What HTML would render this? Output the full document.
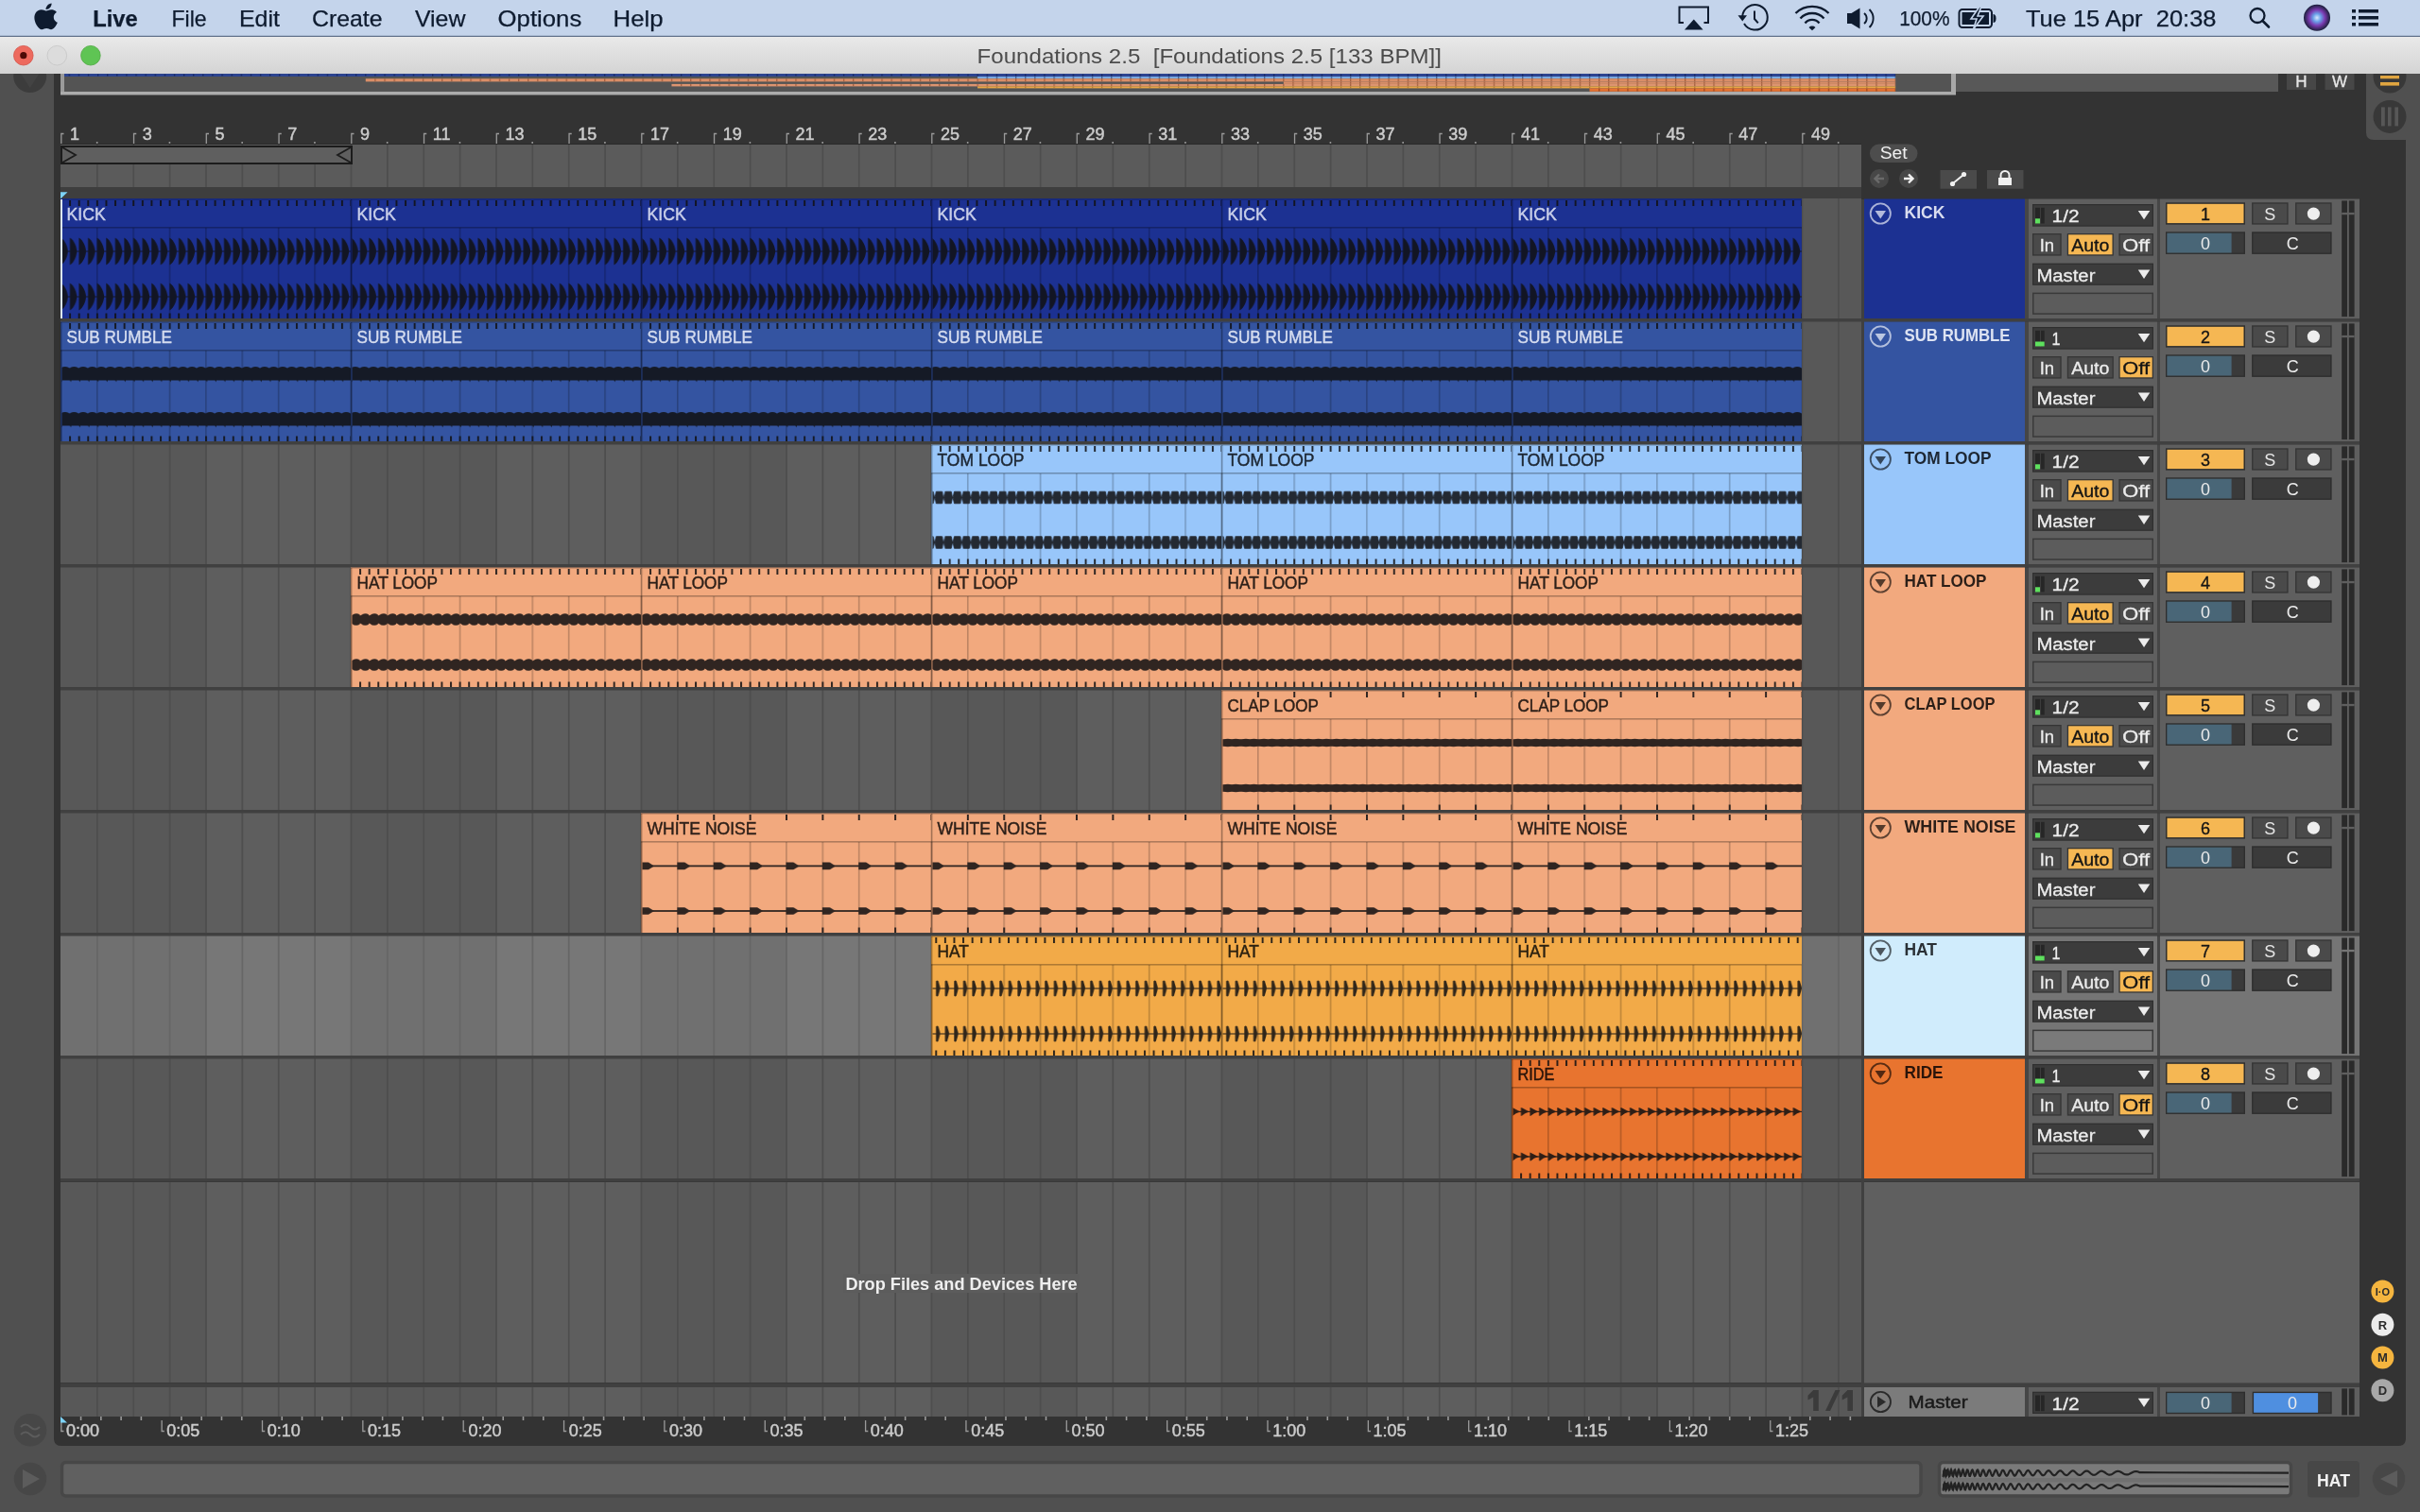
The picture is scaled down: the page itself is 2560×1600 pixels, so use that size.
<!DOCTYPE html>
<html><head><meta charset="utf-8"><title>Foundations 2.5</title>
<style>html,body{margin:0;padding:0;background:#505050;overflow:hidden;width:2560px;height:1600px}svg{display:block;will-change:transform}text{font-family:"Liberation Sans",sans-serif;white-space:pre}</style></head>
<body><svg width="2560" height="1600" viewBox="0 0 2560 1600"><defs><pattern id="cbar" patternUnits="userSpaceOnUse" x="63.6" y="0" width="38.375" height="126"><rect x="0" y="30" width="1.6" height="96" fill="rgba(0,0,0,0.22)"/></pattern>
<pattern id="ovt780" patternUnits="userSpaceOnUse" x="62.50" y="0" width="10.115" height="200"><rect x="0" y="78.60" width="1.3" height="1.80" fill="#0f1a45" opacity="0.75"/></pattern>
<pattern id="ovt810" patternUnits="userSpaceOnUse" x="1033.54" y="0" width="10.115" height="200"><rect x="0" y="81.20" width="1.3" height="1.80" fill="#2a3f70" opacity="0.75"/></pattern>
<pattern id="ovt832" patternUnits="userSpaceOnUse" x="386.18" y="0" width="10.115" height="200"><rect x="0" y="83.20" width="1.3" height="3.20" fill="#7a3c20" opacity="0.55"/></pattern>
<pattern id="ovt864" patternUnits="userSpaceOnUse" x="1357.22" y="0" width="10.115" height="200"><rect x="0" y="86.40" width="1.3" height="2.50" fill="#7a3c20" opacity="0.55"/></pattern>
<pattern id="ovt889" patternUnits="userSpaceOnUse" x="709.86" y="0" width="10.115" height="200"><rect x="0" y="88.90" width="1.3" height="2.50" fill="#7a3c20" opacity="0.55"/></pattern>
<pattern id="ovt914" patternUnits="userSpaceOnUse" x="1033.54" y="0" width="10.115" height="200"><rect x="0" y="91.40" width="1.3" height="2.00" fill="#8a5a20" opacity="0.55"/></pattern>
<pattern id="ovt934" patternUnits="userSpaceOnUse" x="1680.90" y="0" width="10.115" height="200"><rect x="0" y="93.40" width="1.3" height="3.40" fill="#6a2a10" opacity="0.55"/></pattern>
<pattern id="tkb0" patternUnits="userSpaceOnUse" x="63.5" y="0" width="9.59375" height="126"><rect x="0" y="1" width="2" height="6" fill="#121524"/><rect x="0" y="120.5" width="2" height="5.5" fill="#121524"/></pattern>
<pattern id="tkbh0" patternUnits="userSpaceOnUse" x="68.296875" y="0" width="9.59375" height="126"><rect x="0" y="1" width="2" height="6" fill="#121524"/><rect x="0" y="120.5" width="2" height="5.5" fill="#121524"/></pattern>
<pattern id="tkbar0" patternUnits="userSpaceOnUse" x="63.5" y="0" width="38.375" height="126"><rect x="0" y="1" width="2" height="6" fill="#121524"/><rect x="0" y="120.5" width="2" height="5.5" fill="#121524"/></pattern>
<pattern id="wkick0" patternUnits="userSpaceOnUse" x="64.0" y="0" width="9.59375" height="126"><path d="M0.3 40.5 C5 43 7.8 51 7.8 55 C7.8 59 5 67 0.3 69.5 Z" fill="#121524"/><rect x="0" y="54.5" width="9.59375" height="1" fill="#121524"/><path d="M0.3 88.5 C5 91 7.8 99 7.8 103 C7.8 107 5 115 0.3 117.5 Z" fill="#121524"/><rect x="0" y="102.5" width="9.59375" height="1" fill="#121524"/></pattern>
<pattern id="tkb1" patternUnits="userSpaceOnUse" x="63.5" y="0" width="9.59375" height="126"><rect x="0" y="1" width="2" height="6" fill="#151a26"/><rect x="0" y="120.5" width="2" height="5.5" fill="#151a26"/></pattern>
<pattern id="tkbh1" patternUnits="userSpaceOnUse" x="68.296875" y="0" width="9.59375" height="126"><rect x="0" y="1" width="2" height="6" fill="#151a26"/><rect x="0" y="120.5" width="2" height="5.5" fill="#151a26"/></pattern>
<pattern id="tkbar1" patternUnits="userSpaceOnUse" x="63.5" y="0" width="38.375" height="126"><rect x="0" y="1" width="2" height="6" fill="#151a26"/><rect x="0" y="120.5" width="2" height="5.5" fill="#151a26"/></pattern>
<pattern id="wsub1" patternUnits="userSpaceOnUse" x="64.0" y="0" width="9.59375" height="126"><rect x="0" y="48.5" width="9.59375" height="13" fill="#151a26"/><ellipse cx="4.796875" cy="49.5" rx="4.6" ry="2.6" fill="#151a26"/><path d="M0 60 L1.2 63.5 L2.4 60 Z" fill="#151a26"/><rect x="0" y="96.5" width="9.59375" height="13" fill="#151a26"/><ellipse cx="4.796875" cy="97.5" rx="4.6" ry="2.6" fill="#151a26"/><path d="M0 108 L1.2 111.5 L2.4 108 Z" fill="#151a26"/></pattern>
<pattern id="tkb2" patternUnits="userSpaceOnUse" x="63.5" y="0" width="9.59375" height="126"><rect x="0" y="1" width="2" height="6" fill="#232932"/><rect x="0" y="120.5" width="2" height="5.5" fill="#232932"/></pattern>
<pattern id="tkbh2" patternUnits="userSpaceOnUse" x="68.296875" y="0" width="9.59375" height="126"><rect x="0" y="1" width="2" height="6" fill="#232932"/><rect x="0" y="120.5" width="2" height="5.5" fill="#232932"/></pattern>
<pattern id="tkbar2" patternUnits="userSpaceOnUse" x="63.5" y="0" width="38.375" height="126"><rect x="0" y="1" width="2" height="6" fill="#232932"/><rect x="0" y="120.5" width="2" height="5.5" fill="#232932"/></pattern>
<pattern id="wtom2" patternUnits="userSpaceOnUse" x="64.0" y="0" width="9.59375" height="126"><rect x="0" y="54.9" width="9.59375" height="1.2" fill="#232932"/><path d="M3.89 55.5 L5.29 49.2 H11.69 L13.09 55.5 L11.69 61.8 H5.29 Z" fill="#232932" stroke="#232932" stroke-width="0.8" stroke-linejoin="round"/><path d="M-5.70 55.5 L-4.30 49.2 H2.10 L3.50 55.5 L2.10 61.8 H-4.30 Z" fill="#232932" stroke="#232932" stroke-width="0.8" stroke-linejoin="round"/><rect x="0" y="102.4" width="9.59375" height="1.2" fill="#232932"/><path d="M3.89 103 L5.29 96.7 H11.69 L13.09 103 L11.69 109.3 H5.29 Z" fill="#232932" stroke="#232932" stroke-width="0.8" stroke-linejoin="round"/><path d="M-5.70 103 L-4.30 96.7 H2.10 L3.50 103 L2.10 109.3 H-4.30 Z" fill="#232932" stroke="#232932" stroke-width="0.8" stroke-linejoin="round"/></pattern>
<pattern id="tkb3" patternUnits="userSpaceOnUse" x="63.5" y="0" width="9.59375" height="126"><rect x="0" y="1" width="2" height="6" fill="#302521"/><rect x="0" y="120.5" width="2" height="5.5" fill="#302521"/></pattern>
<pattern id="tkbh3" patternUnits="userSpaceOnUse" x="68.296875" y="0" width="9.59375" height="126"><rect x="0" y="1" width="2" height="6" fill="#302521"/><rect x="0" y="120.5" width="2" height="5.5" fill="#302521"/></pattern>
<pattern id="tkbar3" patternUnits="userSpaceOnUse" x="63.5" y="0" width="38.375" height="126"><rect x="0" y="1" width="2" height="6" fill="#302521"/><rect x="0" y="120.5" width="2" height="5.5" fill="#302521"/></pattern>
<pattern id="whl3" patternUnits="userSpaceOnUse" x="64.0" y="0" width="9.59375" height="126"><rect x="0" y="50.3" width="9.59375" height="8.4" fill="#302521"/><circle cx="5.796875" cy="54.5" r="6.3" fill="#302521"/><rect x="0" y="98.3" width="9.59375" height="8.4" fill="#302521"/><circle cx="5.796875" cy="102.5" r="6.3" fill="#302521"/></pattern>
<pattern id="tkb4" patternUnits="userSpaceOnUse" x="63.5" y="0" width="9.59375" height="126"><rect x="0" y="1" width="2" height="6" fill="#302521"/><rect x="0" y="120.5" width="2" height="5.5" fill="#302521"/></pattern>
<pattern id="tkbh4" patternUnits="userSpaceOnUse" x="68.296875" y="0" width="9.59375" height="126"><rect x="0" y="1" width="2" height="6" fill="#302521"/><rect x="0" y="120.5" width="2" height="5.5" fill="#302521"/></pattern>
<pattern id="tkbar4" patternUnits="userSpaceOnUse" x="63.5" y="0" width="38.375" height="126"><rect x="0" y="1" width="2" height="6" fill="#302521"/><rect x="0" y="120.5" width="2" height="5.5" fill="#302521"/></pattern>
<pattern id="wclap4" patternUnits="userSpaceOnUse" x="64.0" y="0" width="19.1875" height="126"><rect x="0" y="51.2" width="19.1875" height="7.6" fill="#302521"/><ellipse cx="6.715624999999999" cy="55" rx="6" ry="4.3" fill="#302521"/><ellipse cx="15.350000000000001" cy="55" rx="6" ry="4.3" fill="#302521"/><rect x="0" y="99.2" width="19.1875" height="7.6" fill="#302521"/><ellipse cx="6.715624999999999" cy="103" rx="6" ry="4.3" fill="#302521"/><ellipse cx="15.350000000000001" cy="103" rx="6" ry="4.3" fill="#302521"/></pattern>
<pattern id="tkb5" patternUnits="userSpaceOnUse" x="63.5" y="0" width="9.59375" height="126"><rect x="0" y="1" width="2" height="6" fill="#302521"/><rect x="0" y="120.5" width="2" height="5.5" fill="#302521"/></pattern>
<pattern id="tkbh5" patternUnits="userSpaceOnUse" x="68.296875" y="0" width="9.59375" height="126"><rect x="0" y="1" width="2" height="6" fill="#302521"/><rect x="0" y="120.5" width="2" height="5.5" fill="#302521"/></pattern>
<pattern id="tkbar5" patternUnits="userSpaceOnUse" x="63.5" y="0" width="38.375" height="126"><rect x="0" y="1" width="2" height="6" fill="#302521"/><rect x="0" y="120.5" width="2" height="5.5" fill="#302521"/></pattern>
<pattern id="wwn5" patternUnits="userSpaceOnUse" x="64.0" y="0" width="38.375" height="126"><rect x="0" y="54.5" width="38.375" height="1.8" fill="#302521"/><path d="M0 51.6 H8 L14 55.4 L8 59.199999999999996 H0 Z" fill="#302521"/><rect x="0" y="102.1" width="38.375" height="1.8" fill="#302521"/><path d="M0 99.2 H8 L14 103 L8 106.8 H0 Z" fill="#302521"/></pattern>
<pattern id="tkb6" patternUnits="userSpaceOnUse" x="63.5" y="0" width="9.59375" height="126"><rect x="0" y="1" width="2" height="6" fill="#30261a"/><rect x="0" y="120.5" width="2" height="5.5" fill="#30261a"/></pattern>
<pattern id="tkbh6" patternUnits="userSpaceOnUse" x="68.296875" y="0" width="9.59375" height="126"><rect x="0" y="1" width="2" height="6" fill="#30261a"/><rect x="0" y="120.5" width="2" height="5.5" fill="#30261a"/></pattern>
<pattern id="tkbar6" patternUnits="userSpaceOnUse" x="63.5" y="0" width="38.375" height="126"><rect x="0" y="1" width="2" height="6" fill="#30261a"/><rect x="0" y="120.5" width="2" height="5.5" fill="#30261a"/></pattern>
<pattern id="what6" patternUnits="userSpaceOnUse" x="64.0" y="0" width="9.59375" height="126"><rect x="0" y="54.45" width="9.59375" height="1.1" fill="#30261a"/><path d="M5.1 47.4 Q6.4 45.6 7.7 47.4 L9.4 53.5 Q9.6 55 9 57.5 L7.5 62.8 Q6.3 64.4 5.1 62.8 Z" fill="#30261a"/><rect x="0" y="102.45" width="9.59375" height="1.1" fill="#30261a"/><path d="M5.1 95.4 Q6.4 93.6 7.7 95.4 L9.4 101.5 Q9.6 103 9 105.5 L7.5 110.8 Q6.3 112.4 5.1 110.8 Z" fill="#30261a"/></pattern>
<pattern id="tkb7" patternUnits="userSpaceOnUse" x="63.5" y="0" width="9.59375" height="126"><rect x="0" y="1" width="2" height="6" fill="#2e1e16"/><rect x="0" y="120.5" width="2" height="5.5" fill="#2e1e16"/></pattern>
<pattern id="tkbh7" patternUnits="userSpaceOnUse" x="68.296875" y="0" width="9.59375" height="126"><rect x="0" y="1" width="2" height="6" fill="#2e1e16"/><rect x="0" y="120.5" width="2" height="5.5" fill="#2e1e16"/></pattern>
<pattern id="tkbar7" patternUnits="userSpaceOnUse" x="63.5" y="0" width="38.375" height="126"><rect x="0" y="1" width="2" height="6" fill="#2e1e16"/><rect x="0" y="120.5" width="2" height="5.5" fill="#2e1e16"/></pattern>
<pattern id="wride7" patternUnits="userSpaceOnUse" x="64.0" y="0" width="9.59375" height="126"><rect x="0" y="54.8" width="9.59375" height="1.2" fill="#2e1e16"/><path d="M0.3 51.199999999999996 Q0.6 50.8 1.4 51.3 L9.3 55.4 Q4.2 56.6 1.2 59.8 Q0.3 60.1 0.3 59.199999999999996 Z" fill="#2e1e16"/><rect x="0" y="102.4" width="9.59375" height="1.2" fill="#2e1e16"/><path d="M0.3 98.8 Q0.6 98.4 1.4 98.9 L9.3 103 Q4.2 104.2 1.2 107.4 Q0.3 107.7 0.3 106.8 Z" fill="#2e1e16"/></pattern>
<linearGradient id="tbg" x1="0" y1="0" x2="0" y2="1"><stop offset="0" stop-color="#e9e9e9"/><stop offset="1" stop-color="#d4d4d4"/></linearGradient>
<radialGradient id="siri" cx="0.5" cy="0.5" r="0.5"><stop offset="0" stop-color="#d8e8ff"/><stop offset="0.3" stop-color="#6aa0e8"/><stop offset="0.6" stop-color="#7a3ab0"/><stop offset="1" stop-color="#1a1f3a"/></radialGradient></defs>
<rect x="0.00" y="0.00" width="2560.00" height="1600.00" fill="#505050" />
<path d="M57 78 H2545 V1522 Q2545 1530 2537 1530 H65 Q57 1530 57 1522 Z" fill="#333333"/>
<path d="M2503 78 H2560 V148 H2511 Q2503 148 2503 140 Z" fill="#505050"/>
<circle cx="2528" cy="81" r="17.5" fill="#383838"/><rect x="2518" y="80" width="20" height="3.3" fill="#e0a540"/><rect x="2518" y="87" width="20" height="3.6" fill="#e0a540"/>
<circle cx="2528" cy="123.4" r="17.5" fill="#383838"/><rect x="2519" y="113.4" width="3.8" height="20" fill="#575757"/><rect x="2526" y="113.4" width="3.6" height="20" fill="#575757"/><rect x="2533.3" y="113.4" width="3.7" height="20" fill="#575757"/>
<circle cx="31.7" cy="80.6" r="17.5" fill="#3c3c3c"/><path d="M22 78 L31.7 93 L41.4 78" fill="#505050" opacity="0.35"/>
<rect x="64.00" y="78.00" width="2005.00" height="19.00" fill="#545454" />
<rect x="64.00" y="97.00" width="2005.00" height="3.50" fill="#acacac" />
<rect x="64.00" y="78.00" width="4.00" height="19.00" fill="#9a9a9a" />
<rect x="2064.00" y="78.00" width="5.00" height="21.00" fill="#a8a8a8" />
<rect x="68.00" y="78.00" width="1937.18" height="3.00" fill="#2c4490" />
<rect x="70.00" y="78.00" width="1935.18" height="3.00" fill="url(#ovt780)" />
<rect x="1034.14" y="81.00" width="971.04" height="2.20" fill="#7ba9df" />
<rect x="1036.14" y="81.00" width="969.04" height="2.20" fill="url(#ovt810)" />
<rect x="386.78" y="83.20" width="1618.40" height="3.20" fill="#d98e68" />
<rect x="388.78" y="83.20" width="1616.40" height="3.20" fill="url(#ovt832)" />
<rect x="1357.82" y="86.40" width="647.36" height="2.50" fill="#d98e68" />
<rect x="1359.82" y="86.40" width="645.36" height="2.50" fill="url(#ovt864)" />
<rect x="710.46" y="88.90" width="1294.72" height="2.50" fill="#dc9470" />
<rect x="712.46" y="88.90" width="1292.72" height="2.50" fill="url(#ovt889)" />
<rect x="1034.14" y="91.40" width="971.04" height="2.00" fill="#eaa746" />
<rect x="1036.14" y="91.40" width="969.04" height="2.00" fill="url(#ovt914)" />
<rect x="1681.50" y="93.40" width="323.68" height="3.40" fill="#e47232" />
<rect x="1683.50" y="93.40" width="321.68" height="3.40" fill="url(#ovt934)" />
<rect x="2069.00" y="78.00" width="341.00" height="19.00" fill="#585858" />
<rect x="2419.00" y="78.00" width="31.00" height="17.00" fill="#474747" />
<rect x="2459.50" y="78.00" width="31.00" height="17.00" fill="#474747" />
<text x="2434.50" y="91.50" font-size="17" fill="#e6e6e6" font-weight="normal" text-anchor="middle" stroke="#e6e6e6" stroke-width="0.3" >H</text>
<text x="2475.00" y="91.50" font-size="17" fill="#e6e6e6" font-weight="normal" text-anchor="middle" stroke="#e6e6e6" stroke-width="0.3" >W</text>
<path d="M64.80 152 V141.5 H67.50" fill="none" stroke="#9a9a9a" stroke-width="1.3"/>
<text x="74.00" y="148.30" font-size="18" fill="#cccccc" font-weight="normal" text-anchor="start" stroke="#cccccc" stroke-width="0.45" >1</text>
<rect x="101.88" y="150.00" width="1.60" height="1.80" fill="#9a9a9a" />
<path d="M141.55 152 V141.5 H144.25" fill="none" stroke="#9a9a9a" stroke-width="1.3"/>
<text x="150.75" y="148.30" font-size="18" fill="#cccccc" font-weight="normal" text-anchor="start" stroke="#cccccc" stroke-width="0.45" >3</text>
<rect x="178.62" y="150.00" width="1.60" height="1.80" fill="#9a9a9a" />
<path d="M218.30 152 V141.5 H221.00" fill="none" stroke="#9a9a9a" stroke-width="1.3"/>
<text x="227.50" y="148.30" font-size="18" fill="#cccccc" font-weight="normal" text-anchor="start" stroke="#cccccc" stroke-width="0.45" >5</text>
<rect x="255.38" y="150.00" width="1.60" height="1.80" fill="#9a9a9a" />
<path d="M295.05 152 V141.5 H297.75" fill="none" stroke="#9a9a9a" stroke-width="1.3"/>
<text x="304.25" y="148.30" font-size="18" fill="#cccccc" font-weight="normal" text-anchor="start" stroke="#cccccc" stroke-width="0.45" >7</text>
<rect x="332.12" y="150.00" width="1.60" height="1.80" fill="#9a9a9a" />
<path d="M371.80 152 V141.5 H374.50" fill="none" stroke="#9a9a9a" stroke-width="1.3"/>
<text x="381.00" y="148.30" font-size="18" fill="#cccccc" font-weight="normal" text-anchor="start" stroke="#cccccc" stroke-width="0.45" >9</text>
<rect x="408.88" y="150.00" width="1.60" height="1.80" fill="#9a9a9a" />
<path d="M448.55 152 V141.5 H451.25" fill="none" stroke="#9a9a9a" stroke-width="1.3"/>
<text x="457.75" y="148.30" font-size="18" fill="#cccccc" font-weight="normal" text-anchor="start" stroke="#cccccc" stroke-width="0.45" >11</text>
<rect x="485.62" y="150.00" width="1.60" height="1.80" fill="#9a9a9a" />
<path d="M525.30 152 V141.5 H528.00" fill="none" stroke="#9a9a9a" stroke-width="1.3"/>
<text x="534.50" y="148.30" font-size="18" fill="#cccccc" font-weight="normal" text-anchor="start" stroke="#cccccc" stroke-width="0.45" >13</text>
<rect x="562.38" y="150.00" width="1.60" height="1.80" fill="#9a9a9a" />
<path d="M602.05 152 V141.5 H604.75" fill="none" stroke="#9a9a9a" stroke-width="1.3"/>
<text x="611.25" y="148.30" font-size="18" fill="#cccccc" font-weight="normal" text-anchor="start" stroke="#cccccc" stroke-width="0.45" >15</text>
<rect x="639.12" y="150.00" width="1.60" height="1.80" fill="#9a9a9a" />
<path d="M678.80 152 V141.5 H681.50" fill="none" stroke="#9a9a9a" stroke-width="1.3"/>
<text x="688.00" y="148.30" font-size="18" fill="#cccccc" font-weight="normal" text-anchor="start" stroke="#cccccc" stroke-width="0.45" >17</text>
<rect x="715.88" y="150.00" width="1.60" height="1.80" fill="#9a9a9a" />
<path d="M755.55 152 V141.5 H758.25" fill="none" stroke="#9a9a9a" stroke-width="1.3"/>
<text x="764.75" y="148.30" font-size="18" fill="#cccccc" font-weight="normal" text-anchor="start" stroke="#cccccc" stroke-width="0.45" >19</text>
<rect x="792.62" y="150.00" width="1.60" height="1.80" fill="#9a9a9a" />
<path d="M832.30 152 V141.5 H835.00" fill="none" stroke="#9a9a9a" stroke-width="1.3"/>
<text x="841.50" y="148.30" font-size="18" fill="#cccccc" font-weight="normal" text-anchor="start" stroke="#cccccc" stroke-width="0.45" >21</text>
<rect x="869.38" y="150.00" width="1.60" height="1.80" fill="#9a9a9a" />
<path d="M909.05 152 V141.5 H911.75" fill="none" stroke="#9a9a9a" stroke-width="1.3"/>
<text x="918.25" y="148.30" font-size="18" fill="#cccccc" font-weight="normal" text-anchor="start" stroke="#cccccc" stroke-width="0.45" >23</text>
<rect x="946.12" y="150.00" width="1.60" height="1.80" fill="#9a9a9a" />
<path d="M985.80 152 V141.5 H988.50" fill="none" stroke="#9a9a9a" stroke-width="1.3"/>
<text x="995.00" y="148.30" font-size="18" fill="#cccccc" font-weight="normal" text-anchor="start" stroke="#cccccc" stroke-width="0.45" >25</text>
<rect x="1022.88" y="150.00" width="1.60" height="1.80" fill="#9a9a9a" />
<path d="M1062.55 152 V141.5 H1065.25" fill="none" stroke="#9a9a9a" stroke-width="1.3"/>
<text x="1071.75" y="148.30" font-size="18" fill="#cccccc" font-weight="normal" text-anchor="start" stroke="#cccccc" stroke-width="0.45" >27</text>
<rect x="1099.62" y="150.00" width="1.60" height="1.80" fill="#9a9a9a" />
<path d="M1139.30 152 V141.5 H1142.00" fill="none" stroke="#9a9a9a" stroke-width="1.3"/>
<text x="1148.50" y="148.30" font-size="18" fill="#cccccc" font-weight="normal" text-anchor="start" stroke="#cccccc" stroke-width="0.45" >29</text>
<rect x="1176.38" y="150.00" width="1.60" height="1.80" fill="#9a9a9a" />
<path d="M1216.05 152 V141.5 H1218.75" fill="none" stroke="#9a9a9a" stroke-width="1.3"/>
<text x="1225.25" y="148.30" font-size="18" fill="#cccccc" font-weight="normal" text-anchor="start" stroke="#cccccc" stroke-width="0.45" >31</text>
<rect x="1253.12" y="150.00" width="1.60" height="1.80" fill="#9a9a9a" />
<path d="M1292.80 152 V141.5 H1295.50" fill="none" stroke="#9a9a9a" stroke-width="1.3"/>
<text x="1302.00" y="148.30" font-size="18" fill="#cccccc" font-weight="normal" text-anchor="start" stroke="#cccccc" stroke-width="0.45" >33</text>
<rect x="1329.88" y="150.00" width="1.60" height="1.80" fill="#9a9a9a" />
<path d="M1369.55 152 V141.5 H1372.25" fill="none" stroke="#9a9a9a" stroke-width="1.3"/>
<text x="1378.75" y="148.30" font-size="18" fill="#cccccc" font-weight="normal" text-anchor="start" stroke="#cccccc" stroke-width="0.45" >35</text>
<rect x="1406.62" y="150.00" width="1.60" height="1.80" fill="#9a9a9a" />
<path d="M1446.30 152 V141.5 H1449.00" fill="none" stroke="#9a9a9a" stroke-width="1.3"/>
<text x="1455.50" y="148.30" font-size="18" fill="#cccccc" font-weight="normal" text-anchor="start" stroke="#cccccc" stroke-width="0.45" >37</text>
<rect x="1483.38" y="150.00" width="1.60" height="1.80" fill="#9a9a9a" />
<path d="M1523.05 152 V141.5 H1525.75" fill="none" stroke="#9a9a9a" stroke-width="1.3"/>
<text x="1532.25" y="148.30" font-size="18" fill="#cccccc" font-weight="normal" text-anchor="start" stroke="#cccccc" stroke-width="0.45" >39</text>
<rect x="1560.12" y="150.00" width="1.60" height="1.80" fill="#9a9a9a" />
<path d="M1599.80 152 V141.5 H1602.50" fill="none" stroke="#9a9a9a" stroke-width="1.3"/>
<text x="1609.00" y="148.30" font-size="18" fill="#cccccc" font-weight="normal" text-anchor="start" stroke="#cccccc" stroke-width="0.45" >41</text>
<rect x="1636.88" y="150.00" width="1.60" height="1.80" fill="#9a9a9a" />
<path d="M1676.55 152 V141.5 H1679.25" fill="none" stroke="#9a9a9a" stroke-width="1.3"/>
<text x="1685.75" y="148.30" font-size="18" fill="#cccccc" font-weight="normal" text-anchor="start" stroke="#cccccc" stroke-width="0.45" >43</text>
<rect x="1713.62" y="150.00" width="1.60" height="1.80" fill="#9a9a9a" />
<path d="M1753.30 152 V141.5 H1756.00" fill="none" stroke="#9a9a9a" stroke-width="1.3"/>
<text x="1762.50" y="148.30" font-size="18" fill="#cccccc" font-weight="normal" text-anchor="start" stroke="#cccccc" stroke-width="0.45" >45</text>
<rect x="1790.38" y="150.00" width="1.60" height="1.80" fill="#9a9a9a" />
<path d="M1830.05 152 V141.5 H1832.75" fill="none" stroke="#9a9a9a" stroke-width="1.3"/>
<text x="1839.25" y="148.30" font-size="18" fill="#cccccc" font-weight="normal" text-anchor="start" stroke="#cccccc" stroke-width="0.45" >47</text>
<rect x="1867.12" y="150.00" width="1.60" height="1.80" fill="#9a9a9a" />
<path d="M1906.80 152 V141.5 H1909.50" fill="none" stroke="#9a9a9a" stroke-width="1.3"/>
<text x="1916.00" y="148.30" font-size="18" fill="#cccccc" font-weight="normal" text-anchor="start" stroke="#cccccc" stroke-width="0.45" >49</text>
<rect x="1943.88" y="150.00" width="1.60" height="1.80" fill="#9a9a9a" />
<rect x="64.00" y="152.00" width="1905.00" height="1.00" fill="#2a2a2a" />
<rect x="64.00" y="153.00" width="1905.00" height="45.00" fill="#5b5b5b" />
<rect x="102.03" y="153.00" width="1.70" height="45.00" fill="#4e4e4e" />
<rect x="140.40" y="153.00" width="1.70" height="45.00" fill="#4e4e4e" />
<rect x="178.78" y="153.00" width="1.70" height="45.00" fill="#4e4e4e" />
<rect x="217.15" y="153.00" width="1.70" height="45.00" fill="#4e4e4e" />
<rect x="255.53" y="153.00" width="1.70" height="45.00" fill="#4e4e4e" />
<rect x="293.90" y="153.00" width="1.70" height="45.00" fill="#4e4e4e" />
<rect x="332.27" y="153.00" width="1.70" height="45.00" fill="#4e4e4e" />
<rect x="370.65" y="153.00" width="1.70" height="45.00" fill="#4e4e4e" />
<rect x="409.02" y="153.00" width="1.70" height="45.00" fill="#4e4e4e" />
<rect x="447.40" y="153.00" width="1.70" height="45.00" fill="#4e4e4e" />
<rect x="485.77" y="153.00" width="1.70" height="45.00" fill="#4e4e4e" />
<rect x="524.15" y="153.00" width="1.70" height="45.00" fill="#4e4e4e" />
<rect x="562.52" y="153.00" width="1.70" height="45.00" fill="#4e4e4e" />
<rect x="600.90" y="153.00" width="1.70" height="45.00" fill="#4e4e4e" />
<rect x="639.27" y="153.00" width="1.70" height="45.00" fill="#4e4e4e" />
<rect x="677.65" y="153.00" width="1.70" height="45.00" fill="#4e4e4e" />
<rect x="716.02" y="153.00" width="1.70" height="45.00" fill="#4e4e4e" />
<rect x="754.40" y="153.00" width="1.70" height="45.00" fill="#4e4e4e" />
<rect x="792.77" y="153.00" width="1.70" height="45.00" fill="#4e4e4e" />
<rect x="831.15" y="153.00" width="1.70" height="45.00" fill="#4e4e4e" />
<rect x="869.52" y="153.00" width="1.70" height="45.00" fill="#4e4e4e" />
<rect x="907.90" y="153.00" width="1.70" height="45.00" fill="#4e4e4e" />
<rect x="946.27" y="153.00" width="1.70" height="45.00" fill="#4e4e4e" />
<rect x="984.65" y="153.00" width="1.70" height="45.00" fill="#4e4e4e" />
<rect x="1023.02" y="153.00" width="1.70" height="45.00" fill="#4e4e4e" />
<rect x="1061.40" y="153.00" width="1.70" height="45.00" fill="#4e4e4e" />
<rect x="1099.78" y="153.00" width="1.70" height="45.00" fill="#4e4e4e" />
<rect x="1138.15" y="153.00" width="1.70" height="45.00" fill="#4e4e4e" />
<rect x="1176.53" y="153.00" width="1.70" height="45.00" fill="#4e4e4e" />
<rect x="1214.90" y="153.00" width="1.70" height="45.00" fill="#4e4e4e" />
<rect x="1253.28" y="153.00" width="1.70" height="45.00" fill="#4e4e4e" />
<rect x="1291.65" y="153.00" width="1.70" height="45.00" fill="#4e4e4e" />
<rect x="1330.03" y="153.00" width="1.70" height="45.00" fill="#4e4e4e" />
<rect x="1368.40" y="153.00" width="1.70" height="45.00" fill="#4e4e4e" />
<rect x="1406.78" y="153.00" width="1.70" height="45.00" fill="#4e4e4e" />
<rect x="1445.15" y="153.00" width="1.70" height="45.00" fill="#4e4e4e" />
<rect x="1483.53" y="153.00" width="1.70" height="45.00" fill="#4e4e4e" />
<rect x="1521.90" y="153.00" width="1.70" height="45.00" fill="#4e4e4e" />
<rect x="1560.28" y="153.00" width="1.70" height="45.00" fill="#4e4e4e" />
<rect x="1598.65" y="153.00" width="1.70" height="45.00" fill="#4e4e4e" />
<rect x="1637.03" y="153.00" width="1.70" height="45.00" fill="#4e4e4e" />
<rect x="1675.40" y="153.00" width="1.70" height="45.00" fill="#4e4e4e" />
<rect x="1713.78" y="153.00" width="1.70" height="45.00" fill="#4e4e4e" />
<rect x="1752.15" y="153.00" width="1.70" height="45.00" fill="#4e4e4e" />
<rect x="1790.53" y="153.00" width="1.70" height="45.00" fill="#4e4e4e" />
<rect x="1828.90" y="153.00" width="1.70" height="45.00" fill="#4e4e4e" />
<rect x="1867.28" y="153.00" width="1.70" height="45.00" fill="#4e4e4e" />
<rect x="1905.65" y="153.00" width="1.70" height="45.00" fill="#4e4e4e" />
<rect x="1944.03" y="153.00" width="1.70" height="45.00" fill="#4e4e4e" />
<rect x="65" y="155" width="307" height="18" fill="#5f5f5f" stroke="#1c1c1c" stroke-width="2"/>
<path d="M66 156 L80 164 L66 172" fill="none" stroke="#1c1c1c" stroke-width="1.8"/>
<path d="M371 156 L357 164 L371 172" fill="none" stroke="#1c1c1c" stroke-width="1.8"/>
<rect x="64.00" y="198.00" width="1905.00" height="13.00" fill="#3e3e3e" />
<path d="M64 203.3 H71.5 L64 210.5 Z" fill="#7dd3f7"/>
<rect x="64.00" y="210.00" width="153.50" height="127.00" fill="#585858" />
<rect x="217.50" y="210.00" width="153.50" height="127.00" fill="#5e5e5e" />
<rect x="371.00" y="210.00" width="153.50" height="127.00" fill="#585858" />
<rect x="524.50" y="210.00" width="153.50" height="127.00" fill="#5e5e5e" />
<rect x="678.00" y="210.00" width="153.50" height="127.00" fill="#585858" />
<rect x="831.50" y="210.00" width="153.50" height="127.00" fill="#5e5e5e" />
<rect x="985.00" y="210.00" width="153.50" height="127.00" fill="#585858" />
<rect x="1138.50" y="210.00" width="153.50" height="127.00" fill="#5e5e5e" />
<rect x="1292.00" y="210.00" width="153.50" height="127.00" fill="#585858" />
<rect x="1445.50" y="210.00" width="153.50" height="127.00" fill="#5e5e5e" />
<rect x="1599.00" y="210.00" width="153.50" height="127.00" fill="#585858" />
<rect x="1752.50" y="210.00" width="153.50" height="127.00" fill="#5e5e5e" />
<rect x="1906.00" y="210.00" width="63.00" height="127.00" fill="#585858" />
<rect x="102.03" y="210.00" width="1.70" height="127.00" fill="#4e4e4e" />
<rect x="140.40" y="210.00" width="1.70" height="127.00" fill="#4e4e4e" />
<rect x="178.78" y="210.00" width="1.70" height="127.00" fill="#4e4e4e" />
<rect x="217.15" y="210.00" width="1.70" height="127.00" fill="#4e4e4e" />
<rect x="255.53" y="210.00" width="1.70" height="127.00" fill="#4e4e4e" />
<rect x="293.90" y="210.00" width="1.70" height="127.00" fill="#4e4e4e" />
<rect x="332.27" y="210.00" width="1.70" height="127.00" fill="#4e4e4e" />
<rect x="370.65" y="210.00" width="1.70" height="127.00" fill="#4e4e4e" />
<rect x="409.02" y="210.00" width="1.70" height="127.00" fill="#4e4e4e" />
<rect x="447.40" y="210.00" width="1.70" height="127.00" fill="#4e4e4e" />
<rect x="485.77" y="210.00" width="1.70" height="127.00" fill="#4e4e4e" />
<rect x="524.15" y="210.00" width="1.70" height="127.00" fill="#4e4e4e" />
<rect x="562.52" y="210.00" width="1.70" height="127.00" fill="#4e4e4e" />
<rect x="600.90" y="210.00" width="1.70" height="127.00" fill="#4e4e4e" />
<rect x="639.27" y="210.00" width="1.70" height="127.00" fill="#4e4e4e" />
<rect x="677.65" y="210.00" width="1.70" height="127.00" fill="#4e4e4e" />
<rect x="716.02" y="210.00" width="1.70" height="127.00" fill="#4e4e4e" />
<rect x="754.40" y="210.00" width="1.70" height="127.00" fill="#4e4e4e" />
<rect x="792.77" y="210.00" width="1.70" height="127.00" fill="#4e4e4e" />
<rect x="831.15" y="210.00" width="1.70" height="127.00" fill="#4e4e4e" />
<rect x="869.52" y="210.00" width="1.70" height="127.00" fill="#4e4e4e" />
<rect x="907.90" y="210.00" width="1.70" height="127.00" fill="#4e4e4e" />
<rect x="946.27" y="210.00" width="1.70" height="127.00" fill="#4e4e4e" />
<rect x="984.65" y="210.00" width="1.70" height="127.00" fill="#4e4e4e" />
<rect x="1023.02" y="210.00" width="1.70" height="127.00" fill="#4e4e4e" />
<rect x="1061.40" y="210.00" width="1.70" height="127.00" fill="#4e4e4e" />
<rect x="1099.78" y="210.00" width="1.70" height="127.00" fill="#4e4e4e" />
<rect x="1138.15" y="210.00" width="1.70" height="127.00" fill="#4e4e4e" />
<rect x="1176.53" y="210.00" width="1.70" height="127.00" fill="#4e4e4e" />
<rect x="1214.90" y="210.00" width="1.70" height="127.00" fill="#4e4e4e" />
<rect x="1253.28" y="210.00" width="1.70" height="127.00" fill="#4e4e4e" />
<rect x="1291.65" y="210.00" width="1.70" height="127.00" fill="#4e4e4e" />
<rect x="1330.03" y="210.00" width="1.70" height="127.00" fill="#4e4e4e" />
<rect x="1368.40" y="210.00" width="1.70" height="127.00" fill="#4e4e4e" />
<rect x="1406.78" y="210.00" width="1.70" height="127.00" fill="#4e4e4e" />
<rect x="1445.15" y="210.00" width="1.70" height="127.00" fill="#4e4e4e" />
<rect x="1483.53" y="210.00" width="1.70" height="127.00" fill="#4e4e4e" />
<rect x="1521.90" y="210.00" width="1.70" height="127.00" fill="#4e4e4e" />
<rect x="1560.28" y="210.00" width="1.70" height="127.00" fill="#4e4e4e" />
<rect x="1598.65" y="210.00" width="1.70" height="127.00" fill="#4e4e4e" />
<rect x="1637.03" y="210.00" width="1.70" height="127.00" fill="#4e4e4e" />
<rect x="1675.40" y="210.00" width="1.70" height="127.00" fill="#4e4e4e" />
<rect x="1713.78" y="210.00" width="1.70" height="127.00" fill="#4e4e4e" />
<rect x="1752.15" y="210.00" width="1.70" height="127.00" fill="#4e4e4e" />
<rect x="1790.53" y="210.00" width="1.70" height="127.00" fill="#4e4e4e" />
<rect x="1828.90" y="210.00" width="1.70" height="127.00" fill="#4e4e4e" />
<rect x="1867.28" y="210.00" width="1.70" height="127.00" fill="#4e4e4e" />
<rect x="1905.65" y="210.00" width="1.70" height="127.00" fill="#4e4e4e" />
<rect x="1944.03" y="210.00" width="1.70" height="127.00" fill="#4e4e4e" />
<g transform="translate(0,211)">
<rect x="64.00" y="-1.00" width="307.00" height="127.00" fill="#1c3192" />
<rect x="64.00" y="0.00" width="307.00" height="126.00" fill="url(#cbar)" />
<rect x="65.50" y="30.00" width="305.50" height="96.00" fill="url(#wkick0)" />
<rect x="66.00" y="0.00" width="305.00" height="126.00" fill="url(#tkb0)" />
<rect x="64.00" y="-0.50" width="307.00" height="1.00" fill="rgba(0,0,0,0.3)" />
<rect x="64.00" y="29.00" width="307.00" height="1.60" fill="rgba(0,0,0,0.28)" />
<rect x="63.80" y="0.00" width="1.60" height="126.00" fill="rgba(0,0,0,0.33)" />
<text x="70.50" y="21.80" font-size="18.5" fill="#c9cfe9" font-weight="normal" text-anchor="start" textLength="41.30" lengthAdjust="spacingAndGlyphs" stroke="#c9cfe9" stroke-width="0.45" >KICK</text>
<rect x="371.00" y="-1.00" width="307.00" height="127.00" fill="#1c3192" />
<rect x="371.00" y="0.00" width="307.00" height="126.00" fill="url(#cbar)" />
<rect x="372.50" y="30.00" width="305.50" height="96.00" fill="url(#wkick0)" />
<rect x="373.00" y="0.00" width="305.00" height="126.00" fill="url(#tkb0)" />
<rect x="371.00" y="-0.50" width="307.00" height="1.00" fill="rgba(0,0,0,0.3)" />
<rect x="371.00" y="29.00" width="307.00" height="1.60" fill="rgba(0,0,0,0.28)" />
<rect x="370.80" y="0.00" width="1.60" height="126.00" fill="rgba(0,0,0,0.33)" />
<text x="377.50" y="21.80" font-size="18.5" fill="#c9cfe9" font-weight="normal" text-anchor="start" textLength="41.30" lengthAdjust="spacingAndGlyphs" stroke="#c9cfe9" stroke-width="0.45" >KICK</text>
<rect x="678.00" y="-1.00" width="307.00" height="127.00" fill="#1c3192" />
<rect x="678.00" y="0.00" width="307.00" height="126.00" fill="url(#cbar)" />
<rect x="679.50" y="30.00" width="305.50" height="96.00" fill="url(#wkick0)" />
<rect x="680.00" y="0.00" width="305.00" height="126.00" fill="url(#tkb0)" />
<rect x="678.00" y="-0.50" width="307.00" height="1.00" fill="rgba(0,0,0,0.3)" />
<rect x="678.00" y="29.00" width="307.00" height="1.60" fill="rgba(0,0,0,0.28)" />
<rect x="677.80" y="0.00" width="1.60" height="126.00" fill="rgba(0,0,0,0.33)" />
<text x="684.50" y="21.80" font-size="18.5" fill="#c9cfe9" font-weight="normal" text-anchor="start" textLength="41.30" lengthAdjust="spacingAndGlyphs" stroke="#c9cfe9" stroke-width="0.45" >KICK</text>
<rect x="985.00" y="-1.00" width="307.00" height="127.00" fill="#1c3192" />
<rect x="985.00" y="0.00" width="307.00" height="126.00" fill="url(#cbar)" />
<rect x="986.50" y="30.00" width="305.50" height="96.00" fill="url(#wkick0)" />
<rect x="987.00" y="0.00" width="305.00" height="126.00" fill="url(#tkb0)" />
<rect x="985.00" y="-0.50" width="307.00" height="1.00" fill="rgba(0,0,0,0.3)" />
<rect x="985.00" y="29.00" width="307.00" height="1.60" fill="rgba(0,0,0,0.28)" />
<rect x="984.80" y="0.00" width="1.60" height="126.00" fill="rgba(0,0,0,0.33)" />
<text x="991.50" y="21.80" font-size="18.5" fill="#c9cfe9" font-weight="normal" text-anchor="start" textLength="41.30" lengthAdjust="spacingAndGlyphs" stroke="#c9cfe9" stroke-width="0.45" >KICK</text>
<rect x="1292.00" y="-1.00" width="307.00" height="127.00" fill="#1c3192" />
<rect x="1292.00" y="0.00" width="307.00" height="126.00" fill="url(#cbar)" />
<rect x="1293.50" y="30.00" width="305.50" height="96.00" fill="url(#wkick0)" />
<rect x="1294.00" y="0.00" width="305.00" height="126.00" fill="url(#tkb0)" />
<rect x="1292.00" y="-0.50" width="307.00" height="1.00" fill="rgba(0,0,0,0.3)" />
<rect x="1292.00" y="29.00" width="307.00" height="1.60" fill="rgba(0,0,0,0.28)" />
<rect x="1291.80" y="0.00" width="1.60" height="126.00" fill="rgba(0,0,0,0.33)" />
<text x="1298.50" y="21.80" font-size="18.5" fill="#c9cfe9" font-weight="normal" text-anchor="start" textLength="41.30" lengthAdjust="spacingAndGlyphs" stroke="#c9cfe9" stroke-width="0.45" >KICK</text>
<rect x="1599.00" y="-1.00" width="307.00" height="127.00" fill="#1c3192" />
<rect x="1599.00" y="0.00" width="307.00" height="126.00" fill="url(#cbar)" />
<rect x="1600.50" y="30.00" width="305.50" height="96.00" fill="url(#wkick0)" />
<rect x="1601.00" y="0.00" width="305.00" height="126.00" fill="url(#tkb0)" />
<rect x="1599.00" y="-0.50" width="307.00" height="1.00" fill="rgba(0,0,0,0.3)" />
<rect x="1599.00" y="29.00" width="307.00" height="1.60" fill="rgba(0,0,0,0.28)" />
<rect x="1598.80" y="0.00" width="1.60" height="126.00" fill="rgba(0,0,0,0.33)" />
<text x="1605.50" y="21.80" font-size="18.5" fill="#c9cfe9" font-weight="normal" text-anchor="start" textLength="41.30" lengthAdjust="spacingAndGlyphs" stroke="#c9cfe9" stroke-width="0.45" >KICK</text>
</g>
<rect x="64.00" y="340.00" width="153.50" height="127.00" fill="#585858" />
<rect x="217.50" y="340.00" width="153.50" height="127.00" fill="#5e5e5e" />
<rect x="371.00" y="340.00" width="153.50" height="127.00" fill="#585858" />
<rect x="524.50" y="340.00" width="153.50" height="127.00" fill="#5e5e5e" />
<rect x="678.00" y="340.00" width="153.50" height="127.00" fill="#585858" />
<rect x="831.50" y="340.00" width="153.50" height="127.00" fill="#5e5e5e" />
<rect x="985.00" y="340.00" width="153.50" height="127.00" fill="#585858" />
<rect x="1138.50" y="340.00" width="153.50" height="127.00" fill="#5e5e5e" />
<rect x="1292.00" y="340.00" width="153.50" height="127.00" fill="#585858" />
<rect x="1445.50" y="340.00" width="153.50" height="127.00" fill="#5e5e5e" />
<rect x="1599.00" y="340.00" width="153.50" height="127.00" fill="#585858" />
<rect x="1752.50" y="340.00" width="153.50" height="127.00" fill="#5e5e5e" />
<rect x="1906.00" y="340.00" width="63.00" height="127.00" fill="#585858" />
<rect x="102.03" y="340.00" width="1.70" height="127.00" fill="#4e4e4e" />
<rect x="140.40" y="340.00" width="1.70" height="127.00" fill="#4e4e4e" />
<rect x="178.78" y="340.00" width="1.70" height="127.00" fill="#4e4e4e" />
<rect x="217.15" y="340.00" width="1.70" height="127.00" fill="#4e4e4e" />
<rect x="255.53" y="340.00" width="1.70" height="127.00" fill="#4e4e4e" />
<rect x="293.90" y="340.00" width="1.70" height="127.00" fill="#4e4e4e" />
<rect x="332.27" y="340.00" width="1.70" height="127.00" fill="#4e4e4e" />
<rect x="370.65" y="340.00" width="1.70" height="127.00" fill="#4e4e4e" />
<rect x="409.02" y="340.00" width="1.70" height="127.00" fill="#4e4e4e" />
<rect x="447.40" y="340.00" width="1.70" height="127.00" fill="#4e4e4e" />
<rect x="485.77" y="340.00" width="1.70" height="127.00" fill="#4e4e4e" />
<rect x="524.15" y="340.00" width="1.70" height="127.00" fill="#4e4e4e" />
<rect x="562.52" y="340.00" width="1.70" height="127.00" fill="#4e4e4e" />
<rect x="600.90" y="340.00" width="1.70" height="127.00" fill="#4e4e4e" />
<rect x="639.27" y="340.00" width="1.70" height="127.00" fill="#4e4e4e" />
<rect x="677.65" y="340.00" width="1.70" height="127.00" fill="#4e4e4e" />
<rect x="716.02" y="340.00" width="1.70" height="127.00" fill="#4e4e4e" />
<rect x="754.40" y="340.00" width="1.70" height="127.00" fill="#4e4e4e" />
<rect x="792.77" y="340.00" width="1.70" height="127.00" fill="#4e4e4e" />
<rect x="831.15" y="340.00" width="1.70" height="127.00" fill="#4e4e4e" />
<rect x="869.52" y="340.00" width="1.70" height="127.00" fill="#4e4e4e" />
<rect x="907.90" y="340.00" width="1.70" height="127.00" fill="#4e4e4e" />
<rect x="946.27" y="340.00" width="1.70" height="127.00" fill="#4e4e4e" />
<rect x="984.65" y="340.00" width="1.70" height="127.00" fill="#4e4e4e" />
<rect x="1023.02" y="340.00" width="1.70" height="127.00" fill="#4e4e4e" />
<rect x="1061.40" y="340.00" width="1.70" height="127.00" fill="#4e4e4e" />
<rect x="1099.78" y="340.00" width="1.70" height="127.00" fill="#4e4e4e" />
<rect x="1138.15" y="340.00" width="1.70" height="127.00" fill="#4e4e4e" />
<rect x="1176.53" y="340.00" width="1.70" height="127.00" fill="#4e4e4e" />
<rect x="1214.90" y="340.00" width="1.70" height="127.00" fill="#4e4e4e" />
<rect x="1253.28" y="340.00" width="1.70" height="127.00" fill="#4e4e4e" />
<rect x="1291.65" y="340.00" width="1.70" height="127.00" fill="#4e4e4e" />
<rect x="1330.03" y="340.00" width="1.70" height="127.00" fill="#4e4e4e" />
<rect x="1368.40" y="340.00" width="1.70" height="127.00" fill="#4e4e4e" />
<rect x="1406.78" y="340.00" width="1.70" height="127.00" fill="#4e4e4e" />
<rect x="1445.15" y="340.00" width="1.70" height="127.00" fill="#4e4e4e" />
<rect x="1483.53" y="340.00" width="1.70" height="127.00" fill="#4e4e4e" />
<rect x="1521.90" y="340.00" width="1.70" height="127.00" fill="#4e4e4e" />
<rect x="1560.28" y="340.00" width="1.70" height="127.00" fill="#4e4e4e" />
<rect x="1598.65" y="340.00" width="1.70" height="127.00" fill="#4e4e4e" />
<rect x="1637.03" y="340.00" width="1.70" height="127.00" fill="#4e4e4e" />
<rect x="1675.40" y="340.00" width="1.70" height="127.00" fill="#4e4e4e" />
<rect x="1713.78" y="340.00" width="1.70" height="127.00" fill="#4e4e4e" />
<rect x="1752.15" y="340.00" width="1.70" height="127.00" fill="#4e4e4e" />
<rect x="1790.53" y="340.00" width="1.70" height="127.00" fill="#4e4e4e" />
<rect x="1828.90" y="340.00" width="1.70" height="127.00" fill="#4e4e4e" />
<rect x="1867.28" y="340.00" width="1.70" height="127.00" fill="#4e4e4e" />
<rect x="1905.65" y="340.00" width="1.70" height="127.00" fill="#4e4e4e" />
<rect x="1944.03" y="340.00" width="1.70" height="127.00" fill="#4e4e4e" />
<g transform="translate(0,341)">
<rect x="64.00" y="-1.00" width="307.00" height="127.00" fill="#3454a1" />
<rect x="64.00" y="0.00" width="307.00" height="126.00" fill="url(#cbar)" />
<rect x="65.50" y="30.00" width="305.50" height="96.00" fill="url(#wsub1)" />
<rect x="66.00" y="0.00" width="305.00" height="126.00" fill="url(#tkb1)" />
<rect x="64.00" y="-0.50" width="307.00" height="1.00" fill="rgba(0,0,0,0.3)" />
<rect x="64.00" y="29.00" width="307.00" height="1.60" fill="rgba(0,0,0,0.28)" />
<rect x="63.80" y="0.00" width="1.60" height="126.00" fill="rgba(0,0,0,0.33)" />
<text x="70.50" y="21.80" font-size="18.5" fill="#d5dcef" font-weight="normal" text-anchor="start" textLength="111.40" lengthAdjust="spacingAndGlyphs" stroke="#d5dcef" stroke-width="0.45" >SUB RUMBLE</text>
<rect x="371.00" y="-1.00" width="307.00" height="127.00" fill="#3454a1" />
<rect x="371.00" y="0.00" width="307.00" height="126.00" fill="url(#cbar)" />
<rect x="372.50" y="30.00" width="305.50" height="96.00" fill="url(#wsub1)" />
<rect x="373.00" y="0.00" width="305.00" height="126.00" fill="url(#tkb1)" />
<rect x="371.00" y="-0.50" width="307.00" height="1.00" fill="rgba(0,0,0,0.3)" />
<rect x="371.00" y="29.00" width="307.00" height="1.60" fill="rgba(0,0,0,0.28)" />
<rect x="370.80" y="0.00" width="1.60" height="126.00" fill="rgba(0,0,0,0.33)" />
<text x="377.50" y="21.80" font-size="18.5" fill="#d5dcef" font-weight="normal" text-anchor="start" textLength="111.40" lengthAdjust="spacingAndGlyphs" stroke="#d5dcef" stroke-width="0.45" >SUB RUMBLE</text>
<rect x="678.00" y="-1.00" width="307.00" height="127.00" fill="#3454a1" />
<rect x="678.00" y="0.00" width="307.00" height="126.00" fill="url(#cbar)" />
<rect x="679.50" y="30.00" width="305.50" height="96.00" fill="url(#wsub1)" />
<rect x="680.00" y="0.00" width="305.00" height="126.00" fill="url(#tkb1)" />
<rect x="678.00" y="-0.50" width="307.00" height="1.00" fill="rgba(0,0,0,0.3)" />
<rect x="678.00" y="29.00" width="307.00" height="1.60" fill="rgba(0,0,0,0.28)" />
<rect x="677.80" y="0.00" width="1.60" height="126.00" fill="rgba(0,0,0,0.33)" />
<text x="684.50" y="21.80" font-size="18.5" fill="#d5dcef" font-weight="normal" text-anchor="start" textLength="111.40" lengthAdjust="spacingAndGlyphs" stroke="#d5dcef" stroke-width="0.45" >SUB RUMBLE</text>
<rect x="985.00" y="-1.00" width="307.00" height="127.00" fill="#3454a1" />
<rect x="985.00" y="0.00" width="307.00" height="126.00" fill="url(#cbar)" />
<rect x="986.50" y="30.00" width="305.50" height="96.00" fill="url(#wsub1)" />
<rect x="987.00" y="0.00" width="305.00" height="126.00" fill="url(#tkb1)" />
<rect x="985.00" y="-0.50" width="307.00" height="1.00" fill="rgba(0,0,0,0.3)" />
<rect x="985.00" y="29.00" width="307.00" height="1.60" fill="rgba(0,0,0,0.28)" />
<rect x="984.80" y="0.00" width="1.60" height="126.00" fill="rgba(0,0,0,0.33)" />
<text x="991.50" y="21.80" font-size="18.5" fill="#d5dcef" font-weight="normal" text-anchor="start" textLength="111.40" lengthAdjust="spacingAndGlyphs" stroke="#d5dcef" stroke-width="0.45" >SUB RUMBLE</text>
<rect x="1292.00" y="-1.00" width="307.00" height="127.00" fill="#3454a1" />
<rect x="1292.00" y="0.00" width="307.00" height="126.00" fill="url(#cbar)" />
<rect x="1293.50" y="30.00" width="305.50" height="96.00" fill="url(#wsub1)" />
<rect x="1294.00" y="0.00" width="305.00" height="126.00" fill="url(#tkb1)" />
<rect x="1292.00" y="-0.50" width="307.00" height="1.00" fill="rgba(0,0,0,0.3)" />
<rect x="1292.00" y="29.00" width="307.00" height="1.60" fill="rgba(0,0,0,0.28)" />
<rect x="1291.80" y="0.00" width="1.60" height="126.00" fill="rgba(0,0,0,0.33)" />
<text x="1298.50" y="21.80" font-size="18.5" fill="#d5dcef" font-weight="normal" text-anchor="start" textLength="111.40" lengthAdjust="spacingAndGlyphs" stroke="#d5dcef" stroke-width="0.45" >SUB RUMBLE</text>
<rect x="1599.00" y="-1.00" width="307.00" height="127.00" fill="#3454a1" />
<rect x="1599.00" y="0.00" width="307.00" height="126.00" fill="url(#cbar)" />
<rect x="1600.50" y="30.00" width="305.50" height="96.00" fill="url(#wsub1)" />
<rect x="1601.00" y="0.00" width="305.00" height="126.00" fill="url(#tkb1)" />
<rect x="1599.00" y="-0.50" width="307.00" height="1.00" fill="rgba(0,0,0,0.3)" />
<rect x="1599.00" y="29.00" width="307.00" height="1.60" fill="rgba(0,0,0,0.28)" />
<rect x="1598.80" y="0.00" width="1.60" height="126.00" fill="rgba(0,0,0,0.33)" />
<text x="1605.50" y="21.80" font-size="18.5" fill="#d5dcef" font-weight="normal" text-anchor="start" textLength="111.40" lengthAdjust="spacingAndGlyphs" stroke="#d5dcef" stroke-width="0.45" >SUB RUMBLE</text>
</g>
<rect x="64.00" y="470.00" width="153.50" height="127.00" fill="#585858" />
<rect x="217.50" y="470.00" width="153.50" height="127.00" fill="#5e5e5e" />
<rect x="371.00" y="470.00" width="153.50" height="127.00" fill="#585858" />
<rect x="524.50" y="470.00" width="153.50" height="127.00" fill="#5e5e5e" />
<rect x="678.00" y="470.00" width="153.50" height="127.00" fill="#585858" />
<rect x="831.50" y="470.00" width="153.50" height="127.00" fill="#5e5e5e" />
<rect x="985.00" y="470.00" width="153.50" height="127.00" fill="#585858" />
<rect x="1138.50" y="470.00" width="153.50" height="127.00" fill="#5e5e5e" />
<rect x="1292.00" y="470.00" width="153.50" height="127.00" fill="#585858" />
<rect x="1445.50" y="470.00" width="153.50" height="127.00" fill="#5e5e5e" />
<rect x="1599.00" y="470.00" width="153.50" height="127.00" fill="#585858" />
<rect x="1752.50" y="470.00" width="153.50" height="127.00" fill="#5e5e5e" />
<rect x="1906.00" y="470.00" width="63.00" height="127.00" fill="#585858" />
<rect x="102.03" y="470.00" width="1.70" height="127.00" fill="#4e4e4e" />
<rect x="140.40" y="470.00" width="1.70" height="127.00" fill="#4e4e4e" />
<rect x="178.78" y="470.00" width="1.70" height="127.00" fill="#4e4e4e" />
<rect x="217.15" y="470.00" width="1.70" height="127.00" fill="#4e4e4e" />
<rect x="255.53" y="470.00" width="1.70" height="127.00" fill="#4e4e4e" />
<rect x="293.90" y="470.00" width="1.70" height="127.00" fill="#4e4e4e" />
<rect x="332.27" y="470.00" width="1.70" height="127.00" fill="#4e4e4e" />
<rect x="370.65" y="470.00" width="1.70" height="127.00" fill="#4e4e4e" />
<rect x="409.02" y="470.00" width="1.70" height="127.00" fill="#4e4e4e" />
<rect x="447.40" y="470.00" width="1.70" height="127.00" fill="#4e4e4e" />
<rect x="485.77" y="470.00" width="1.70" height="127.00" fill="#4e4e4e" />
<rect x="524.15" y="470.00" width="1.70" height="127.00" fill="#4e4e4e" />
<rect x="562.52" y="470.00" width="1.70" height="127.00" fill="#4e4e4e" />
<rect x="600.90" y="470.00" width="1.70" height="127.00" fill="#4e4e4e" />
<rect x="639.27" y="470.00" width="1.70" height="127.00" fill="#4e4e4e" />
<rect x="677.65" y="470.00" width="1.70" height="127.00" fill="#4e4e4e" />
<rect x="716.02" y="470.00" width="1.70" height="127.00" fill="#4e4e4e" />
<rect x="754.40" y="470.00" width="1.70" height="127.00" fill="#4e4e4e" />
<rect x="792.77" y="470.00" width="1.70" height="127.00" fill="#4e4e4e" />
<rect x="831.15" y="470.00" width="1.70" height="127.00" fill="#4e4e4e" />
<rect x="869.52" y="470.00" width="1.70" height="127.00" fill="#4e4e4e" />
<rect x="907.90" y="470.00" width="1.70" height="127.00" fill="#4e4e4e" />
<rect x="946.27" y="470.00" width="1.70" height="127.00" fill="#4e4e4e" />
<rect x="984.65" y="470.00" width="1.70" height="127.00" fill="#4e4e4e" />
<rect x="1023.02" y="470.00" width="1.70" height="127.00" fill="#4e4e4e" />
<rect x="1061.40" y="470.00" width="1.70" height="127.00" fill="#4e4e4e" />
<rect x="1099.78" y="470.00" width="1.70" height="127.00" fill="#4e4e4e" />
<rect x="1138.15" y="470.00" width="1.70" height="127.00" fill="#4e4e4e" />
<rect x="1176.53" y="470.00" width="1.70" height="127.00" fill="#4e4e4e" />
<rect x="1214.90" y="470.00" width="1.70" height="127.00" fill="#4e4e4e" />
<rect x="1253.28" y="470.00" width="1.70" height="127.00" fill="#4e4e4e" />
<rect x="1291.65" y="470.00" width="1.70" height="127.00" fill="#4e4e4e" />
<rect x="1330.03" y="470.00" width="1.70" height="127.00" fill="#4e4e4e" />
<rect x="1368.40" y="470.00" width="1.70" height="127.00" fill="#4e4e4e" />
<rect x="1406.78" y="470.00" width="1.70" height="127.00" fill="#4e4e4e" />
<rect x="1445.15" y="470.00" width="1.70" height="127.00" fill="#4e4e4e" />
<rect x="1483.53" y="470.00" width="1.70" height="127.00" fill="#4e4e4e" />
<rect x="1521.90" y="470.00" width="1.70" height="127.00" fill="#4e4e4e" />
<rect x="1560.28" y="470.00" width="1.70" height="127.00" fill="#4e4e4e" />
<rect x="1598.65" y="470.00" width="1.70" height="127.00" fill="#4e4e4e" />
<rect x="1637.03" y="470.00" width="1.70" height="127.00" fill="#4e4e4e" />
<rect x="1675.40" y="470.00" width="1.70" height="127.00" fill="#4e4e4e" />
<rect x="1713.78" y="470.00" width="1.70" height="127.00" fill="#4e4e4e" />
<rect x="1752.15" y="470.00" width="1.70" height="127.00" fill="#4e4e4e" />
<rect x="1790.53" y="470.00" width="1.70" height="127.00" fill="#4e4e4e" />
<rect x="1828.90" y="470.00" width="1.70" height="127.00" fill="#4e4e4e" />
<rect x="1867.28" y="470.00" width="1.70" height="127.00" fill="#4e4e4e" />
<rect x="1905.65" y="470.00" width="1.70" height="127.00" fill="#4e4e4e" />
<rect x="1944.03" y="470.00" width="1.70" height="127.00" fill="#4e4e4e" />
<g transform="translate(0,471)">
<rect x="985.00" y="-1.00" width="307.00" height="127.00" fill="#98c6fa" />
<rect x="985.00" y="0.00" width="307.00" height="126.00" fill="url(#cbar)" />
<rect x="986.50" y="30.00" width="305.50" height="96.00" fill="url(#wtom2)" />
<rect x="987.00" y="0.00" width="305.00" height="126.00" fill="url(#tkb2)" />
<rect x="985.00" y="-0.50" width="307.00" height="1.00" fill="rgba(0,0,0,0.3)" />
<rect x="985.00" y="29.00" width="307.00" height="1.60" fill="rgba(0,0,0,0.28)" />
<rect x="984.80" y="0.00" width="1.60" height="126.00" fill="rgba(0,0,0,0.33)" />
<text x="991.50" y="21.80" font-size="18.5" fill="#1d2733" font-weight="normal" text-anchor="start" textLength="92.00" lengthAdjust="spacingAndGlyphs" stroke="#1d2733" stroke-width="0.45" >TOM LOOP</text>
<rect x="1292.00" y="-1.00" width="307.00" height="127.00" fill="#98c6fa" />
<rect x="1292.00" y="0.00" width="307.00" height="126.00" fill="url(#cbar)" />
<rect x="1293.50" y="30.00" width="305.50" height="96.00" fill="url(#wtom2)" />
<rect x="1294.00" y="0.00" width="305.00" height="126.00" fill="url(#tkb2)" />
<rect x="1292.00" y="-0.50" width="307.00" height="1.00" fill="rgba(0,0,0,0.3)" />
<rect x="1292.00" y="29.00" width="307.00" height="1.60" fill="rgba(0,0,0,0.28)" />
<rect x="1291.80" y="0.00" width="1.60" height="126.00" fill="rgba(0,0,0,0.33)" />
<text x="1298.50" y="21.80" font-size="18.5" fill="#1d2733" font-weight="normal" text-anchor="start" textLength="92.00" lengthAdjust="spacingAndGlyphs" stroke="#1d2733" stroke-width="0.45" >TOM LOOP</text>
<rect x="1599.00" y="-1.00" width="307.00" height="127.00" fill="#98c6fa" />
<rect x="1599.00" y="0.00" width="307.00" height="126.00" fill="url(#cbar)" />
<rect x="1600.50" y="30.00" width="305.50" height="96.00" fill="url(#wtom2)" />
<rect x="1601.00" y="0.00" width="305.00" height="126.00" fill="url(#tkb2)" />
<rect x="1599.00" y="-0.50" width="307.00" height="1.00" fill="rgba(0,0,0,0.3)" />
<rect x="1599.00" y="29.00" width="307.00" height="1.60" fill="rgba(0,0,0,0.28)" />
<rect x="1598.80" y="0.00" width="1.60" height="126.00" fill="rgba(0,0,0,0.33)" />
<text x="1605.50" y="21.80" font-size="18.5" fill="#1d2733" font-weight="normal" text-anchor="start" textLength="92.00" lengthAdjust="spacingAndGlyphs" stroke="#1d2733" stroke-width="0.45" >TOM LOOP</text>
</g>
<rect x="64.00" y="600.00" width="153.50" height="127.00" fill="#585858" />
<rect x="217.50" y="600.00" width="153.50" height="127.00" fill="#5e5e5e" />
<rect x="371.00" y="600.00" width="153.50" height="127.00" fill="#585858" />
<rect x="524.50" y="600.00" width="153.50" height="127.00" fill="#5e5e5e" />
<rect x="678.00" y="600.00" width="153.50" height="127.00" fill="#585858" />
<rect x="831.50" y="600.00" width="153.50" height="127.00" fill="#5e5e5e" />
<rect x="985.00" y="600.00" width="153.50" height="127.00" fill="#585858" />
<rect x="1138.50" y="600.00" width="153.50" height="127.00" fill="#5e5e5e" />
<rect x="1292.00" y="600.00" width="153.50" height="127.00" fill="#585858" />
<rect x="1445.50" y="600.00" width="153.50" height="127.00" fill="#5e5e5e" />
<rect x="1599.00" y="600.00" width="153.50" height="127.00" fill="#585858" />
<rect x="1752.50" y="600.00" width="153.50" height="127.00" fill="#5e5e5e" />
<rect x="1906.00" y="600.00" width="63.00" height="127.00" fill="#585858" />
<rect x="102.03" y="600.00" width="1.70" height="127.00" fill="#4e4e4e" />
<rect x="140.40" y="600.00" width="1.70" height="127.00" fill="#4e4e4e" />
<rect x="178.78" y="600.00" width="1.70" height="127.00" fill="#4e4e4e" />
<rect x="217.15" y="600.00" width="1.70" height="127.00" fill="#4e4e4e" />
<rect x="255.53" y="600.00" width="1.70" height="127.00" fill="#4e4e4e" />
<rect x="293.90" y="600.00" width="1.70" height="127.00" fill="#4e4e4e" />
<rect x="332.27" y="600.00" width="1.70" height="127.00" fill="#4e4e4e" />
<rect x="370.65" y="600.00" width="1.70" height="127.00" fill="#4e4e4e" />
<rect x="409.02" y="600.00" width="1.70" height="127.00" fill="#4e4e4e" />
<rect x="447.40" y="600.00" width="1.70" height="127.00" fill="#4e4e4e" />
<rect x="485.77" y="600.00" width="1.70" height="127.00" fill="#4e4e4e" />
<rect x="524.15" y="600.00" width="1.70" height="127.00" fill="#4e4e4e" />
<rect x="562.52" y="600.00" width="1.70" height="127.00" fill="#4e4e4e" />
<rect x="600.90" y="600.00" width="1.70" height="127.00" fill="#4e4e4e" />
<rect x="639.27" y="600.00" width="1.70" height="127.00" fill="#4e4e4e" />
<rect x="677.65" y="600.00" width="1.70" height="127.00" fill="#4e4e4e" />
<rect x="716.02" y="600.00" width="1.70" height="127.00" fill="#4e4e4e" />
<rect x="754.40" y="600.00" width="1.70" height="127.00" fill="#4e4e4e" />
<rect x="792.77" y="600.00" width="1.70" height="127.00" fill="#4e4e4e" />
<rect x="831.15" y="600.00" width="1.70" height="127.00" fill="#4e4e4e" />
<rect x="869.52" y="600.00" width="1.70" height="127.00" fill="#4e4e4e" />
<rect x="907.90" y="600.00" width="1.70" height="127.00" fill="#4e4e4e" />
<rect x="946.27" y="600.00" width="1.70" height="127.00" fill="#4e4e4e" />
<rect x="984.65" y="600.00" width="1.70" height="127.00" fill="#4e4e4e" />
<rect x="1023.02" y="600.00" width="1.70" height="127.00" fill="#4e4e4e" />
<rect x="1061.40" y="600.00" width="1.70" height="127.00" fill="#4e4e4e" />
<rect x="1099.78" y="600.00" width="1.70" height="127.00" fill="#4e4e4e" />
<rect x="1138.15" y="600.00" width="1.70" height="127.00" fill="#4e4e4e" />
<rect x="1176.53" y="600.00" width="1.70" height="127.00" fill="#4e4e4e" />
<rect x="1214.90" y="600.00" width="1.70" height="127.00" fill="#4e4e4e" />
<rect x="1253.28" y="600.00" width="1.70" height="127.00" fill="#4e4e4e" />
<rect x="1291.65" y="600.00" width="1.70" height="127.00" fill="#4e4e4e" />
<rect x="1330.03" y="600.00" width="1.70" height="127.00" fill="#4e4e4e" />
<rect x="1368.40" y="600.00" width="1.70" height="127.00" fill="#4e4e4e" />
<rect x="1406.78" y="600.00" width="1.70" height="127.00" fill="#4e4e4e" />
<rect x="1445.15" y="600.00" width="1.70" height="127.00" fill="#4e4e4e" />
<rect x="1483.53" y="600.00" width="1.70" height="127.00" fill="#4e4e4e" />
<rect x="1521.90" y="600.00" width="1.70" height="127.00" fill="#4e4e4e" />
<rect x="1560.28" y="600.00" width="1.70" height="127.00" fill="#4e4e4e" />
<rect x="1598.65" y="600.00" width="1.70" height="127.00" fill="#4e4e4e" />
<rect x="1637.03" y="600.00" width="1.70" height="127.00" fill="#4e4e4e" />
<rect x="1675.40" y="600.00" width="1.70" height="127.00" fill="#4e4e4e" />
<rect x="1713.78" y="600.00" width="1.70" height="127.00" fill="#4e4e4e" />
<rect x="1752.15" y="600.00" width="1.70" height="127.00" fill="#4e4e4e" />
<rect x="1790.53" y="600.00" width="1.70" height="127.00" fill="#4e4e4e" />
<rect x="1828.90" y="600.00" width="1.70" height="127.00" fill="#4e4e4e" />
<rect x="1867.28" y="600.00" width="1.70" height="127.00" fill="#4e4e4e" />
<rect x="1905.65" y="600.00" width="1.70" height="127.00" fill="#4e4e4e" />
<rect x="1944.03" y="600.00" width="1.70" height="127.00" fill="#4e4e4e" />
<g transform="translate(0,601)">
<rect x="371.00" y="-1.00" width="307.00" height="127.00" fill="#f2a97e" />
<rect x="371.00" y="0.00" width="307.00" height="126.00" fill="url(#cbar)" />
<rect x="372.50" y="30.00" width="305.50" height="96.00" fill="url(#whl3)" />
<rect x="373.00" y="0.00" width="305.00" height="126.00" fill="url(#tkb3)" />
<rect x="371.00" y="-0.50" width="307.00" height="1.00" fill="rgba(0,0,0,0.3)" />
<rect x="371.00" y="29.00" width="307.00" height="1.60" fill="rgba(0,0,0,0.28)" />
<rect x="370.80" y="0.00" width="1.60" height="126.00" fill="rgba(0,0,0,0.33)" />
<text x="377.50" y="21.80" font-size="18.5" fill="#2c1f18" font-weight="normal" text-anchor="start" textLength="85.50" lengthAdjust="spacingAndGlyphs" stroke="#2c1f18" stroke-width="0.45" >HAT LOOP</text>
<rect x="678.00" y="-1.00" width="307.00" height="127.00" fill="#f2a97e" />
<rect x="678.00" y="0.00" width="307.00" height="126.00" fill="url(#cbar)" />
<rect x="679.50" y="30.00" width="305.50" height="96.00" fill="url(#whl3)" />
<rect x="680.00" y="0.00" width="305.00" height="126.00" fill="url(#tkb3)" />
<rect x="678.00" y="-0.50" width="307.00" height="1.00" fill="rgba(0,0,0,0.3)" />
<rect x="678.00" y="29.00" width="307.00" height="1.60" fill="rgba(0,0,0,0.28)" />
<rect x="677.80" y="0.00" width="1.60" height="126.00" fill="rgba(0,0,0,0.33)" />
<text x="684.50" y="21.80" font-size="18.5" fill="#2c1f18" font-weight="normal" text-anchor="start" textLength="85.50" lengthAdjust="spacingAndGlyphs" stroke="#2c1f18" stroke-width="0.45" >HAT LOOP</text>
<rect x="985.00" y="-1.00" width="307.00" height="127.00" fill="#f2a97e" />
<rect x="985.00" y="0.00" width="307.00" height="126.00" fill="url(#cbar)" />
<rect x="986.50" y="30.00" width="305.50" height="96.00" fill="url(#whl3)" />
<rect x="987.00" y="0.00" width="305.00" height="126.00" fill="url(#tkb3)" />
<rect x="985.00" y="-0.50" width="307.00" height="1.00" fill="rgba(0,0,0,0.3)" />
<rect x="985.00" y="29.00" width="307.00" height="1.60" fill="rgba(0,0,0,0.28)" />
<rect x="984.80" y="0.00" width="1.60" height="126.00" fill="rgba(0,0,0,0.33)" />
<text x="991.50" y="21.80" font-size="18.5" fill="#2c1f18" font-weight="normal" text-anchor="start" textLength="85.50" lengthAdjust="spacingAndGlyphs" stroke="#2c1f18" stroke-width="0.45" >HAT LOOP</text>
<rect x="1292.00" y="-1.00" width="307.00" height="127.00" fill="#f2a97e" />
<rect x="1292.00" y="0.00" width="307.00" height="126.00" fill="url(#cbar)" />
<rect x="1293.50" y="30.00" width="305.50" height="96.00" fill="url(#whl3)" />
<rect x="1294.00" y="0.00" width="305.00" height="126.00" fill="url(#tkb3)" />
<rect x="1292.00" y="-0.50" width="307.00" height="1.00" fill="rgba(0,0,0,0.3)" />
<rect x="1292.00" y="29.00" width="307.00" height="1.60" fill="rgba(0,0,0,0.28)" />
<rect x="1291.80" y="0.00" width="1.60" height="126.00" fill="rgba(0,0,0,0.33)" />
<text x="1298.50" y="21.80" font-size="18.5" fill="#2c1f18" font-weight="normal" text-anchor="start" textLength="85.50" lengthAdjust="spacingAndGlyphs" stroke="#2c1f18" stroke-width="0.45" >HAT LOOP</text>
<rect x="1599.00" y="-1.00" width="307.00" height="127.00" fill="#f2a97e" />
<rect x="1599.00" y="0.00" width="307.00" height="126.00" fill="url(#cbar)" />
<rect x="1600.50" y="30.00" width="305.50" height="96.00" fill="url(#whl3)" />
<rect x="1601.00" y="0.00" width="305.00" height="126.00" fill="url(#tkb3)" />
<rect x="1599.00" y="-0.50" width="307.00" height="1.00" fill="rgba(0,0,0,0.3)" />
<rect x="1599.00" y="29.00" width="307.00" height="1.60" fill="rgba(0,0,0,0.28)" />
<rect x="1598.80" y="0.00" width="1.60" height="126.00" fill="rgba(0,0,0,0.33)" />
<text x="1605.50" y="21.80" font-size="18.5" fill="#2c1f18" font-weight="normal" text-anchor="start" textLength="85.50" lengthAdjust="spacingAndGlyphs" stroke="#2c1f18" stroke-width="0.45" >HAT LOOP</text>
</g>
<rect x="64.00" y="730.00" width="153.50" height="127.00" fill="#585858" />
<rect x="217.50" y="730.00" width="153.50" height="127.00" fill="#5e5e5e" />
<rect x="371.00" y="730.00" width="153.50" height="127.00" fill="#585858" />
<rect x="524.50" y="730.00" width="153.50" height="127.00" fill="#5e5e5e" />
<rect x="678.00" y="730.00" width="153.50" height="127.00" fill="#585858" />
<rect x="831.50" y="730.00" width="153.50" height="127.00" fill="#5e5e5e" />
<rect x="985.00" y="730.00" width="153.50" height="127.00" fill="#585858" />
<rect x="1138.50" y="730.00" width="153.50" height="127.00" fill="#5e5e5e" />
<rect x="1292.00" y="730.00" width="153.50" height="127.00" fill="#585858" />
<rect x="1445.50" y="730.00" width="153.50" height="127.00" fill="#5e5e5e" />
<rect x="1599.00" y="730.00" width="153.50" height="127.00" fill="#585858" />
<rect x="1752.50" y="730.00" width="153.50" height="127.00" fill="#5e5e5e" />
<rect x="1906.00" y="730.00" width="63.00" height="127.00" fill="#585858" />
<rect x="102.03" y="730.00" width="1.70" height="127.00" fill="#4e4e4e" />
<rect x="140.40" y="730.00" width="1.70" height="127.00" fill="#4e4e4e" />
<rect x="178.78" y="730.00" width="1.70" height="127.00" fill="#4e4e4e" />
<rect x="217.15" y="730.00" width="1.70" height="127.00" fill="#4e4e4e" />
<rect x="255.53" y="730.00" width="1.70" height="127.00" fill="#4e4e4e" />
<rect x="293.90" y="730.00" width="1.70" height="127.00" fill="#4e4e4e" />
<rect x="332.27" y="730.00" width="1.70" height="127.00" fill="#4e4e4e" />
<rect x="370.65" y="730.00" width="1.70" height="127.00" fill="#4e4e4e" />
<rect x="409.02" y="730.00" width="1.70" height="127.00" fill="#4e4e4e" />
<rect x="447.40" y="730.00" width="1.70" height="127.00" fill="#4e4e4e" />
<rect x="485.77" y="730.00" width="1.70" height="127.00" fill="#4e4e4e" />
<rect x="524.15" y="730.00" width="1.70" height="127.00" fill="#4e4e4e" />
<rect x="562.52" y="730.00" width="1.70" height="127.00" fill="#4e4e4e" />
<rect x="600.90" y="730.00" width="1.70" height="127.00" fill="#4e4e4e" />
<rect x="639.27" y="730.00" width="1.70" height="127.00" fill="#4e4e4e" />
<rect x="677.65" y="730.00" width="1.70" height="127.00" fill="#4e4e4e" />
<rect x="716.02" y="730.00" width="1.70" height="127.00" fill="#4e4e4e" />
<rect x="754.40" y="730.00" width="1.70" height="127.00" fill="#4e4e4e" />
<rect x="792.77" y="730.00" width="1.70" height="127.00" fill="#4e4e4e" />
<rect x="831.15" y="730.00" width="1.70" height="127.00" fill="#4e4e4e" />
<rect x="869.52" y="730.00" width="1.70" height="127.00" fill="#4e4e4e" />
<rect x="907.90" y="730.00" width="1.70" height="127.00" fill="#4e4e4e" />
<rect x="946.27" y="730.00" width="1.70" height="127.00" fill="#4e4e4e" />
<rect x="984.65" y="730.00" width="1.70" height="127.00" fill="#4e4e4e" />
<rect x="1023.02" y="730.00" width="1.70" height="127.00" fill="#4e4e4e" />
<rect x="1061.40" y="730.00" width="1.70" height="127.00" fill="#4e4e4e" />
<rect x="1099.78" y="730.00" width="1.70" height="127.00" fill="#4e4e4e" />
<rect x="1138.15" y="730.00" width="1.70" height="127.00" fill="#4e4e4e" />
<rect x="1176.53" y="730.00" width="1.70" height="127.00" fill="#4e4e4e" />
<rect x="1214.90" y="730.00" width="1.70" height="127.00" fill="#4e4e4e" />
<rect x="1253.28" y="730.00" width="1.70" height="127.00" fill="#4e4e4e" />
<rect x="1291.65" y="730.00" width="1.70" height="127.00" fill="#4e4e4e" />
<rect x="1330.03" y="730.00" width="1.70" height="127.00" fill="#4e4e4e" />
<rect x="1368.40" y="730.00" width="1.70" height="127.00" fill="#4e4e4e" />
<rect x="1406.78" y="730.00" width="1.70" height="127.00" fill="#4e4e4e" />
<rect x="1445.15" y="730.00" width="1.70" height="127.00" fill="#4e4e4e" />
<rect x="1483.53" y="730.00" width="1.70" height="127.00" fill="#4e4e4e" />
<rect x="1521.90" y="730.00" width="1.70" height="127.00" fill="#4e4e4e" />
<rect x="1560.28" y="730.00" width="1.70" height="127.00" fill="#4e4e4e" />
<rect x="1598.65" y="730.00" width="1.70" height="127.00" fill="#4e4e4e" />
<rect x="1637.03" y="730.00" width="1.70" height="127.00" fill="#4e4e4e" />
<rect x="1675.40" y="730.00" width="1.70" height="127.00" fill="#4e4e4e" />
<rect x="1713.78" y="730.00" width="1.70" height="127.00" fill="#4e4e4e" />
<rect x="1752.15" y="730.00" width="1.70" height="127.00" fill="#4e4e4e" />
<rect x="1790.53" y="730.00" width="1.70" height="127.00" fill="#4e4e4e" />
<rect x="1828.90" y="730.00" width="1.70" height="127.00" fill="#4e4e4e" />
<rect x="1867.28" y="730.00" width="1.70" height="127.00" fill="#4e4e4e" />
<rect x="1905.65" y="730.00" width="1.70" height="127.00" fill="#4e4e4e" />
<rect x="1944.03" y="730.00" width="1.70" height="127.00" fill="#4e4e4e" />
<g transform="translate(0,731)">
<rect x="1292.00" y="-1.00" width="307.00" height="127.00" fill="#f2a97e" />
<rect x="1292.00" y="0.00" width="307.00" height="126.00" fill="url(#cbar)" />
<rect x="1293.50" y="30.00" width="305.50" height="96.00" fill="url(#wclap4)" />
<rect x="1294.00" y="0.00" width="305.00" height="126.00" fill="url(#tkbar4)" />
<rect x="1292.00" y="-0.50" width="307.00" height="1.00" fill="rgba(0,0,0,0.3)" />
<rect x="1292.00" y="29.00" width="307.00" height="1.60" fill="rgba(0,0,0,0.28)" />
<rect x="1291.80" y="0.00" width="1.60" height="126.00" fill="rgba(0,0,0,0.33)" />
<text x="1298.50" y="21.80" font-size="18.5" fill="#2c1f18" font-weight="normal" text-anchor="start" textLength="96.40" lengthAdjust="spacingAndGlyphs" stroke="#2c1f18" stroke-width="0.45" >CLAP LOOP</text>
<rect x="1599.00" y="-1.00" width="307.00" height="127.00" fill="#f2a97e" />
<rect x="1599.00" y="0.00" width="307.00" height="126.00" fill="url(#cbar)" />
<rect x="1600.50" y="30.00" width="305.50" height="96.00" fill="url(#wclap4)" />
<rect x="1601.00" y="0.00" width="305.00" height="126.00" fill="url(#tkbar4)" />
<rect x="1599.00" y="-0.50" width="307.00" height="1.00" fill="rgba(0,0,0,0.3)" />
<rect x="1599.00" y="29.00" width="307.00" height="1.60" fill="rgba(0,0,0,0.28)" />
<rect x="1598.80" y="0.00" width="1.60" height="126.00" fill="rgba(0,0,0,0.33)" />
<text x="1605.50" y="21.80" font-size="18.5" fill="#2c1f18" font-weight="normal" text-anchor="start" textLength="96.40" lengthAdjust="spacingAndGlyphs" stroke="#2c1f18" stroke-width="0.45" >CLAP LOOP</text>
</g>
<rect x="64.00" y="860.00" width="153.50" height="127.00" fill="#585858" />
<rect x="217.50" y="860.00" width="153.50" height="127.00" fill="#5e5e5e" />
<rect x="371.00" y="860.00" width="153.50" height="127.00" fill="#585858" />
<rect x="524.50" y="860.00" width="153.50" height="127.00" fill="#5e5e5e" />
<rect x="678.00" y="860.00" width="153.50" height="127.00" fill="#585858" />
<rect x="831.50" y="860.00" width="153.50" height="127.00" fill="#5e5e5e" />
<rect x="985.00" y="860.00" width="153.50" height="127.00" fill="#585858" />
<rect x="1138.50" y="860.00" width="153.50" height="127.00" fill="#5e5e5e" />
<rect x="1292.00" y="860.00" width="153.50" height="127.00" fill="#585858" />
<rect x="1445.50" y="860.00" width="153.50" height="127.00" fill="#5e5e5e" />
<rect x="1599.00" y="860.00" width="153.50" height="127.00" fill="#585858" />
<rect x="1752.50" y="860.00" width="153.50" height="127.00" fill="#5e5e5e" />
<rect x="1906.00" y="860.00" width="63.00" height="127.00" fill="#585858" />
<rect x="102.03" y="860.00" width="1.70" height="127.00" fill="#4e4e4e" />
<rect x="140.40" y="860.00" width="1.70" height="127.00" fill="#4e4e4e" />
<rect x="178.78" y="860.00" width="1.70" height="127.00" fill="#4e4e4e" />
<rect x="217.15" y="860.00" width="1.70" height="127.00" fill="#4e4e4e" />
<rect x="255.53" y="860.00" width="1.70" height="127.00" fill="#4e4e4e" />
<rect x="293.90" y="860.00" width="1.70" height="127.00" fill="#4e4e4e" />
<rect x="332.27" y="860.00" width="1.70" height="127.00" fill="#4e4e4e" />
<rect x="370.65" y="860.00" width="1.70" height="127.00" fill="#4e4e4e" />
<rect x="409.02" y="860.00" width="1.70" height="127.00" fill="#4e4e4e" />
<rect x="447.40" y="860.00" width="1.70" height="127.00" fill="#4e4e4e" />
<rect x="485.77" y="860.00" width="1.70" height="127.00" fill="#4e4e4e" />
<rect x="524.15" y="860.00" width="1.70" height="127.00" fill="#4e4e4e" />
<rect x="562.52" y="860.00" width="1.70" height="127.00" fill="#4e4e4e" />
<rect x="600.90" y="860.00" width="1.70" height="127.00" fill="#4e4e4e" />
<rect x="639.27" y="860.00" width="1.70" height="127.00" fill="#4e4e4e" />
<rect x="677.65" y="860.00" width="1.70" height="127.00" fill="#4e4e4e" />
<rect x="716.02" y="860.00" width="1.70" height="127.00" fill="#4e4e4e" />
<rect x="754.40" y="860.00" width="1.70" height="127.00" fill="#4e4e4e" />
<rect x="792.77" y="860.00" width="1.70" height="127.00" fill="#4e4e4e" />
<rect x="831.15" y="860.00" width="1.70" height="127.00" fill="#4e4e4e" />
<rect x="869.52" y="860.00" width="1.70" height="127.00" fill="#4e4e4e" />
<rect x="907.90" y="860.00" width="1.70" height="127.00" fill="#4e4e4e" />
<rect x="946.27" y="860.00" width="1.70" height="127.00" fill="#4e4e4e" />
<rect x="984.65" y="860.00" width="1.70" height="127.00" fill="#4e4e4e" />
<rect x="1023.02" y="860.00" width="1.70" height="127.00" fill="#4e4e4e" />
<rect x="1061.40" y="860.00" width="1.70" height="127.00" fill="#4e4e4e" />
<rect x="1099.78" y="860.00" width="1.70" height="127.00" fill="#4e4e4e" />
<rect x="1138.15" y="860.00" width="1.70" height="127.00" fill="#4e4e4e" />
<rect x="1176.53" y="860.00" width="1.70" height="127.00" fill="#4e4e4e" />
<rect x="1214.90" y="860.00" width="1.70" height="127.00" fill="#4e4e4e" />
<rect x="1253.28" y="860.00" width="1.70" height="127.00" fill="#4e4e4e" />
<rect x="1291.65" y="860.00" width="1.70" height="127.00" fill="#4e4e4e" />
<rect x="1330.03" y="860.00" width="1.70" height="127.00" fill="#4e4e4e" />
<rect x="1368.40" y="860.00" width="1.70" height="127.00" fill="#4e4e4e" />
<rect x="1406.78" y="860.00" width="1.70" height="127.00" fill="#4e4e4e" />
<rect x="1445.15" y="860.00" width="1.70" height="127.00" fill="#4e4e4e" />
<rect x="1483.53" y="860.00" width="1.70" height="127.00" fill="#4e4e4e" />
<rect x="1521.90" y="860.00" width="1.70" height="127.00" fill="#4e4e4e" />
<rect x="1560.28" y="860.00" width="1.70" height="127.00" fill="#4e4e4e" />
<rect x="1598.65" y="860.00" width="1.70" height="127.00" fill="#4e4e4e" />
<rect x="1637.03" y="860.00" width="1.70" height="127.00" fill="#4e4e4e" />
<rect x="1675.40" y="860.00" width="1.70" height="127.00" fill="#4e4e4e" />
<rect x="1713.78" y="860.00" width="1.70" height="127.00" fill="#4e4e4e" />
<rect x="1752.15" y="860.00" width="1.70" height="127.00" fill="#4e4e4e" />
<rect x="1790.53" y="860.00" width="1.70" height="127.00" fill="#4e4e4e" />
<rect x="1828.90" y="860.00" width="1.70" height="127.00" fill="#4e4e4e" />
<rect x="1867.28" y="860.00" width="1.70" height="127.00" fill="#4e4e4e" />
<rect x="1905.65" y="860.00" width="1.70" height="127.00" fill="#4e4e4e" />
<rect x="1944.03" y="860.00" width="1.70" height="127.00" fill="#4e4e4e" />
<g transform="translate(0,861)">
<rect x="678.00" y="-1.00" width="307.00" height="127.00" fill="#f2a97e" />
<rect x="678.00" y="0.00" width="307.00" height="126.00" fill="url(#cbar)" />
<rect x="679.50" y="30.00" width="305.50" height="96.00" fill="url(#wwn5)" />
<rect x="680.00" y="0.00" width="305.00" height="126.00" fill="url(#tkbar5)" />
<rect x="678.00" y="-0.50" width="307.00" height="1.00" fill="rgba(0,0,0,0.3)" />
<rect x="678.00" y="29.00" width="307.00" height="1.60" fill="rgba(0,0,0,0.28)" />
<rect x="677.80" y="0.00" width="1.60" height="126.00" fill="rgba(0,0,0,0.33)" />
<text x="684.50" y="21.80" font-size="18.5" fill="#2c1f18" font-weight="normal" text-anchor="start" textLength="116.00" lengthAdjust="spacingAndGlyphs" stroke="#2c1f18" stroke-width="0.45" >WHITE NOISE</text>
<rect x="985.00" y="-1.00" width="307.00" height="127.00" fill="#f2a97e" />
<rect x="985.00" y="0.00" width="307.00" height="126.00" fill="url(#cbar)" />
<rect x="986.50" y="30.00" width="305.50" height="96.00" fill="url(#wwn5)" />
<rect x="987.00" y="0.00" width="305.00" height="126.00" fill="url(#tkbar5)" />
<rect x="985.00" y="-0.50" width="307.00" height="1.00" fill="rgba(0,0,0,0.3)" />
<rect x="985.00" y="29.00" width="307.00" height="1.60" fill="rgba(0,0,0,0.28)" />
<rect x="984.80" y="0.00" width="1.60" height="126.00" fill="rgba(0,0,0,0.33)" />
<text x="991.50" y="21.80" font-size="18.5" fill="#2c1f18" font-weight="normal" text-anchor="start" textLength="116.00" lengthAdjust="spacingAndGlyphs" stroke="#2c1f18" stroke-width="0.45" >WHITE NOISE</text>
<rect x="1292.00" y="-1.00" width="307.00" height="127.00" fill="#f2a97e" />
<rect x="1292.00" y="0.00" width="307.00" height="126.00" fill="url(#cbar)" />
<rect x="1293.50" y="30.00" width="305.50" height="96.00" fill="url(#wwn5)" />
<rect x="1294.00" y="0.00" width="305.00" height="126.00" fill="url(#tkbar5)" />
<rect x="1292.00" y="-0.50" width="307.00" height="1.00" fill="rgba(0,0,0,0.3)" />
<rect x="1292.00" y="29.00" width="307.00" height="1.60" fill="rgba(0,0,0,0.28)" />
<rect x="1291.80" y="0.00" width="1.60" height="126.00" fill="rgba(0,0,0,0.33)" />
<text x="1298.50" y="21.80" font-size="18.5" fill="#2c1f18" font-weight="normal" text-anchor="start" textLength="116.00" lengthAdjust="spacingAndGlyphs" stroke="#2c1f18" stroke-width="0.45" >WHITE NOISE</text>
<rect x="1599.00" y="-1.00" width="307.00" height="127.00" fill="#f2a97e" />
<rect x="1599.00" y="0.00" width="307.00" height="126.00" fill="url(#cbar)" />
<rect x="1600.50" y="30.00" width="305.50" height="96.00" fill="url(#wwn5)" />
<rect x="1601.00" y="0.00" width="305.00" height="126.00" fill="url(#tkbar5)" />
<rect x="1599.00" y="-0.50" width="307.00" height="1.00" fill="rgba(0,0,0,0.3)" />
<rect x="1599.00" y="29.00" width="307.00" height="1.60" fill="rgba(0,0,0,0.28)" />
<rect x="1598.80" y="0.00" width="1.60" height="126.00" fill="rgba(0,0,0,0.33)" />
<text x="1605.50" y="21.80" font-size="18.5" fill="#2c1f18" font-weight="normal" text-anchor="start" textLength="116.00" lengthAdjust="spacingAndGlyphs" stroke="#2c1f18" stroke-width="0.45" >WHITE NOISE</text>
</g>
<rect x="64.00" y="990.00" width="153.50" height="127.00" fill="#707070" />
<rect x="217.50" y="990.00" width="153.50" height="127.00" fill="#777777" />
<rect x="371.00" y="990.00" width="153.50" height="127.00" fill="#707070" />
<rect x="524.50" y="990.00" width="153.50" height="127.00" fill="#777777" />
<rect x="678.00" y="990.00" width="153.50" height="127.00" fill="#707070" />
<rect x="831.50" y="990.00" width="153.50" height="127.00" fill="#777777" />
<rect x="985.00" y="990.00" width="153.50" height="127.00" fill="#707070" />
<rect x="1138.50" y="990.00" width="153.50" height="127.00" fill="#777777" />
<rect x="1292.00" y="990.00" width="153.50" height="127.00" fill="#707070" />
<rect x="1445.50" y="990.00" width="153.50" height="127.00" fill="#777777" />
<rect x="1599.00" y="990.00" width="153.50" height="127.00" fill="#707070" />
<rect x="1752.50" y="990.00" width="153.50" height="127.00" fill="#777777" />
<rect x="1906.00" y="990.00" width="63.00" height="127.00" fill="#707070" />
<rect x="102.03" y="990.00" width="1.70" height="127.00" fill="#666666" />
<rect x="140.40" y="990.00" width="1.70" height="127.00" fill="#666666" />
<rect x="178.78" y="990.00" width="1.70" height="127.00" fill="#666666" />
<rect x="217.15" y="990.00" width="1.70" height="127.00" fill="#666666" />
<rect x="255.53" y="990.00" width="1.70" height="127.00" fill="#666666" />
<rect x="293.90" y="990.00" width="1.70" height="127.00" fill="#666666" />
<rect x="332.27" y="990.00" width="1.70" height="127.00" fill="#666666" />
<rect x="370.65" y="990.00" width="1.70" height="127.00" fill="#666666" />
<rect x="409.02" y="990.00" width="1.70" height="127.00" fill="#666666" />
<rect x="447.40" y="990.00" width="1.70" height="127.00" fill="#666666" />
<rect x="485.77" y="990.00" width="1.70" height="127.00" fill="#666666" />
<rect x="524.15" y="990.00" width="1.70" height="127.00" fill="#666666" />
<rect x="562.52" y="990.00" width="1.70" height="127.00" fill="#666666" />
<rect x="600.90" y="990.00" width="1.70" height="127.00" fill="#666666" />
<rect x="639.27" y="990.00" width="1.70" height="127.00" fill="#666666" />
<rect x="677.65" y="990.00" width="1.70" height="127.00" fill="#666666" />
<rect x="716.02" y="990.00" width="1.70" height="127.00" fill="#666666" />
<rect x="754.40" y="990.00" width="1.70" height="127.00" fill="#666666" />
<rect x="792.77" y="990.00" width="1.70" height="127.00" fill="#666666" />
<rect x="831.15" y="990.00" width="1.70" height="127.00" fill="#666666" />
<rect x="869.52" y="990.00" width="1.70" height="127.00" fill="#666666" />
<rect x="907.90" y="990.00" width="1.70" height="127.00" fill="#666666" />
<rect x="946.27" y="990.00" width="1.70" height="127.00" fill="#666666" />
<rect x="984.65" y="990.00" width="1.70" height="127.00" fill="#666666" />
<rect x="1023.02" y="990.00" width="1.70" height="127.00" fill="#666666" />
<rect x="1061.40" y="990.00" width="1.70" height="127.00" fill="#666666" />
<rect x="1099.78" y="990.00" width="1.70" height="127.00" fill="#666666" />
<rect x="1138.15" y="990.00" width="1.70" height="127.00" fill="#666666" />
<rect x="1176.53" y="990.00" width="1.70" height="127.00" fill="#666666" />
<rect x="1214.90" y="990.00" width="1.70" height="127.00" fill="#666666" />
<rect x="1253.28" y="990.00" width="1.70" height="127.00" fill="#666666" />
<rect x="1291.65" y="990.00" width="1.70" height="127.00" fill="#666666" />
<rect x="1330.03" y="990.00" width="1.70" height="127.00" fill="#666666" />
<rect x="1368.40" y="990.00" width="1.70" height="127.00" fill="#666666" />
<rect x="1406.78" y="990.00" width="1.70" height="127.00" fill="#666666" />
<rect x="1445.15" y="990.00" width="1.70" height="127.00" fill="#666666" />
<rect x="1483.53" y="990.00" width="1.70" height="127.00" fill="#666666" />
<rect x="1521.90" y="990.00" width="1.70" height="127.00" fill="#666666" />
<rect x="1560.28" y="990.00" width="1.70" height="127.00" fill="#666666" />
<rect x="1598.65" y="990.00" width="1.70" height="127.00" fill="#666666" />
<rect x="1637.03" y="990.00" width="1.70" height="127.00" fill="#666666" />
<rect x="1675.40" y="990.00" width="1.70" height="127.00" fill="#666666" />
<rect x="1713.78" y="990.00" width="1.70" height="127.00" fill="#666666" />
<rect x="1752.15" y="990.00" width="1.70" height="127.00" fill="#666666" />
<rect x="1790.53" y="990.00" width="1.70" height="127.00" fill="#666666" />
<rect x="1828.90" y="990.00" width="1.70" height="127.00" fill="#666666" />
<rect x="1867.28" y="990.00" width="1.70" height="127.00" fill="#666666" />
<rect x="1905.65" y="990.00" width="1.70" height="127.00" fill="#666666" />
<rect x="1944.03" y="990.00" width="1.70" height="127.00" fill="#666666" />
<g transform="translate(0,991)">
<rect x="985.00" y="-1.00" width="307.00" height="127.00" fill="#f2aa48" />
<rect x="985.00" y="0.00" width="307.00" height="126.00" fill="url(#cbar)" />
<rect x="986.50" y="30.00" width="305.50" height="96.00" fill="url(#what6)" />
<rect x="987.00" y="0.00" width="305.00" height="126.00" fill="url(#tkbh6)" />
<rect x="985.00" y="-0.50" width="307.00" height="1.00" fill="rgba(0,0,0,0.3)" />
<rect x="985.00" y="29.00" width="307.00" height="1.60" fill="rgba(0,0,0,0.28)" />
<rect x="984.80" y="0.00" width="1.60" height="126.00" fill="rgba(0,0,0,0.33)" />
<text x="991.50" y="21.80" font-size="18.5" fill="#2a2010" font-weight="normal" text-anchor="start" textLength="33.40" lengthAdjust="spacingAndGlyphs" stroke="#2a2010" stroke-width="0.45" >HAT</text>
<rect x="1292.00" y="-1.00" width="307.00" height="127.00" fill="#f2aa48" />
<rect x="1292.00" y="0.00" width="307.00" height="126.00" fill="url(#cbar)" />
<rect x="1293.50" y="30.00" width="305.50" height="96.00" fill="url(#what6)" />
<rect x="1294.00" y="0.00" width="305.00" height="126.00" fill="url(#tkbh6)" />
<rect x="1292.00" y="-0.50" width="307.00" height="1.00" fill="rgba(0,0,0,0.3)" />
<rect x="1292.00" y="29.00" width="307.00" height="1.60" fill="rgba(0,0,0,0.28)" />
<rect x="1291.80" y="0.00" width="1.60" height="126.00" fill="rgba(0,0,0,0.33)" />
<text x="1298.50" y="21.80" font-size="18.5" fill="#2a2010" font-weight="normal" text-anchor="start" textLength="33.40" lengthAdjust="spacingAndGlyphs" stroke="#2a2010" stroke-width="0.45" >HAT</text>
<rect x="1599.00" y="-1.00" width="307.00" height="127.00" fill="#f2aa48" />
<rect x="1599.00" y="0.00" width="307.00" height="126.00" fill="url(#cbar)" />
<rect x="1600.50" y="30.00" width="305.50" height="96.00" fill="url(#what6)" />
<rect x="1601.00" y="0.00" width="305.00" height="126.00" fill="url(#tkbh6)" />
<rect x="1599.00" y="-0.50" width="307.00" height="1.00" fill="rgba(0,0,0,0.3)" />
<rect x="1599.00" y="29.00" width="307.00" height="1.60" fill="rgba(0,0,0,0.28)" />
<rect x="1598.80" y="0.00" width="1.60" height="126.00" fill="rgba(0,0,0,0.33)" />
<text x="1605.50" y="21.80" font-size="18.5" fill="#2a2010" font-weight="normal" text-anchor="start" textLength="33.40" lengthAdjust="spacingAndGlyphs" stroke="#2a2010" stroke-width="0.45" >HAT</text>
</g>
<rect x="64.00" y="1120.00" width="153.50" height="127.00" fill="#585858" />
<rect x="217.50" y="1120.00" width="153.50" height="127.00" fill="#5e5e5e" />
<rect x="371.00" y="1120.00" width="153.50" height="127.00" fill="#585858" />
<rect x="524.50" y="1120.00" width="153.50" height="127.00" fill="#5e5e5e" />
<rect x="678.00" y="1120.00" width="153.50" height="127.00" fill="#585858" />
<rect x="831.50" y="1120.00" width="153.50" height="127.00" fill="#5e5e5e" />
<rect x="985.00" y="1120.00" width="153.50" height="127.00" fill="#585858" />
<rect x="1138.50" y="1120.00" width="153.50" height="127.00" fill="#5e5e5e" />
<rect x="1292.00" y="1120.00" width="153.50" height="127.00" fill="#585858" />
<rect x="1445.50" y="1120.00" width="153.50" height="127.00" fill="#5e5e5e" />
<rect x="1599.00" y="1120.00" width="153.50" height="127.00" fill="#585858" />
<rect x="1752.50" y="1120.00" width="153.50" height="127.00" fill="#5e5e5e" />
<rect x="1906.00" y="1120.00" width="63.00" height="127.00" fill="#585858" />
<rect x="102.03" y="1120.00" width="1.70" height="127.00" fill="#4e4e4e" />
<rect x="140.40" y="1120.00" width="1.70" height="127.00" fill="#4e4e4e" />
<rect x="178.78" y="1120.00" width="1.70" height="127.00" fill="#4e4e4e" />
<rect x="217.15" y="1120.00" width="1.70" height="127.00" fill="#4e4e4e" />
<rect x="255.53" y="1120.00" width="1.70" height="127.00" fill="#4e4e4e" />
<rect x="293.90" y="1120.00" width="1.70" height="127.00" fill="#4e4e4e" />
<rect x="332.27" y="1120.00" width="1.70" height="127.00" fill="#4e4e4e" />
<rect x="370.65" y="1120.00" width="1.70" height="127.00" fill="#4e4e4e" />
<rect x="409.02" y="1120.00" width="1.70" height="127.00" fill="#4e4e4e" />
<rect x="447.40" y="1120.00" width="1.70" height="127.00" fill="#4e4e4e" />
<rect x="485.77" y="1120.00" width="1.70" height="127.00" fill="#4e4e4e" />
<rect x="524.15" y="1120.00" width="1.70" height="127.00" fill="#4e4e4e" />
<rect x="562.52" y="1120.00" width="1.70" height="127.00" fill="#4e4e4e" />
<rect x="600.90" y="1120.00" width="1.70" height="127.00" fill="#4e4e4e" />
<rect x="639.27" y="1120.00" width="1.70" height="127.00" fill="#4e4e4e" />
<rect x="677.65" y="1120.00" width="1.70" height="127.00" fill="#4e4e4e" />
<rect x="716.02" y="1120.00" width="1.70" height="127.00" fill="#4e4e4e" />
<rect x="754.40" y="1120.00" width="1.70" height="127.00" fill="#4e4e4e" />
<rect x="792.77" y="1120.00" width="1.70" height="127.00" fill="#4e4e4e" />
<rect x="831.15" y="1120.00" width="1.70" height="127.00" fill="#4e4e4e" />
<rect x="869.52" y="1120.00" width="1.70" height="127.00" fill="#4e4e4e" />
<rect x="907.90" y="1120.00" width="1.70" height="127.00" fill="#4e4e4e" />
<rect x="946.27" y="1120.00" width="1.70" height="127.00" fill="#4e4e4e" />
<rect x="984.65" y="1120.00" width="1.70" height="127.00" fill="#4e4e4e" />
<rect x="1023.02" y="1120.00" width="1.70" height="127.00" fill="#4e4e4e" />
<rect x="1061.40" y="1120.00" width="1.70" height="127.00" fill="#4e4e4e" />
<rect x="1099.78" y="1120.00" width="1.70" height="127.00" fill="#4e4e4e" />
<rect x="1138.15" y="1120.00" width="1.70" height="127.00" fill="#4e4e4e" />
<rect x="1176.53" y="1120.00" width="1.70" height="127.00" fill="#4e4e4e" />
<rect x="1214.90" y="1120.00" width="1.70" height="127.00" fill="#4e4e4e" />
<rect x="1253.28" y="1120.00" width="1.70" height="127.00" fill="#4e4e4e" />
<rect x="1291.65" y="1120.00" width="1.70" height="127.00" fill="#4e4e4e" />
<rect x="1330.03" y="1120.00" width="1.70" height="127.00" fill="#4e4e4e" />
<rect x="1368.40" y="1120.00" width="1.70" height="127.00" fill="#4e4e4e" />
<rect x="1406.78" y="1120.00" width="1.70" height="127.00" fill="#4e4e4e" />
<rect x="1445.15" y="1120.00" width="1.70" height="127.00" fill="#4e4e4e" />
<rect x="1483.53" y="1120.00" width="1.70" height="127.00" fill="#4e4e4e" />
<rect x="1521.90" y="1120.00" width="1.70" height="127.00" fill="#4e4e4e" />
<rect x="1560.28" y="1120.00" width="1.70" height="127.00" fill="#4e4e4e" />
<rect x="1598.65" y="1120.00" width="1.70" height="127.00" fill="#4e4e4e" />
<rect x="1637.03" y="1120.00" width="1.70" height="127.00" fill="#4e4e4e" />
<rect x="1675.40" y="1120.00" width="1.70" height="127.00" fill="#4e4e4e" />
<rect x="1713.78" y="1120.00" width="1.70" height="127.00" fill="#4e4e4e" />
<rect x="1752.15" y="1120.00" width="1.70" height="127.00" fill="#4e4e4e" />
<rect x="1790.53" y="1120.00" width="1.70" height="127.00" fill="#4e4e4e" />
<rect x="1828.90" y="1120.00" width="1.70" height="127.00" fill="#4e4e4e" />
<rect x="1867.28" y="1120.00" width="1.70" height="127.00" fill="#4e4e4e" />
<rect x="1905.65" y="1120.00" width="1.70" height="127.00" fill="#4e4e4e" />
<rect x="1944.03" y="1120.00" width="1.70" height="127.00" fill="#4e4e4e" />
<g transform="translate(0,1121)">
<rect x="1599.00" y="-1.00" width="307.00" height="127.00" fill="#e8742f" />
<rect x="1599.00" y="0.00" width="307.00" height="126.00" fill="url(#cbar)" />
<rect x="1600.50" y="30.00" width="305.50" height="96.00" fill="url(#wride7)" />
<rect x="1601.00" y="0.00" width="305.00" height="126.00" fill="url(#tkb7)" />
<rect x="1599.00" y="-0.50" width="307.00" height="1.00" fill="rgba(0,0,0,0.3)" />
<rect x="1599.00" y="29.00" width="307.00" height="1.60" fill="rgba(0,0,0,0.28)" />
<rect x="1598.80" y="0.00" width="1.60" height="126.00" fill="rgba(0,0,0,0.33)" />
<text x="1605.50" y="21.80" font-size="18.5" fill="#2a140a" font-weight="normal" text-anchor="start" textLength="39.00" lengthAdjust="spacingAndGlyphs" stroke="#2a140a" stroke-width="0.45" >RIDE</text>
</g>
<rect x="64.00" y="1251.00" width="153.50" height="212.00" fill="#585858" />
<rect x="217.50" y="1251.00" width="153.50" height="212.00" fill="#5e5e5e" />
<rect x="371.00" y="1251.00" width="153.50" height="212.00" fill="#585858" />
<rect x="524.50" y="1251.00" width="153.50" height="212.00" fill="#5e5e5e" />
<rect x="678.00" y="1251.00" width="153.50" height="212.00" fill="#585858" />
<rect x="831.50" y="1251.00" width="153.50" height="212.00" fill="#5e5e5e" />
<rect x="985.00" y="1251.00" width="153.50" height="212.00" fill="#585858" />
<rect x="1138.50" y="1251.00" width="153.50" height="212.00" fill="#5e5e5e" />
<rect x="1292.00" y="1251.00" width="153.50" height="212.00" fill="#585858" />
<rect x="1445.50" y="1251.00" width="153.50" height="212.00" fill="#5e5e5e" />
<rect x="1599.00" y="1251.00" width="153.50" height="212.00" fill="#585858" />
<rect x="1752.50" y="1251.00" width="153.50" height="212.00" fill="#5e5e5e" />
<rect x="1906.00" y="1251.00" width="63.00" height="212.00" fill="#585858" />
<rect x="102.03" y="1251.00" width="1.70" height="212.00" fill="#4e4e4e" />
<rect x="140.40" y="1251.00" width="1.70" height="212.00" fill="#4e4e4e" />
<rect x="178.78" y="1251.00" width="1.70" height="212.00" fill="#4e4e4e" />
<rect x="217.15" y="1251.00" width="1.70" height="212.00" fill="#4e4e4e" />
<rect x="255.53" y="1251.00" width="1.70" height="212.00" fill="#4e4e4e" />
<rect x="293.90" y="1251.00" width="1.70" height="212.00" fill="#4e4e4e" />
<rect x="332.27" y="1251.00" width="1.70" height="212.00" fill="#4e4e4e" />
<rect x="370.65" y="1251.00" width="1.70" height="212.00" fill="#4e4e4e" />
<rect x="409.02" y="1251.00" width="1.70" height="212.00" fill="#4e4e4e" />
<rect x="447.40" y="1251.00" width="1.70" height="212.00" fill="#4e4e4e" />
<rect x="485.77" y="1251.00" width="1.70" height="212.00" fill="#4e4e4e" />
<rect x="524.15" y="1251.00" width="1.70" height="212.00" fill="#4e4e4e" />
<rect x="562.52" y="1251.00" width="1.70" height="212.00" fill="#4e4e4e" />
<rect x="600.90" y="1251.00" width="1.70" height="212.00" fill="#4e4e4e" />
<rect x="639.27" y="1251.00" width="1.70" height="212.00" fill="#4e4e4e" />
<rect x="677.65" y="1251.00" width="1.70" height="212.00" fill="#4e4e4e" />
<rect x="716.02" y="1251.00" width="1.70" height="212.00" fill="#4e4e4e" />
<rect x="754.40" y="1251.00" width="1.70" height="212.00" fill="#4e4e4e" />
<rect x="792.77" y="1251.00" width="1.70" height="212.00" fill="#4e4e4e" />
<rect x="831.15" y="1251.00" width="1.70" height="212.00" fill="#4e4e4e" />
<rect x="869.52" y="1251.00" width="1.70" height="212.00" fill="#4e4e4e" />
<rect x="907.90" y="1251.00" width="1.70" height="212.00" fill="#4e4e4e" />
<rect x="946.27" y="1251.00" width="1.70" height="212.00" fill="#4e4e4e" />
<rect x="984.65" y="1251.00" width="1.70" height="212.00" fill="#4e4e4e" />
<rect x="1023.02" y="1251.00" width="1.70" height="212.00" fill="#4e4e4e" />
<rect x="1061.40" y="1251.00" width="1.70" height="212.00" fill="#4e4e4e" />
<rect x="1099.78" y="1251.00" width="1.70" height="212.00" fill="#4e4e4e" />
<rect x="1138.15" y="1251.00" width="1.70" height="212.00" fill="#4e4e4e" />
<rect x="1176.53" y="1251.00" width="1.70" height="212.00" fill="#4e4e4e" />
<rect x="1214.90" y="1251.00" width="1.70" height="212.00" fill="#4e4e4e" />
<rect x="1253.28" y="1251.00" width="1.70" height="212.00" fill="#4e4e4e" />
<rect x="1291.65" y="1251.00" width="1.70" height="212.00" fill="#4e4e4e" />
<rect x="1330.03" y="1251.00" width="1.70" height="212.00" fill="#4e4e4e" />
<rect x="1368.40" y="1251.00" width="1.70" height="212.00" fill="#4e4e4e" />
<rect x="1406.78" y="1251.00" width="1.70" height="212.00" fill="#4e4e4e" />
<rect x="1445.15" y="1251.00" width="1.70" height="212.00" fill="#4e4e4e" />
<rect x="1483.53" y="1251.00" width="1.70" height="212.00" fill="#4e4e4e" />
<rect x="1521.90" y="1251.00" width="1.70" height="212.00" fill="#4e4e4e" />
<rect x="1560.28" y="1251.00" width="1.70" height="212.00" fill="#4e4e4e" />
<rect x="1598.65" y="1251.00" width="1.70" height="212.00" fill="#4e4e4e" />
<rect x="1637.03" y="1251.00" width="1.70" height="212.00" fill="#4e4e4e" />
<rect x="1675.40" y="1251.00" width="1.70" height="212.00" fill="#4e4e4e" />
<rect x="1713.78" y="1251.00" width="1.70" height="212.00" fill="#4e4e4e" />
<rect x="1752.15" y="1251.00" width="1.70" height="212.00" fill="#4e4e4e" />
<rect x="1790.53" y="1251.00" width="1.70" height="212.00" fill="#4e4e4e" />
<rect x="1828.90" y="1251.00" width="1.70" height="212.00" fill="#4e4e4e" />
<rect x="1867.28" y="1251.00" width="1.70" height="212.00" fill="#4e4e4e" />
<rect x="1905.65" y="1251.00" width="1.70" height="212.00" fill="#4e4e4e" />
<rect x="1944.03" y="1251.00" width="1.70" height="212.00" fill="#4e4e4e" />
<rect x="64.00" y="1468.00" width="153.50" height="31.00" fill="#585858" />
<rect x="217.50" y="1468.00" width="153.50" height="31.00" fill="#5e5e5e" />
<rect x="371.00" y="1468.00" width="153.50" height="31.00" fill="#585858" />
<rect x="524.50" y="1468.00" width="153.50" height="31.00" fill="#5e5e5e" />
<rect x="678.00" y="1468.00" width="153.50" height="31.00" fill="#585858" />
<rect x="831.50" y="1468.00" width="153.50" height="31.00" fill="#5e5e5e" />
<rect x="985.00" y="1468.00" width="153.50" height="31.00" fill="#585858" />
<rect x="1138.50" y="1468.00" width="153.50" height="31.00" fill="#5e5e5e" />
<rect x="1292.00" y="1468.00" width="153.50" height="31.00" fill="#585858" />
<rect x="1445.50" y="1468.00" width="153.50" height="31.00" fill="#5e5e5e" />
<rect x="1599.00" y="1468.00" width="153.50" height="31.00" fill="#585858" />
<rect x="1752.50" y="1468.00" width="153.50" height="31.00" fill="#5e5e5e" />
<rect x="1906.00" y="1468.00" width="63.00" height="31.00" fill="#585858" />
<rect x="102.03" y="1468.00" width="1.70" height="31.00" fill="#4e4e4e" />
<rect x="140.40" y="1468.00" width="1.70" height="31.00" fill="#4e4e4e" />
<rect x="178.78" y="1468.00" width="1.70" height="31.00" fill="#4e4e4e" />
<rect x="217.15" y="1468.00" width="1.70" height="31.00" fill="#4e4e4e" />
<rect x="255.53" y="1468.00" width="1.70" height="31.00" fill="#4e4e4e" />
<rect x="293.90" y="1468.00" width="1.70" height="31.00" fill="#4e4e4e" />
<rect x="332.27" y="1468.00" width="1.70" height="31.00" fill="#4e4e4e" />
<rect x="370.65" y="1468.00" width="1.70" height="31.00" fill="#4e4e4e" />
<rect x="409.02" y="1468.00" width="1.70" height="31.00" fill="#4e4e4e" />
<rect x="447.40" y="1468.00" width="1.70" height="31.00" fill="#4e4e4e" />
<rect x="485.77" y="1468.00" width="1.70" height="31.00" fill="#4e4e4e" />
<rect x="524.15" y="1468.00" width="1.70" height="31.00" fill="#4e4e4e" />
<rect x="562.52" y="1468.00" width="1.70" height="31.00" fill="#4e4e4e" />
<rect x="600.90" y="1468.00" width="1.70" height="31.00" fill="#4e4e4e" />
<rect x="639.27" y="1468.00" width="1.70" height="31.00" fill="#4e4e4e" />
<rect x="677.65" y="1468.00" width="1.70" height="31.00" fill="#4e4e4e" />
<rect x="716.02" y="1468.00" width="1.70" height="31.00" fill="#4e4e4e" />
<rect x="754.40" y="1468.00" width="1.70" height="31.00" fill="#4e4e4e" />
<rect x="792.77" y="1468.00" width="1.70" height="31.00" fill="#4e4e4e" />
<rect x="831.15" y="1468.00" width="1.70" height="31.00" fill="#4e4e4e" />
<rect x="869.52" y="1468.00" width="1.70" height="31.00" fill="#4e4e4e" />
<rect x="907.90" y="1468.00" width="1.70" height="31.00" fill="#4e4e4e" />
<rect x="946.27" y="1468.00" width="1.70" height="31.00" fill="#4e4e4e" />
<rect x="984.65" y="1468.00" width="1.70" height="31.00" fill="#4e4e4e" />
<rect x="1023.02" y="1468.00" width="1.70" height="31.00" fill="#4e4e4e" />
<rect x="1061.40" y="1468.00" width="1.70" height="31.00" fill="#4e4e4e" />
<rect x="1099.78" y="1468.00" width="1.70" height="31.00" fill="#4e4e4e" />
<rect x="1138.15" y="1468.00" width="1.70" height="31.00" fill="#4e4e4e" />
<rect x="1176.53" y="1468.00" width="1.70" height="31.00" fill="#4e4e4e" />
<rect x="1214.90" y="1468.00" width="1.70" height="31.00" fill="#4e4e4e" />
<rect x="1253.28" y="1468.00" width="1.70" height="31.00" fill="#4e4e4e" />
<rect x="1291.65" y="1468.00" width="1.70" height="31.00" fill="#4e4e4e" />
<rect x="1330.03" y="1468.00" width="1.70" height="31.00" fill="#4e4e4e" />
<rect x="1368.40" y="1468.00" width="1.70" height="31.00" fill="#4e4e4e" />
<rect x="1406.78" y="1468.00" width="1.70" height="31.00" fill="#4e4e4e" />
<rect x="1445.15" y="1468.00" width="1.70" height="31.00" fill="#4e4e4e" />
<rect x="1483.53" y="1468.00" width="1.70" height="31.00" fill="#4e4e4e" />
<rect x="1521.90" y="1468.00" width="1.70" height="31.00" fill="#4e4e4e" />
<rect x="1560.28" y="1468.00" width="1.70" height="31.00" fill="#4e4e4e" />
<rect x="1598.65" y="1468.00" width="1.70" height="31.00" fill="#4e4e4e" />
<rect x="1637.03" y="1468.00" width="1.70" height="31.00" fill="#4e4e4e" />
<rect x="1675.40" y="1468.00" width="1.70" height="31.00" fill="#4e4e4e" />
<rect x="1713.78" y="1468.00" width="1.70" height="31.00" fill="#4e4e4e" />
<rect x="1752.15" y="1468.00" width="1.70" height="31.00" fill="#4e4e4e" />
<rect x="1790.53" y="1468.00" width="1.70" height="31.00" fill="#4e4e4e" />
<rect x="1828.90" y="1468.00" width="1.70" height="31.00" fill="#4e4e4e" />
<rect x="1867.28" y="1468.00" width="1.70" height="31.00" fill="#4e4e4e" />
<rect x="1905.65" y="1468.00" width="1.70" height="31.00" fill="#4e4e4e" />
<rect x="1944.03" y="1468.00" width="1.70" height="31.00" fill="#4e4e4e" />
<rect x="64.00" y="337.00" width="2432.00" height="3.50" fill="#404040" />
<rect x="64.00" y="467.00" width="2432.00" height="3.50" fill="#404040" />
<rect x="64.00" y="597.00" width="2432.00" height="3.50" fill="#404040" />
<rect x="64.00" y="727.00" width="2432.00" height="3.50" fill="#404040" />
<rect x="64.00" y="857.00" width="2432.00" height="3.50" fill="#404040" />
<rect x="64.00" y="987.00" width="2432.00" height="3.50" fill="#404040" />
<rect x="64.00" y="1117.00" width="2432.00" height="3.50" fill="#404040" />
<rect x="64.00" y="1247.00" width="2432.00" height="3.50" fill="#404040" />
<rect x="64.00" y="1463.50" width="2432.00" height="4.50" fill="#404040" />
<rect x="1969.00" y="211.00" width="3.00" height="1288.00" fill="#404040" />
<rect x="64.00" y="211.00" width="2.00" height="126.00" fill="#dbe8ff" />
<rect x="1972.00" y="210.50" width="170.00" height="126.50" fill="#1c3192" />
<rect x="2142.00" y="210.50" width="4.00" height="126.50" fill="#464646" />
<rect x="2146.00" y="210.50" width="136.00" height="126.50" fill="#5f5f5f" />
<rect x="2282.00" y="210.50" width="3.00" height="126.50" fill="#464646" />
<rect x="2285.00" y="210.50" width="211.00" height="126.50" fill="#5f5f5f" />
<circle cx="1989.3" cy="226" r="10.6" fill="none" stroke="#d9ddef" stroke-opacity="0.75" stroke-width="1.8"/>
<path d="M1983.5 223 H1995 L1989.25 231.5 Z" fill="#d9ddef" fill-opacity="0.8"/>
<text x="2014.50" y="230.80" font-size="18.5" fill="#d9ddef" font-weight="bold" text-anchor="start" textLength="43.00" lengthAdjust="spacingAndGlyphs" >KICK</text>
<rect x="2150.00" y="216.00" width="128.00" height="23.70" fill="#2f2f2f" />
<rect x="2151.20" y="217.20" width="125.60" height="21.30" fill="#3c3c3c" />
<rect x="2153.00" y="219.80" width="5.00" height="16.70" fill="#262626" />
<rect x="2159.00" y="219.80" width="3.70" height="16.70" fill="#262626" />
<rect x="2153.00" y="231.30" width="5.00" height="5.20" fill="#5ee05e" />
<text x="2170.60" y="235.00" font-size="18" fill="#ececec" font-weight="normal" text-anchor="start" textLength="29.00" lengthAdjust="spacingAndGlyphs" stroke="#ececec" stroke-width="0.3" >1/2</text>
<path d="M2261.80 223.00 H2274.30 L2268.00 232.30 Z" fill="#ececec"/>
<rect x="2150.00" y="247.00" width="30.70" height="23.60" fill="#353535" />
<rect x="2151.30" y="248.30" width="28.10" height="21.00" fill="#4a4a4a" />
<text x="2165.35" y="265.50" font-size="18" fill="#ececec" font-weight="normal" text-anchor="middle" textLength="15.30" lengthAdjust="spacingAndGlyphs" stroke="#ececec" stroke-width="0.3" >In</text>
<rect x="2186.80" y="247.00" width="49.00" height="23.60" fill="#353535" />
<rect x="2188.10" y="248.30" width="46.40" height="21.00" fill="#f5b753" />
<text x="2211.30" y="265.50" font-size="18" fill="#141414" font-weight="normal" text-anchor="middle" textLength="40.20" lengthAdjust="spacingAndGlyphs" stroke="#141414" stroke-width="0.3" >Auto</text>
<rect x="2241.40" y="247.00" width="36.60" height="23.60" fill="#353535" />
<rect x="2242.70" y="248.30" width="34.00" height="21.00" fill="#4a4a4a" />
<text x="2259.70" y="265.50" font-size="18" fill="#ececec" font-weight="normal" text-anchor="middle" textLength="28.70" lengthAdjust="spacingAndGlyphs" stroke="#ececec" stroke-width="0.3" >Off</text>
<rect x="2150.00" y="278.60" width="128.00" height="23.20" fill="#2f2f2f" />
<rect x="2151.20" y="279.80" width="125.60" height="20.80" fill="#3c3c3c" />
<text x="2154.40" y="297.60" font-size="18" fill="#ececec" font-weight="normal" text-anchor="start" textLength="62.00" lengthAdjust="spacingAndGlyphs" stroke="#ececec" stroke-width="0.3" >Master</text>
<path d="M2261.80 285.60 H2274.30 L2268.00 294.90 Z" fill="#ececec"/>
<rect x="2150.00" y="309.60" width="128.00" height="23.20" fill="#3a3a3a" />
<rect x="2151.50" y="311.10" width="125.00" height="20.20" fill="#5c5c5c" />
<rect x="2291.00" y="214.30" width="84.00" height="23.30" fill="#2e2e2e" />
<rect x="2292.50" y="215.80" width="81.00" height="20.30" fill="#f5b753" />
<text x="2333.00" y="232.60" font-size="18" fill="#151515" font-weight="normal" text-anchor="middle" stroke="#151515" stroke-width="0.35" >1</text>
<rect x="2382.10" y="214.30" width="38.50" height="23.30" fill="#343434" />
<rect x="2383.40" y="215.60" width="35.90" height="20.70" fill="#4a4a4a" />
<text x="2401.30" y="232.60" font-size="18" fill="#e6e6e6" font-weight="normal" text-anchor="middle" >S</text>
<rect x="2428.10" y="214.30" width="38.50" height="23.30" fill="#343434" />
<rect x="2429.40" y="215.60" width="35.90" height="20.70" fill="#4a4a4a" />
<circle cx="2447.4" cy="226.1" r="6.6" fill="#eeeeee"/>
<rect x="2291.00" y="245.30" width="84.00" height="23.60" fill="#2e2e2e" />
<rect x="2292.40" y="246.70" width="81.20" height="20.80" fill="#3a3a3a" />
<rect x="2292.40" y="246.70" width="68.20" height="20.80" fill="#496677" />
<text x="2333.00" y="263.50" font-size="18" fill="#ececec" font-weight="normal" text-anchor="middle" >0</text>
<rect x="2382.10" y="245.30" width="84.50" height="23.60" fill="#2e2e2e" />
<rect x="2383.50" y="246.70" width="81.70" height="20.80" fill="#3b3b3b" />
<text x="2425.30" y="263.50" font-size="18" fill="#ececec" font-weight="normal" text-anchor="middle" >C</text>
<rect x="2477.20" y="212.40" width="5.80" height="122.70" fill="#2a2a2a" />
<rect x="2484.80" y="212.40" width="5.80" height="122.70" fill="#2a2a2a" />
<rect x="2477.20" y="224.90" width="13.40" height="2.30" fill="#5f5f5f" />
<rect x="1972.00" y="340.50" width="170.00" height="126.50" fill="#3454a1" />
<rect x="2142.00" y="340.50" width="4.00" height="126.50" fill="#464646" />
<rect x="2146.00" y="340.50" width="136.00" height="126.50" fill="#5f5f5f" />
<rect x="2282.00" y="340.50" width="3.00" height="126.50" fill="#464646" />
<rect x="2285.00" y="340.50" width="211.00" height="126.50" fill="#5f5f5f" />
<circle cx="1989.3" cy="356" r="10.6" fill="none" stroke="#dde3f2" stroke-opacity="0.75" stroke-width="1.8"/>
<path d="M1983.5 353 H1995 L1989.25 361.5 Z" fill="#dde3f2" fill-opacity="0.8"/>
<text x="2014.50" y="360.80" font-size="18.5" fill="#dde3f2" font-weight="bold" text-anchor="start" textLength="112.00" lengthAdjust="spacingAndGlyphs" >SUB RUMBLE</text>
<rect x="2150.00" y="346.00" width="128.00" height="23.70" fill="#2f2f2f" />
<rect x="2151.20" y="347.20" width="125.60" height="21.30" fill="#3c3c3c" />
<rect x="2153.00" y="349.80" width="5.00" height="16.70" fill="#262626" />
<rect x="2159.00" y="349.80" width="3.70" height="16.70" fill="#262626" />
<rect x="2153.00" y="361.50" width="9.70" height="5.00" fill="#5ee05e" />
<text x="2170.60" y="365.00" font-size="18" fill="#ececec" font-weight="normal" text-anchor="start" textLength="9.00" lengthAdjust="spacingAndGlyphs" stroke="#ececec" stroke-width="0.3" >1</text>
<path d="M2261.80 353.00 H2274.30 L2268.00 362.30 Z" fill="#ececec"/>
<rect x="2150.00" y="377.00" width="30.70" height="23.60" fill="#353535" />
<rect x="2151.30" y="378.30" width="28.10" height="21.00" fill="#4a4a4a" />
<text x="2165.35" y="395.50" font-size="18" fill="#ececec" font-weight="normal" text-anchor="middle" textLength="15.30" lengthAdjust="spacingAndGlyphs" stroke="#ececec" stroke-width="0.3" >In</text>
<rect x="2186.80" y="377.00" width="49.00" height="23.60" fill="#353535" />
<rect x="2188.10" y="378.30" width="46.40" height="21.00" fill="#4a4a4a" />
<text x="2211.30" y="395.50" font-size="18" fill="#ececec" font-weight="normal" text-anchor="middle" textLength="40.20" lengthAdjust="spacingAndGlyphs" stroke="#ececec" stroke-width="0.3" >Auto</text>
<rect x="2241.40" y="377.00" width="36.60" height="23.60" fill="#353535" />
<rect x="2242.70" y="378.30" width="34.00" height="21.00" fill="#f5b753" />
<text x="2259.70" y="395.50" font-size="18" fill="#141414" font-weight="normal" text-anchor="middle" textLength="28.70" lengthAdjust="spacingAndGlyphs" stroke="#141414" stroke-width="0.3" >Off</text>
<rect x="2150.00" y="408.60" width="128.00" height="23.20" fill="#2f2f2f" />
<rect x="2151.20" y="409.80" width="125.60" height="20.80" fill="#3c3c3c" />
<text x="2154.40" y="427.60" font-size="18" fill="#ececec" font-weight="normal" text-anchor="start" textLength="62.00" lengthAdjust="spacingAndGlyphs" stroke="#ececec" stroke-width="0.3" >Master</text>
<path d="M2261.80 415.60 H2274.30 L2268.00 424.90 Z" fill="#ececec"/>
<rect x="2150.00" y="439.60" width="128.00" height="23.20" fill="#3a3a3a" />
<rect x="2151.50" y="441.10" width="125.00" height="20.20" fill="#5c5c5c" />
<rect x="2291.00" y="344.30" width="84.00" height="23.30" fill="#2e2e2e" />
<rect x="2292.50" y="345.80" width="81.00" height="20.30" fill="#f5b753" />
<text x="2333.00" y="362.60" font-size="18" fill="#151515" font-weight="normal" text-anchor="middle" stroke="#151515" stroke-width="0.35" >2</text>
<rect x="2382.10" y="344.30" width="38.50" height="23.30" fill="#343434" />
<rect x="2383.40" y="345.60" width="35.90" height="20.70" fill="#4a4a4a" />
<text x="2401.30" y="362.60" font-size="18" fill="#e6e6e6" font-weight="normal" text-anchor="middle" >S</text>
<rect x="2428.10" y="344.30" width="38.50" height="23.30" fill="#343434" />
<rect x="2429.40" y="345.60" width="35.90" height="20.70" fill="#4a4a4a" />
<circle cx="2447.4" cy="356.1" r="6.6" fill="#eeeeee"/>
<rect x="2291.00" y="375.30" width="84.00" height="23.60" fill="#2e2e2e" />
<rect x="2292.40" y="376.70" width="81.20" height="20.80" fill="#3a3a3a" />
<rect x="2292.40" y="376.70" width="68.20" height="20.80" fill="#496677" />
<text x="2333.00" y="393.50" font-size="18" fill="#ececec" font-weight="normal" text-anchor="middle" >0</text>
<rect x="2382.10" y="375.30" width="84.50" height="23.60" fill="#2e2e2e" />
<rect x="2383.50" y="376.70" width="81.70" height="20.80" fill="#3b3b3b" />
<text x="2425.30" y="393.50" font-size="18" fill="#ececec" font-weight="normal" text-anchor="middle" >C</text>
<rect x="2477.20" y="342.40" width="5.80" height="122.70" fill="#2a2a2a" />
<rect x="2484.80" y="342.40" width="5.80" height="122.70" fill="#2a2a2a" />
<rect x="2477.20" y="354.90" width="13.40" height="2.30" fill="#5f5f5f" />
<rect x="1972.00" y="470.50" width="170.00" height="126.50" fill="#98c6fa" />
<rect x="2142.00" y="470.50" width="4.00" height="126.50" fill="#464646" />
<rect x="2146.00" y="470.50" width="136.00" height="126.50" fill="#5f5f5f" />
<rect x="2282.00" y="470.50" width="3.00" height="126.50" fill="#464646" />
<rect x="2285.00" y="470.50" width="211.00" height="126.50" fill="#5f5f5f" />
<circle cx="1989.3" cy="486" r="10.6" fill="none" stroke="#1d2733" stroke-opacity="0.75" stroke-width="1.8"/>
<path d="M1983.5 483 H1995 L1989.25 491.5 Z" fill="#1d2733" fill-opacity="0.8"/>
<text x="2014.50" y="490.80" font-size="18.5" fill="#1d2733" font-weight="bold" text-anchor="start" textLength="92.00" lengthAdjust="spacingAndGlyphs" >TOM LOOP</text>
<rect x="2150.00" y="476.00" width="128.00" height="23.70" fill="#2f2f2f" />
<rect x="2151.20" y="477.20" width="125.60" height="21.30" fill="#3c3c3c" />
<rect x="2153.00" y="479.80" width="5.00" height="16.70" fill="#262626" />
<rect x="2159.00" y="479.80" width="3.70" height="16.70" fill="#262626" />
<rect x="2153.00" y="491.30" width="5.00" height="5.20" fill="#5ee05e" />
<text x="2170.60" y="495.00" font-size="18" fill="#ececec" font-weight="normal" text-anchor="start" textLength="29.00" lengthAdjust="spacingAndGlyphs" stroke="#ececec" stroke-width="0.3" >1/2</text>
<path d="M2261.80 483.00 H2274.30 L2268.00 492.30 Z" fill="#ececec"/>
<rect x="2150.00" y="507.00" width="30.70" height="23.60" fill="#353535" />
<rect x="2151.30" y="508.30" width="28.10" height="21.00" fill="#4a4a4a" />
<text x="2165.35" y="525.50" font-size="18" fill="#ececec" font-weight="normal" text-anchor="middle" textLength="15.30" lengthAdjust="spacingAndGlyphs" stroke="#ececec" stroke-width="0.3" >In</text>
<rect x="2186.80" y="507.00" width="49.00" height="23.60" fill="#353535" />
<rect x="2188.10" y="508.30" width="46.40" height="21.00" fill="#f5b753" />
<text x="2211.30" y="525.50" font-size="18" fill="#141414" font-weight="normal" text-anchor="middle" textLength="40.20" lengthAdjust="spacingAndGlyphs" stroke="#141414" stroke-width="0.3" >Auto</text>
<rect x="2241.40" y="507.00" width="36.60" height="23.60" fill="#353535" />
<rect x="2242.70" y="508.30" width="34.00" height="21.00" fill="#4a4a4a" />
<text x="2259.70" y="525.50" font-size="18" fill="#ececec" font-weight="normal" text-anchor="middle" textLength="28.70" lengthAdjust="spacingAndGlyphs" stroke="#ececec" stroke-width="0.3" >Off</text>
<rect x="2150.00" y="538.60" width="128.00" height="23.20" fill="#2f2f2f" />
<rect x="2151.20" y="539.80" width="125.60" height="20.80" fill="#3c3c3c" />
<text x="2154.40" y="557.60" font-size="18" fill="#ececec" font-weight="normal" text-anchor="start" textLength="62.00" lengthAdjust="spacingAndGlyphs" stroke="#ececec" stroke-width="0.3" >Master</text>
<path d="M2261.80 545.60 H2274.30 L2268.00 554.90 Z" fill="#ececec"/>
<rect x="2150.00" y="569.60" width="128.00" height="23.20" fill="#3a3a3a" />
<rect x="2151.50" y="571.10" width="125.00" height="20.20" fill="#5c5c5c" />
<rect x="2291.00" y="474.30" width="84.00" height="23.30" fill="#2e2e2e" />
<rect x="2292.50" y="475.80" width="81.00" height="20.30" fill="#f5b753" />
<text x="2333.00" y="492.60" font-size="18" fill="#151515" font-weight="normal" text-anchor="middle" stroke="#151515" stroke-width="0.35" >3</text>
<rect x="2382.10" y="474.30" width="38.50" height="23.30" fill="#343434" />
<rect x="2383.40" y="475.60" width="35.90" height="20.70" fill="#4a4a4a" />
<text x="2401.30" y="492.60" font-size="18" fill="#e6e6e6" font-weight="normal" text-anchor="middle" >S</text>
<rect x="2428.10" y="474.30" width="38.50" height="23.30" fill="#343434" />
<rect x="2429.40" y="475.60" width="35.90" height="20.70" fill="#4a4a4a" />
<circle cx="2447.4" cy="486.1" r="6.6" fill="#eeeeee"/>
<rect x="2291.00" y="505.30" width="84.00" height="23.60" fill="#2e2e2e" />
<rect x="2292.40" y="506.70" width="81.20" height="20.80" fill="#3a3a3a" />
<rect x="2292.40" y="506.70" width="68.20" height="20.80" fill="#496677" />
<text x="2333.00" y="523.50" font-size="18" fill="#ececec" font-weight="normal" text-anchor="middle" >0</text>
<rect x="2382.10" y="505.30" width="84.50" height="23.60" fill="#2e2e2e" />
<rect x="2383.50" y="506.70" width="81.70" height="20.80" fill="#3b3b3b" />
<text x="2425.30" y="523.50" font-size="18" fill="#ececec" font-weight="normal" text-anchor="middle" >C</text>
<rect x="2477.20" y="472.40" width="5.80" height="122.70" fill="#2a2a2a" />
<rect x="2484.80" y="472.40" width="5.80" height="122.70" fill="#2a2a2a" />
<rect x="2477.20" y="484.90" width="13.40" height="2.30" fill="#5f5f5f" />
<rect x="1972.00" y="600.50" width="170.00" height="126.50" fill="#f2a97e" />
<rect x="2142.00" y="600.50" width="4.00" height="126.50" fill="#464646" />
<rect x="2146.00" y="600.50" width="136.00" height="126.50" fill="#5f5f5f" />
<rect x="2282.00" y="600.50" width="3.00" height="126.50" fill="#464646" />
<rect x="2285.00" y="600.50" width="211.00" height="126.50" fill="#5f5f5f" />
<circle cx="1989.3" cy="616" r="10.6" fill="none" stroke="#2c1f18" stroke-opacity="0.75" stroke-width="1.8"/>
<path d="M1983.5 613 H1995 L1989.25 621.5 Z" fill="#2c1f18" fill-opacity="0.8"/>
<text x="2014.50" y="620.80" font-size="18.5" fill="#2c1f18" font-weight="bold" text-anchor="start" textLength="87.00" lengthAdjust="spacingAndGlyphs" >HAT LOOP</text>
<rect x="2150.00" y="606.00" width="128.00" height="23.70" fill="#2f2f2f" />
<rect x="2151.20" y="607.20" width="125.60" height="21.30" fill="#3c3c3c" />
<rect x="2153.00" y="609.80" width="5.00" height="16.70" fill="#262626" />
<rect x="2159.00" y="609.80" width="3.70" height="16.70" fill="#262626" />
<rect x="2153.00" y="621.30" width="5.00" height="5.20" fill="#5ee05e" />
<text x="2170.60" y="625.00" font-size="18" fill="#ececec" font-weight="normal" text-anchor="start" textLength="29.00" lengthAdjust="spacingAndGlyphs" stroke="#ececec" stroke-width="0.3" >1/2</text>
<path d="M2261.80 613.00 H2274.30 L2268.00 622.30 Z" fill="#ececec"/>
<rect x="2150.00" y="637.00" width="30.70" height="23.60" fill="#353535" />
<rect x="2151.30" y="638.30" width="28.10" height="21.00" fill="#4a4a4a" />
<text x="2165.35" y="655.50" font-size="18" fill="#ececec" font-weight="normal" text-anchor="middle" textLength="15.30" lengthAdjust="spacingAndGlyphs" stroke="#ececec" stroke-width="0.3" >In</text>
<rect x="2186.80" y="637.00" width="49.00" height="23.60" fill="#353535" />
<rect x="2188.10" y="638.30" width="46.40" height="21.00" fill="#f5b753" />
<text x="2211.30" y="655.50" font-size="18" fill="#141414" font-weight="normal" text-anchor="middle" textLength="40.20" lengthAdjust="spacingAndGlyphs" stroke="#141414" stroke-width="0.3" >Auto</text>
<rect x="2241.40" y="637.00" width="36.60" height="23.60" fill="#353535" />
<rect x="2242.70" y="638.30" width="34.00" height="21.00" fill="#4a4a4a" />
<text x="2259.70" y="655.50" font-size="18" fill="#ececec" font-weight="normal" text-anchor="middle" textLength="28.70" lengthAdjust="spacingAndGlyphs" stroke="#ececec" stroke-width="0.3" >Off</text>
<rect x="2150.00" y="668.60" width="128.00" height="23.20" fill="#2f2f2f" />
<rect x="2151.20" y="669.80" width="125.60" height="20.80" fill="#3c3c3c" />
<text x="2154.40" y="687.60" font-size="18" fill="#ececec" font-weight="normal" text-anchor="start" textLength="62.00" lengthAdjust="spacingAndGlyphs" stroke="#ececec" stroke-width="0.3" >Master</text>
<path d="M2261.80 675.60 H2274.30 L2268.00 684.90 Z" fill="#ececec"/>
<rect x="2150.00" y="699.60" width="128.00" height="23.20" fill="#3a3a3a" />
<rect x="2151.50" y="701.10" width="125.00" height="20.20" fill="#5c5c5c" />
<rect x="2291.00" y="604.30" width="84.00" height="23.30" fill="#2e2e2e" />
<rect x="2292.50" y="605.80" width="81.00" height="20.30" fill="#f5b753" />
<text x="2333.00" y="622.60" font-size="18" fill="#151515" font-weight="normal" text-anchor="middle" stroke="#151515" stroke-width="0.35" >4</text>
<rect x="2382.10" y="604.30" width="38.50" height="23.30" fill="#343434" />
<rect x="2383.40" y="605.60" width="35.90" height="20.70" fill="#4a4a4a" />
<text x="2401.30" y="622.60" font-size="18" fill="#e6e6e6" font-weight="normal" text-anchor="middle" >S</text>
<rect x="2428.10" y="604.30" width="38.50" height="23.30" fill="#343434" />
<rect x="2429.40" y="605.60" width="35.90" height="20.70" fill="#4a4a4a" />
<circle cx="2447.4" cy="616.1" r="6.6" fill="#eeeeee"/>
<rect x="2291.00" y="635.30" width="84.00" height="23.60" fill="#2e2e2e" />
<rect x="2292.40" y="636.70" width="81.20" height="20.80" fill="#3a3a3a" />
<rect x="2292.40" y="636.70" width="68.20" height="20.80" fill="#496677" />
<text x="2333.00" y="653.50" font-size="18" fill="#ececec" font-weight="normal" text-anchor="middle" >0</text>
<rect x="2382.10" y="635.30" width="84.50" height="23.60" fill="#2e2e2e" />
<rect x="2383.50" y="636.70" width="81.70" height="20.80" fill="#3b3b3b" />
<text x="2425.30" y="653.50" font-size="18" fill="#ececec" font-weight="normal" text-anchor="middle" >C</text>
<rect x="2477.20" y="602.40" width="5.80" height="122.70" fill="#2a2a2a" />
<rect x="2484.80" y="602.40" width="5.80" height="122.70" fill="#2a2a2a" />
<rect x="2477.20" y="614.90" width="13.40" height="2.30" fill="#5f5f5f" />
<rect x="1972.00" y="730.50" width="170.00" height="126.50" fill="#f2a97e" />
<rect x="2142.00" y="730.50" width="4.00" height="126.50" fill="#464646" />
<rect x="2146.00" y="730.50" width="136.00" height="126.50" fill="#5f5f5f" />
<rect x="2282.00" y="730.50" width="3.00" height="126.50" fill="#464646" />
<rect x="2285.00" y="730.50" width="211.00" height="126.50" fill="#5f5f5f" />
<circle cx="1989.3" cy="746" r="10.6" fill="none" stroke="#2c1f18" stroke-opacity="0.75" stroke-width="1.8"/>
<path d="M1983.5 743 H1995 L1989.25 751.5 Z" fill="#2c1f18" fill-opacity="0.8"/>
<text x="2014.50" y="750.80" font-size="18.5" fill="#2c1f18" font-weight="bold" text-anchor="start" textLength="96.00" lengthAdjust="spacingAndGlyphs" >CLAP LOOP</text>
<rect x="2150.00" y="736.00" width="128.00" height="23.70" fill="#2f2f2f" />
<rect x="2151.20" y="737.20" width="125.60" height="21.30" fill="#3c3c3c" />
<rect x="2153.00" y="739.80" width="5.00" height="16.70" fill="#262626" />
<rect x="2159.00" y="739.80" width="3.70" height="16.70" fill="#262626" />
<rect x="2153.00" y="751.30" width="5.00" height="5.20" fill="#5ee05e" />
<text x="2170.60" y="755.00" font-size="18" fill="#ececec" font-weight="normal" text-anchor="start" textLength="29.00" lengthAdjust="spacingAndGlyphs" stroke="#ececec" stroke-width="0.3" >1/2</text>
<path d="M2261.80 743.00 H2274.30 L2268.00 752.30 Z" fill="#ececec"/>
<rect x="2150.00" y="767.00" width="30.70" height="23.60" fill="#353535" />
<rect x="2151.30" y="768.30" width="28.10" height="21.00" fill="#4a4a4a" />
<text x="2165.35" y="785.50" font-size="18" fill="#ececec" font-weight="normal" text-anchor="middle" textLength="15.30" lengthAdjust="spacingAndGlyphs" stroke="#ececec" stroke-width="0.3" >In</text>
<rect x="2186.80" y="767.00" width="49.00" height="23.60" fill="#353535" />
<rect x="2188.10" y="768.30" width="46.40" height="21.00" fill="#f5b753" />
<text x="2211.30" y="785.50" font-size="18" fill="#141414" font-weight="normal" text-anchor="middle" textLength="40.20" lengthAdjust="spacingAndGlyphs" stroke="#141414" stroke-width="0.3" >Auto</text>
<rect x="2241.40" y="767.00" width="36.60" height="23.60" fill="#353535" />
<rect x="2242.70" y="768.30" width="34.00" height="21.00" fill="#4a4a4a" />
<text x="2259.70" y="785.50" font-size="18" fill="#ececec" font-weight="normal" text-anchor="middle" textLength="28.70" lengthAdjust="spacingAndGlyphs" stroke="#ececec" stroke-width="0.3" >Off</text>
<rect x="2150.00" y="798.60" width="128.00" height="23.20" fill="#2f2f2f" />
<rect x="2151.20" y="799.80" width="125.60" height="20.80" fill="#3c3c3c" />
<text x="2154.40" y="817.60" font-size="18" fill="#ececec" font-weight="normal" text-anchor="start" textLength="62.00" lengthAdjust="spacingAndGlyphs" stroke="#ececec" stroke-width="0.3" >Master</text>
<path d="M2261.80 805.60 H2274.30 L2268.00 814.90 Z" fill="#ececec"/>
<rect x="2150.00" y="829.60" width="128.00" height="23.20" fill="#3a3a3a" />
<rect x="2151.50" y="831.10" width="125.00" height="20.20" fill="#5c5c5c" />
<rect x="2291.00" y="734.30" width="84.00" height="23.30" fill="#2e2e2e" />
<rect x="2292.50" y="735.80" width="81.00" height="20.30" fill="#f5b753" />
<text x="2333.00" y="752.60" font-size="18" fill="#151515" font-weight="normal" text-anchor="middle" stroke="#151515" stroke-width="0.35" >5</text>
<rect x="2382.10" y="734.30" width="38.50" height="23.30" fill="#343434" />
<rect x="2383.40" y="735.60" width="35.90" height="20.70" fill="#4a4a4a" />
<text x="2401.30" y="752.60" font-size="18" fill="#e6e6e6" font-weight="normal" text-anchor="middle" >S</text>
<rect x="2428.10" y="734.30" width="38.50" height="23.30" fill="#343434" />
<rect x="2429.40" y="735.60" width="35.90" height="20.70" fill="#4a4a4a" />
<circle cx="2447.4" cy="746.1" r="6.6" fill="#eeeeee"/>
<rect x="2291.00" y="765.30" width="84.00" height="23.60" fill="#2e2e2e" />
<rect x="2292.40" y="766.70" width="81.20" height="20.80" fill="#3a3a3a" />
<rect x="2292.40" y="766.70" width="68.20" height="20.80" fill="#496677" />
<text x="2333.00" y="783.50" font-size="18" fill="#ececec" font-weight="normal" text-anchor="middle" >0</text>
<rect x="2382.10" y="765.30" width="84.50" height="23.60" fill="#2e2e2e" />
<rect x="2383.50" y="766.70" width="81.70" height="20.80" fill="#3b3b3b" />
<text x="2425.30" y="783.50" font-size="18" fill="#ececec" font-weight="normal" text-anchor="middle" >C</text>
<rect x="2477.20" y="732.40" width="5.80" height="122.70" fill="#2a2a2a" />
<rect x="2484.80" y="732.40" width="5.80" height="122.70" fill="#2a2a2a" />
<rect x="2477.20" y="744.90" width="13.40" height="2.30" fill="#5f5f5f" />
<rect x="1972.00" y="860.50" width="170.00" height="126.50" fill="#f2a97e" />
<rect x="2142.00" y="860.50" width="4.00" height="126.50" fill="#464646" />
<rect x="2146.00" y="860.50" width="136.00" height="126.50" fill="#5f5f5f" />
<rect x="2282.00" y="860.50" width="3.00" height="126.50" fill="#464646" />
<rect x="2285.00" y="860.50" width="211.00" height="126.50" fill="#5f5f5f" />
<circle cx="1989.3" cy="876" r="10.6" fill="none" stroke="#2c1f18" stroke-opacity="0.75" stroke-width="1.8"/>
<path d="M1983.5 873 H1995 L1989.25 881.5 Z" fill="#2c1f18" fill-opacity="0.8"/>
<text x="2014.50" y="880.80" font-size="18.5" fill="#2c1f18" font-weight="bold" text-anchor="start" textLength="118.00" lengthAdjust="spacingAndGlyphs" >WHITE NOISE</text>
<rect x="2150.00" y="866.00" width="128.00" height="23.70" fill="#2f2f2f" />
<rect x="2151.20" y="867.20" width="125.60" height="21.30" fill="#3c3c3c" />
<rect x="2153.00" y="869.80" width="5.00" height="16.70" fill="#262626" />
<rect x="2159.00" y="869.80" width="3.70" height="16.70" fill="#262626" />
<rect x="2153.00" y="881.30" width="5.00" height="5.20" fill="#5ee05e" />
<text x="2170.60" y="885.00" font-size="18" fill="#ececec" font-weight="normal" text-anchor="start" textLength="29.00" lengthAdjust="spacingAndGlyphs" stroke="#ececec" stroke-width="0.3" >1/2</text>
<path d="M2261.80 873.00 H2274.30 L2268.00 882.30 Z" fill="#ececec"/>
<rect x="2150.00" y="897.00" width="30.70" height="23.60" fill="#353535" />
<rect x="2151.30" y="898.30" width="28.10" height="21.00" fill="#4a4a4a" />
<text x="2165.35" y="915.50" font-size="18" fill="#ececec" font-weight="normal" text-anchor="middle" textLength="15.30" lengthAdjust="spacingAndGlyphs" stroke="#ececec" stroke-width="0.3" >In</text>
<rect x="2186.80" y="897.00" width="49.00" height="23.60" fill="#353535" />
<rect x="2188.10" y="898.30" width="46.40" height="21.00" fill="#f5b753" />
<text x="2211.30" y="915.50" font-size="18" fill="#141414" font-weight="normal" text-anchor="middle" textLength="40.20" lengthAdjust="spacingAndGlyphs" stroke="#141414" stroke-width="0.3" >Auto</text>
<rect x="2241.40" y="897.00" width="36.60" height="23.60" fill="#353535" />
<rect x="2242.70" y="898.30" width="34.00" height="21.00" fill="#4a4a4a" />
<text x="2259.70" y="915.50" font-size="18" fill="#ececec" font-weight="normal" text-anchor="middle" textLength="28.70" lengthAdjust="spacingAndGlyphs" stroke="#ececec" stroke-width="0.3" >Off</text>
<rect x="2150.00" y="928.60" width="128.00" height="23.20" fill="#2f2f2f" />
<rect x="2151.20" y="929.80" width="125.60" height="20.80" fill="#3c3c3c" />
<text x="2154.40" y="947.60" font-size="18" fill="#ececec" font-weight="normal" text-anchor="start" textLength="62.00" lengthAdjust="spacingAndGlyphs" stroke="#ececec" stroke-width="0.3" >Master</text>
<path d="M2261.80 935.60 H2274.30 L2268.00 944.90 Z" fill="#ececec"/>
<rect x="2150.00" y="959.60" width="128.00" height="23.20" fill="#3a3a3a" />
<rect x="2151.50" y="961.10" width="125.00" height="20.20" fill="#5c5c5c" />
<rect x="2291.00" y="864.30" width="84.00" height="23.30" fill="#2e2e2e" />
<rect x="2292.50" y="865.80" width="81.00" height="20.30" fill="#f5b753" />
<text x="2333.00" y="882.60" font-size="18" fill="#151515" font-weight="normal" text-anchor="middle" stroke="#151515" stroke-width="0.35" >6</text>
<rect x="2382.10" y="864.30" width="38.50" height="23.30" fill="#343434" />
<rect x="2383.40" y="865.60" width="35.90" height="20.70" fill="#4a4a4a" />
<text x="2401.30" y="882.60" font-size="18" fill="#e6e6e6" font-weight="normal" text-anchor="middle" >S</text>
<rect x="2428.10" y="864.30" width="38.50" height="23.30" fill="#343434" />
<rect x="2429.40" y="865.60" width="35.90" height="20.70" fill="#4a4a4a" />
<circle cx="2447.4" cy="876.1" r="6.6" fill="#eeeeee"/>
<rect x="2291.00" y="895.30" width="84.00" height="23.60" fill="#2e2e2e" />
<rect x="2292.40" y="896.70" width="81.20" height="20.80" fill="#3a3a3a" />
<rect x="2292.40" y="896.70" width="68.20" height="20.80" fill="#496677" />
<text x="2333.00" y="913.50" font-size="18" fill="#ececec" font-weight="normal" text-anchor="middle" >0</text>
<rect x="2382.10" y="895.30" width="84.50" height="23.60" fill="#2e2e2e" />
<rect x="2383.50" y="896.70" width="81.70" height="20.80" fill="#3b3b3b" />
<text x="2425.30" y="913.50" font-size="18" fill="#ececec" font-weight="normal" text-anchor="middle" >C</text>
<rect x="2477.20" y="862.40" width="5.80" height="122.70" fill="#2a2a2a" />
<rect x="2484.80" y="862.40" width="5.80" height="122.70" fill="#2a2a2a" />
<rect x="2477.20" y="874.90" width="13.40" height="2.30" fill="#5f5f5f" />
<rect x="1972.00" y="990.50" width="170.00" height="126.50" fill="#d0ecfc" />
<rect x="2142.00" y="990.50" width="4.00" height="126.50" fill="#464646" />
<rect x="2146.00" y="990.50" width="136.00" height="126.50" fill="#757575" />
<rect x="2282.00" y="990.50" width="3.00" height="126.50" fill="#464646" />
<rect x="2285.00" y="990.50" width="211.00" height="126.50" fill="#757575" />
<circle cx="1989.3" cy="1006" r="10.6" fill="none" stroke="#2a3035" stroke-opacity="0.75" stroke-width="1.8"/>
<path d="M1983.5 1003 H1995 L1989.25 1011.5 Z" fill="#2a3035" fill-opacity="0.8"/>
<text x="2014.50" y="1010.80" font-size="18.5" fill="#2a3035" font-weight="bold" text-anchor="start" textLength="34.50" lengthAdjust="spacingAndGlyphs" >HAT</text>
<rect x="2150.00" y="996.00" width="128.00" height="23.70" fill="#2f2f2f" />
<rect x="2151.20" y="997.20" width="125.60" height="21.30" fill="#3c3c3c" />
<rect x="2153.00" y="999.80" width="5.00" height="16.70" fill="#262626" />
<rect x="2159.00" y="999.80" width="3.70" height="16.70" fill="#262626" />
<rect x="2153.00" y="1011.50" width="9.70" height="5.00" fill="#5ee05e" />
<text x="2170.60" y="1015.00" font-size="18" fill="#ececec" font-weight="normal" text-anchor="start" textLength="9.00" lengthAdjust="spacingAndGlyphs" stroke="#ececec" stroke-width="0.3" >1</text>
<path d="M2261.80 1003.00 H2274.30 L2268.00 1012.30 Z" fill="#ececec"/>
<rect x="2150.00" y="1027.00" width="30.70" height="23.60" fill="#353535" />
<rect x="2151.30" y="1028.30" width="28.10" height="21.00" fill="#4a4a4a" />
<text x="2165.35" y="1045.50" font-size="18" fill="#ececec" font-weight="normal" text-anchor="middle" textLength="15.30" lengthAdjust="spacingAndGlyphs" stroke="#ececec" stroke-width="0.3" >In</text>
<rect x="2186.80" y="1027.00" width="49.00" height="23.60" fill="#353535" />
<rect x="2188.10" y="1028.30" width="46.40" height="21.00" fill="#4a4a4a" />
<text x="2211.30" y="1045.50" font-size="18" fill="#ececec" font-weight="normal" text-anchor="middle" textLength="40.20" lengthAdjust="spacingAndGlyphs" stroke="#ececec" stroke-width="0.3" >Auto</text>
<rect x="2241.40" y="1027.00" width="36.60" height="23.60" fill="#353535" />
<rect x="2242.70" y="1028.30" width="34.00" height="21.00" fill="#f5b753" />
<text x="2259.70" y="1045.50" font-size="18" fill="#141414" font-weight="normal" text-anchor="middle" textLength="28.70" lengthAdjust="spacingAndGlyphs" stroke="#141414" stroke-width="0.3" >Off</text>
<rect x="2150.00" y="1058.60" width="128.00" height="23.20" fill="#2f2f2f" />
<rect x="2151.20" y="1059.80" width="125.60" height="20.80" fill="#3c3c3c" />
<text x="2154.40" y="1077.60" font-size="18" fill="#ececec" font-weight="normal" text-anchor="start" textLength="62.00" lengthAdjust="spacingAndGlyphs" stroke="#ececec" stroke-width="0.3" >Master</text>
<path d="M2261.80 1065.60 H2274.30 L2268.00 1074.90 Z" fill="#ececec"/>
<rect x="2150.00" y="1089.60" width="128.00" height="23.20" fill="#3a3a3a" />
<rect x="2151.50" y="1091.10" width="125.00" height="20.20" fill="#7a7a7a" />
<rect x="2291.00" y="994.30" width="84.00" height="23.30" fill="#2e2e2e" />
<rect x="2292.50" y="995.80" width="81.00" height="20.30" fill="#f5b753" />
<text x="2333.00" y="1012.60" font-size="18" fill="#151515" font-weight="normal" text-anchor="middle" stroke="#151515" stroke-width="0.35" >7</text>
<rect x="2382.10" y="994.30" width="38.50" height="23.30" fill="#343434" />
<rect x="2383.40" y="995.60" width="35.90" height="20.70" fill="#4a4a4a" />
<text x="2401.30" y="1012.60" font-size="18" fill="#e6e6e6" font-weight="normal" text-anchor="middle" >S</text>
<rect x="2428.10" y="994.30" width="38.50" height="23.30" fill="#343434" />
<rect x="2429.40" y="995.60" width="35.90" height="20.70" fill="#4a4a4a" />
<circle cx="2447.4" cy="1006.1" r="6.6" fill="#eeeeee"/>
<rect x="2291.00" y="1025.30" width="84.00" height="23.60" fill="#2e2e2e" />
<rect x="2292.40" y="1026.70" width="81.20" height="20.80" fill="#3a3a3a" />
<rect x="2292.40" y="1026.70" width="68.20" height="20.80" fill="#496677" />
<text x="2333.00" y="1043.50" font-size="18" fill="#ececec" font-weight="normal" text-anchor="middle" >0</text>
<rect x="2382.10" y="1025.30" width="84.50" height="23.60" fill="#2e2e2e" />
<rect x="2383.50" y="1026.70" width="81.70" height="20.80" fill="#3b3b3b" />
<text x="2425.30" y="1043.50" font-size="18" fill="#ececec" font-weight="normal" text-anchor="middle" >C</text>
<rect x="2477.20" y="992.40" width="5.80" height="122.70" fill="#2a2a2a" />
<rect x="2484.80" y="992.40" width="5.80" height="122.70" fill="#2a2a2a" />
<rect x="2477.20" y="1004.90" width="13.40" height="2.30" fill="#757575" />
<rect x="1972.00" y="1120.50" width="170.00" height="126.50" fill="#e8742f" />
<rect x="2142.00" y="1120.50" width="4.00" height="126.50" fill="#464646" />
<rect x="2146.00" y="1120.50" width="136.00" height="126.50" fill="#5f5f5f" />
<rect x="2282.00" y="1120.50" width="3.00" height="126.50" fill="#464646" />
<rect x="2285.00" y="1120.50" width="211.00" height="126.50" fill="#5f5f5f" />
<circle cx="1989.3" cy="1136" r="10.6" fill="none" stroke="#2a140a" stroke-opacity="0.75" stroke-width="1.8"/>
<path d="M1983.5 1133 H1995 L1989.25 1141.5 Z" fill="#2a140a" fill-opacity="0.8"/>
<text x="2014.50" y="1140.80" font-size="18.5" fill="#2a140a" font-weight="bold" text-anchor="start" textLength="41.00" lengthAdjust="spacingAndGlyphs" >RIDE</text>
<rect x="2150.00" y="1126.00" width="128.00" height="23.70" fill="#2f2f2f" />
<rect x="2151.20" y="1127.20" width="125.60" height="21.30" fill="#3c3c3c" />
<rect x="2153.00" y="1129.80" width="5.00" height="16.70" fill="#262626" />
<rect x="2159.00" y="1129.80" width="3.70" height="16.70" fill="#262626" />
<rect x="2153.00" y="1141.50" width="9.70" height="5.00" fill="#5ee05e" />
<text x="2170.60" y="1145.00" font-size="18" fill="#ececec" font-weight="normal" text-anchor="start" textLength="9.00" lengthAdjust="spacingAndGlyphs" stroke="#ececec" stroke-width="0.3" >1</text>
<path d="M2261.80 1133.00 H2274.30 L2268.00 1142.30 Z" fill="#ececec"/>
<rect x="2150.00" y="1157.00" width="30.70" height="23.60" fill="#353535" />
<rect x="2151.30" y="1158.30" width="28.10" height="21.00" fill="#4a4a4a" />
<text x="2165.35" y="1175.50" font-size="18" fill="#ececec" font-weight="normal" text-anchor="middle" textLength="15.30" lengthAdjust="spacingAndGlyphs" stroke="#ececec" stroke-width="0.3" >In</text>
<rect x="2186.80" y="1157.00" width="49.00" height="23.60" fill="#353535" />
<rect x="2188.10" y="1158.30" width="46.40" height="21.00" fill="#4a4a4a" />
<text x="2211.30" y="1175.50" font-size="18" fill="#ececec" font-weight="normal" text-anchor="middle" textLength="40.20" lengthAdjust="spacingAndGlyphs" stroke="#ececec" stroke-width="0.3" >Auto</text>
<rect x="2241.40" y="1157.00" width="36.60" height="23.60" fill="#353535" />
<rect x="2242.70" y="1158.30" width="34.00" height="21.00" fill="#f5b753" />
<text x="2259.70" y="1175.50" font-size="18" fill="#141414" font-weight="normal" text-anchor="middle" textLength="28.70" lengthAdjust="spacingAndGlyphs" stroke="#141414" stroke-width="0.3" >Off</text>
<rect x="2150.00" y="1188.60" width="128.00" height="23.20" fill="#2f2f2f" />
<rect x="2151.20" y="1189.80" width="125.60" height="20.80" fill="#3c3c3c" />
<text x="2154.40" y="1207.60" font-size="18" fill="#ececec" font-weight="normal" text-anchor="start" textLength="62.00" lengthAdjust="spacingAndGlyphs" stroke="#ececec" stroke-width="0.3" >Master</text>
<path d="M2261.80 1195.60 H2274.30 L2268.00 1204.90 Z" fill="#ececec"/>
<rect x="2150.00" y="1219.60" width="128.00" height="23.20" fill="#3a3a3a" />
<rect x="2151.50" y="1221.10" width="125.00" height="20.20" fill="#5c5c5c" />
<rect x="2291.00" y="1124.30" width="84.00" height="23.30" fill="#2e2e2e" />
<rect x="2292.50" y="1125.80" width="81.00" height="20.30" fill="#f5b753" />
<text x="2333.00" y="1142.60" font-size="18" fill="#151515" font-weight="normal" text-anchor="middle" stroke="#151515" stroke-width="0.35" >8</text>
<rect x="2382.10" y="1124.30" width="38.50" height="23.30" fill="#343434" />
<rect x="2383.40" y="1125.60" width="35.90" height="20.70" fill="#4a4a4a" />
<text x="2401.30" y="1142.60" font-size="18" fill="#e6e6e6" font-weight="normal" text-anchor="middle" >S</text>
<rect x="2428.10" y="1124.30" width="38.50" height="23.30" fill="#343434" />
<rect x="2429.40" y="1125.60" width="35.90" height="20.70" fill="#4a4a4a" />
<circle cx="2447.4" cy="1136.1" r="6.6" fill="#eeeeee"/>
<rect x="2291.00" y="1155.30" width="84.00" height="23.60" fill="#2e2e2e" />
<rect x="2292.40" y="1156.70" width="81.20" height="20.80" fill="#3a3a3a" />
<rect x="2292.40" y="1156.70" width="68.20" height="20.80" fill="#496677" />
<text x="2333.00" y="1173.50" font-size="18" fill="#ececec" font-weight="normal" text-anchor="middle" >0</text>
<rect x="2382.10" y="1155.30" width="84.50" height="23.60" fill="#2e2e2e" />
<rect x="2383.50" y="1156.70" width="81.70" height="20.80" fill="#3b3b3b" />
<text x="2425.30" y="1173.50" font-size="18" fill="#ececec" font-weight="normal" text-anchor="middle" >C</text>
<rect x="2477.20" y="1122.40" width="5.80" height="122.70" fill="#2a2a2a" />
<rect x="2484.80" y="1122.40" width="5.80" height="122.70" fill="#2a2a2a" />
<rect x="2477.20" y="1134.90" width="13.40" height="2.30" fill="#5f5f5f" />
<rect x="1972.00" y="1251.00" width="524.00" height="212.50" fill="#5f5f5f" />
<g fill="#3b3b3b"><path d="M1918.2 1471 H1923.8 V1493 H1918.2 V1478.5 L1912.5 1481.5 V1476.8 Z"/><path d="M1941.5 1471 H1946.5 L1936 1493 H1931 Z"/><path d="M1954.4 1471 H1960 V1493 H1954.4 V1478.5 L1948.7 1481.5 V1476.8 Z"/></g>
<rect x="1972.00" y="1468.00" width="170.00" height="31.00" fill="#7b7b7b" />
<circle cx="1989.4" cy="1483.5" r="10.6" fill="none" stroke="#2a2a2a" stroke-width="1.8"/><path d="M1986 1477.5 L1995 1483.5 L1986 1489.5 Z" fill="#2a2a2a"/>
<text x="2018.60" y="1490.00" font-size="18.5" fill="#1a1a1a" font-weight="normal" text-anchor="start" textLength="63.00" lengthAdjust="spacingAndGlyphs" stroke="#1a1a1a" stroke-width="0.5" >Master</text>
<rect x="2142.00" y="1468.00" width="4.00" height="31.00" fill="#464646" />
<rect x="2146.00" y="1468.00" width="136.00" height="31.00" fill="#5f5f5f" />
<rect x="2282.00" y="1468.00" width="3.00" height="31.00" fill="#464646" />
<rect x="2285.00" y="1468.00" width="211.00" height="31.00" fill="#5f5f5f" />
<rect x="2150.00" y="1472.70" width="128.00" height="23.30" fill="#2f2f2f" />
<rect x="2151.20" y="1473.90" width="125.60" height="20.90" fill="#3c3c3c" />
<rect x="2153.00" y="1476.50" width="5.00" height="16.70" fill="#262626" />
<rect x="2159.00" y="1476.50" width="3.70" height="16.70" fill="#262626" />
<text x="2170.60" y="1491.70" font-size="18" fill="#ececec" font-weight="normal" text-anchor="start" textLength="29.00" lengthAdjust="spacingAndGlyphs" stroke="#ececec" stroke-width="0.3" >1/2</text>
<path d="M2261.80 1479.70 H2274.30 L2268.00 1489.00 Z" fill="#ececec"/>
<rect x="2291.00" y="1472.70" width="84.00" height="23.50" fill="#2e2e2e" />
<rect x="2292.40" y="1474.10" width="81.20" height="20.70" fill="#3a3a3a" />
<rect x="2292.40" y="1474.10" width="68.20" height="20.70" fill="#496677" />
<text x="2333.00" y="1491.00" font-size="18" fill="#ececec" font-weight="normal" text-anchor="middle" >0</text>
<rect x="2382.70" y="1472.70" width="84.00" height="23.50" fill="#2e2e2e" />
<rect x="2384.10" y="1474.10" width="81.20" height="20.70" fill="#3a3a3a" />
<rect x="2384.10" y="1474.10" width="68.00" height="20.70" fill="#4f8fe0" />
<text x="2425.00" y="1491.00" font-size="18" fill="#ececec" font-weight="normal" text-anchor="middle" >0</text>
<rect x="2477.20" y="1469.40" width="5.80" height="28.00" fill="#2a2a2a" />
<rect x="2484.80" y="1469.40" width="5.80" height="28.00" fill="#2a2a2a" />
<path d="M64.80 1503 V1514.5 H67.50" fill="none" stroke="#9a9a9a" stroke-width="1.3"/>
<text x="70.00" y="1519.50" font-size="18" fill="#cccccc" font-weight="normal" text-anchor="start" stroke="#cccccc" stroke-width="0.45" >0:00</text>
<rect x="84.77" y="1499.00" width="1.60" height="4.00" fill="#9a9a9a" />
<rect x="106.04" y="1499.00" width="1.60" height="4.00" fill="#9a9a9a" />
<rect x="127.31" y="1499.00" width="1.60" height="4.00" fill="#9a9a9a" />
<rect x="148.58" y="1499.00" width="1.60" height="4.00" fill="#9a9a9a" />
<path d="M171.15 1503 V1514.5 H173.85" fill="none" stroke="#9a9a9a" stroke-width="1.3"/>
<text x="176.35" y="1519.50" font-size="18" fill="#cccccc" font-weight="normal" text-anchor="start" stroke="#cccccc" stroke-width="0.45" >0:05</text>
<rect x="191.12" y="1499.00" width="1.60" height="4.00" fill="#9a9a9a" />
<rect x="212.39" y="1499.00" width="1.60" height="4.00" fill="#9a9a9a" />
<rect x="233.66" y="1499.00" width="1.60" height="4.00" fill="#9a9a9a" />
<rect x="254.93" y="1499.00" width="1.60" height="4.00" fill="#9a9a9a" />
<path d="M277.50 1503 V1514.5 H280.20" fill="none" stroke="#9a9a9a" stroke-width="1.3"/>
<text x="282.70" y="1519.50" font-size="18" fill="#cccccc" font-weight="normal" text-anchor="start" stroke="#cccccc" stroke-width="0.45" >0:10</text>
<rect x="297.47" y="1499.00" width="1.60" height="4.00" fill="#9a9a9a" />
<rect x="318.74" y="1499.00" width="1.60" height="4.00" fill="#9a9a9a" />
<rect x="340.01" y="1499.00" width="1.60" height="4.00" fill="#9a9a9a" />
<rect x="361.28" y="1499.00" width="1.60" height="4.00" fill="#9a9a9a" />
<path d="M383.85 1503 V1514.5 H386.55" fill="none" stroke="#9a9a9a" stroke-width="1.3"/>
<text x="389.05" y="1519.50" font-size="18" fill="#cccccc" font-weight="normal" text-anchor="start" stroke="#cccccc" stroke-width="0.45" >0:15</text>
<rect x="403.82" y="1499.00" width="1.60" height="4.00" fill="#9a9a9a" />
<rect x="425.09" y="1499.00" width="1.60" height="4.00" fill="#9a9a9a" />
<rect x="446.36" y="1499.00" width="1.60" height="4.00" fill="#9a9a9a" />
<rect x="467.63" y="1499.00" width="1.60" height="4.00" fill="#9a9a9a" />
<path d="M490.20 1503 V1514.5 H492.90" fill="none" stroke="#9a9a9a" stroke-width="1.3"/>
<text x="495.40" y="1519.50" font-size="18" fill="#cccccc" font-weight="normal" text-anchor="start" stroke="#cccccc" stroke-width="0.45" >0:20</text>
<rect x="510.17" y="1499.00" width="1.60" height="4.00" fill="#9a9a9a" />
<rect x="531.44" y="1499.00" width="1.60" height="4.00" fill="#9a9a9a" />
<rect x="552.71" y="1499.00" width="1.60" height="4.00" fill="#9a9a9a" />
<rect x="573.98" y="1499.00" width="1.60" height="4.00" fill="#9a9a9a" />
<path d="M596.55 1503 V1514.5 H599.25" fill="none" stroke="#9a9a9a" stroke-width="1.3"/>
<text x="601.75" y="1519.50" font-size="18" fill="#cccccc" font-weight="normal" text-anchor="start" stroke="#cccccc" stroke-width="0.45" >0:25</text>
<rect x="616.52" y="1499.00" width="1.60" height="4.00" fill="#9a9a9a" />
<rect x="637.79" y="1499.00" width="1.60" height="4.00" fill="#9a9a9a" />
<rect x="659.06" y="1499.00" width="1.60" height="4.00" fill="#9a9a9a" />
<rect x="680.33" y="1499.00" width="1.60" height="4.00" fill="#9a9a9a" />
<path d="M702.90 1503 V1514.5 H705.60" fill="none" stroke="#9a9a9a" stroke-width="1.3"/>
<text x="708.10" y="1519.50" font-size="18" fill="#cccccc" font-weight="normal" text-anchor="start" stroke="#cccccc" stroke-width="0.45" >0:30</text>
<rect x="722.87" y="1499.00" width="1.60" height="4.00" fill="#9a9a9a" />
<rect x="744.14" y="1499.00" width="1.60" height="4.00" fill="#9a9a9a" />
<rect x="765.41" y="1499.00" width="1.60" height="4.00" fill="#9a9a9a" />
<rect x="786.68" y="1499.00" width="1.60" height="4.00" fill="#9a9a9a" />
<path d="M809.25 1503 V1514.5 H811.95" fill="none" stroke="#9a9a9a" stroke-width="1.3"/>
<text x="814.45" y="1519.50" font-size="18" fill="#cccccc" font-weight="normal" text-anchor="start" stroke="#cccccc" stroke-width="0.45" >0:35</text>
<rect x="829.22" y="1499.00" width="1.60" height="4.00" fill="#9a9a9a" />
<rect x="850.49" y="1499.00" width="1.60" height="4.00" fill="#9a9a9a" />
<rect x="871.76" y="1499.00" width="1.60" height="4.00" fill="#9a9a9a" />
<rect x="893.03" y="1499.00" width="1.60" height="4.00" fill="#9a9a9a" />
<path d="M915.60 1503 V1514.5 H918.30" fill="none" stroke="#9a9a9a" stroke-width="1.3"/>
<text x="920.80" y="1519.50" font-size="18" fill="#cccccc" font-weight="normal" text-anchor="start" stroke="#cccccc" stroke-width="0.45" >0:40</text>
<rect x="935.57" y="1499.00" width="1.60" height="4.00" fill="#9a9a9a" />
<rect x="956.84" y="1499.00" width="1.60" height="4.00" fill="#9a9a9a" />
<rect x="978.11" y="1499.00" width="1.60" height="4.00" fill="#9a9a9a" />
<rect x="999.38" y="1499.00" width="1.60" height="4.00" fill="#9a9a9a" />
<path d="M1021.95 1503 V1514.5 H1024.65" fill="none" stroke="#9a9a9a" stroke-width="1.3"/>
<text x="1027.15" y="1519.50" font-size="18" fill="#cccccc" font-weight="normal" text-anchor="start" stroke="#cccccc" stroke-width="0.45" >0:45</text>
<rect x="1041.92" y="1499.00" width="1.60" height="4.00" fill="#9a9a9a" />
<rect x="1063.19" y="1499.00" width="1.60" height="4.00" fill="#9a9a9a" />
<rect x="1084.46" y="1499.00" width="1.60" height="4.00" fill="#9a9a9a" />
<rect x="1105.73" y="1499.00" width="1.60" height="4.00" fill="#9a9a9a" />
<path d="M1128.30 1503 V1514.5 H1131.00" fill="none" stroke="#9a9a9a" stroke-width="1.3"/>
<text x="1133.50" y="1519.50" font-size="18" fill="#cccccc" font-weight="normal" text-anchor="start" stroke="#cccccc" stroke-width="0.45" >0:50</text>
<rect x="1148.27" y="1499.00" width="1.60" height="4.00" fill="#9a9a9a" />
<rect x="1169.54" y="1499.00" width="1.60" height="4.00" fill="#9a9a9a" />
<rect x="1190.81" y="1499.00" width="1.60" height="4.00" fill="#9a9a9a" />
<rect x="1212.08" y="1499.00" width="1.60" height="4.00" fill="#9a9a9a" />
<path d="M1234.65 1503 V1514.5 H1237.35" fill="none" stroke="#9a9a9a" stroke-width="1.3"/>
<text x="1239.85" y="1519.50" font-size="18" fill="#cccccc" font-weight="normal" text-anchor="start" stroke="#cccccc" stroke-width="0.45" >0:55</text>
<rect x="1254.62" y="1499.00" width="1.60" height="4.00" fill="#9a9a9a" />
<rect x="1275.89" y="1499.00" width="1.60" height="4.00" fill="#9a9a9a" />
<rect x="1297.16" y="1499.00" width="1.60" height="4.00" fill="#9a9a9a" />
<rect x="1318.43" y="1499.00" width="1.60" height="4.00" fill="#9a9a9a" />
<path d="M1341.00 1503 V1514.5 H1343.70" fill="none" stroke="#9a9a9a" stroke-width="1.3"/>
<text x="1346.20" y="1519.50" font-size="18" fill="#cccccc" font-weight="normal" text-anchor="start" stroke="#cccccc" stroke-width="0.45" >1:00</text>
<rect x="1360.97" y="1499.00" width="1.60" height="4.00" fill="#9a9a9a" />
<rect x="1382.24" y="1499.00" width="1.60" height="4.00" fill="#9a9a9a" />
<rect x="1403.51" y="1499.00" width="1.60" height="4.00" fill="#9a9a9a" />
<rect x="1424.78" y="1499.00" width="1.60" height="4.00" fill="#9a9a9a" />
<path d="M1447.35 1503 V1514.5 H1450.05" fill="none" stroke="#9a9a9a" stroke-width="1.3"/>
<text x="1452.55" y="1519.50" font-size="18" fill="#cccccc" font-weight="normal" text-anchor="start" stroke="#cccccc" stroke-width="0.45" >1:05</text>
<rect x="1467.32" y="1499.00" width="1.60" height="4.00" fill="#9a9a9a" />
<rect x="1488.59" y="1499.00" width="1.60" height="4.00" fill="#9a9a9a" />
<rect x="1509.86" y="1499.00" width="1.60" height="4.00" fill="#9a9a9a" />
<rect x="1531.13" y="1499.00" width="1.60" height="4.00" fill="#9a9a9a" />
<path d="M1553.70 1503 V1514.5 H1556.40" fill="none" stroke="#9a9a9a" stroke-width="1.3"/>
<text x="1558.90" y="1519.50" font-size="18" fill="#cccccc" font-weight="normal" text-anchor="start" stroke="#cccccc" stroke-width="0.45" >1:10</text>
<rect x="1573.67" y="1499.00" width="1.60" height="4.00" fill="#9a9a9a" />
<rect x="1594.94" y="1499.00" width="1.60" height="4.00" fill="#9a9a9a" />
<rect x="1616.21" y="1499.00" width="1.60" height="4.00" fill="#9a9a9a" />
<rect x="1637.48" y="1499.00" width="1.60" height="4.00" fill="#9a9a9a" />
<path d="M1660.05 1503 V1514.5 H1662.75" fill="none" stroke="#9a9a9a" stroke-width="1.3"/>
<text x="1665.25" y="1519.50" font-size="18" fill="#cccccc" font-weight="normal" text-anchor="start" stroke="#cccccc" stroke-width="0.45" >1:15</text>
<rect x="1680.02" y="1499.00" width="1.60" height="4.00" fill="#9a9a9a" />
<rect x="1701.29" y="1499.00" width="1.60" height="4.00" fill="#9a9a9a" />
<rect x="1722.56" y="1499.00" width="1.60" height="4.00" fill="#9a9a9a" />
<rect x="1743.83" y="1499.00" width="1.60" height="4.00" fill="#9a9a9a" />
<path d="M1766.40 1503 V1514.5 H1769.10" fill="none" stroke="#9a9a9a" stroke-width="1.3"/>
<text x="1771.60" y="1519.50" font-size="18" fill="#cccccc" font-weight="normal" text-anchor="start" stroke="#cccccc" stroke-width="0.45" >1:20</text>
<rect x="1786.37" y="1499.00" width="1.60" height="4.00" fill="#9a9a9a" />
<rect x="1807.64" y="1499.00" width="1.60" height="4.00" fill="#9a9a9a" />
<rect x="1828.91" y="1499.00" width="1.60" height="4.00" fill="#9a9a9a" />
<rect x="1850.18" y="1499.00" width="1.60" height="4.00" fill="#9a9a9a" />
<path d="M1872.75 1503 V1514.5 H1875.45" fill="none" stroke="#9a9a9a" stroke-width="1.3"/>
<text x="1877.95" y="1519.50" font-size="18" fill="#cccccc" font-weight="normal" text-anchor="start" stroke="#cccccc" stroke-width="0.45" >1:25</text>
<rect x="1892.72" y="1499.00" width="1.60" height="4.00" fill="#9a9a9a" />
<rect x="1913.99" y="1499.00" width="1.60" height="4.00" fill="#9a9a9a" />
<rect x="1935.26" y="1499.00" width="1.60" height="4.00" fill="#9a9a9a" />
<rect x="1956.53" y="1499.00" width="1.60" height="4.00" fill="#9a9a9a" />
<path d="M64 1499 L71 1505.5 L64 1505.5 Z" fill="#7dd3f7"/>
<circle cx="32" cy="1513.3" r="17.3" fill="#474747"/><path d="M22 1510 q5 -5 10 0 t10 0 M22 1518 q5 -5 10 0 t10 0" fill="none" stroke="#5c5c5c" stroke-width="2"/>
<circle cx="32" cy="1565" r="17.3" fill="#474747"/><path d="M24 1555 L42 1565 L24 1575 Z" fill="#5c5c5c"/>
<rect x="65.5" y="1547.5" width="1966.5" height="35.5" rx="4" fill="#606060" stroke="#474747" stroke-width="3.5"/>
<rect x="2051.5" y="1547.5" width="372" height="35.5" rx="4" fill="#7a7a7a" stroke="#474747" stroke-width="3.5"/>
<rect x="2054.00" y="1564.00" width="367.00" height="4.50" fill="#707070" />
<polyline points="2055.0,1561.69 2055.5,1562.03 2056.0,1559.47 2056.5,1556.28 2057.0,1555.15 2057.5,1556.97 2058.0,1560.19 2058.5,1562.19 2059.0,1561.41 2059.5,1558.54 2060.0,1555.81 2060.5,1555.28 2061.0,1557.28 2061.5,1560.29 2062.0,1562.14 2062.5,1561.55 2063.0,1558.99 2063.5,1556.26 2064.0,1555.19 2064.5,1556.44 2065.0,1559.14 2065.5,1561.54 2066.0,1562.14 2066.5,1560.61 2067.0,1557.94 2067.5,1555.75 2068.0,1555.31 2068.5,1556.84 2069.0,1559.41 2069.5,1561.56 2070.0,1562.11 2070.5,1560.81 2071.0,1558.39 2071.5,1556.16 2072.0,1555.26 2072.5,1556.12 2073.0,1558.27 2073.5,1560.61 2074.0,1562.00 2074.5,1561.79 2075.0,1560.13 2075.5,1557.82 2076.0,1555.93 2076.5,1555.31 2077.0,1556.20 2077.5,1558.18 2078.0,1560.37 2078.5,1561.82 2079.0,1561.95 2079.5,1560.74 2080.0,1558.71 2080.5,1556.69 2081.0,1555.49 2081.5,1555.55 2082.0,1556.82 2082.5,1558.79 2083.0,1560.71 2083.5,1561.87 2084.0,1561.87 2084.5,1560.73 2085.0,1558.89 2085.5,1556.99 2086.0,1555.70 2086.5,1555.44 2087.0,1556.27 2087.5,1557.90 2088.0,1559.78 2088.5,1561.29 2089.0,1561.96 2089.5,1561.61 2090.0,1560.36 2090.5,1558.62 2091.0,1556.91 2091.5,1555.75 2092.0,1555.47 2092.5,1556.13 2093.0,1557.51 2093.5,1559.22 2094.0,1560.77 2094.5,1561.74 2095.0,1561.87 2095.5,1561.14 2096.0,1559.78 2096.5,1558.14 2097.0,1556.66 2097.5,1555.72 2098.0,1555.54 2098.5,1556.15 2099.0,1557.38 2099.5,1558.93 2100.0,1560.40 2100.5,1561.46 2101.0,1561.86 2101.5,1561.52 2102.0,1560.54 2102.5,1559.14 2103.0,1557.66 2103.5,1556.42 2104.0,1555.69 2104.5,1555.62 2105.0,1556.21 2105.5,1557.33 2106.0,1558.72 2106.5,1560.10 2107.0,1561.18 2107.5,1561.74 2108.0,1561.70 2108.5,1561.05 2109.0,1559.95 2109.5,1558.62 2110.0,1557.31 2110.5,1556.28 2111.0,1555.71 2111.5,1555.70 2112.0,1556.24 2112.5,1557.23 2113.0,1558.47 2113.5,1559.75 2114.0,1560.83 2114.5,1561.52 2115.0,1561.73 2115.5,1561.41 2116.0,1560.64 2116.5,1559.55 2117.0,1558.33 2117.5,1557.18 2118.0,1556.28 2118.5,1555.78 2119.0,1555.75 2119.5,1556.18 2120.0,1557.01 2120.5,1558.09 2121.0,1559.25 2121.5,1560.32 2122.0,1561.14 2122.5,1561.59 2123.0,1561.61 2123.5,1561.21 2124.0,1560.45 2124.5,1559.44 2125.0,1558.34 2125.5,1557.29 2126.0,1556.45 2126.5,1555.93 2127.0,1555.79 2127.5,1556.04 2128.0,1556.64 2128.5,1557.52 2129.0,1558.54 2129.5,1559.57 2130.0,1560.49 2130.5,1561.17 2131.0,1561.53 2131.5,1561.53 2132.0,1561.19 2132.5,1560.53 2133.0,1559.66 2133.5,1558.68 2134.0,1557.71 2134.5,1556.87 2135.0,1556.24 2135.5,1555.91 2136.0,1555.90 2136.5,1556.22 2137.0,1556.81 2137.5,1557.62 2138.0,1558.53 2138.5,1559.46 2139.0,1560.30 2139.5,1560.96 2140.0,1561.37 2140.5,1561.49 2141.0,1561.31 2141.5,1560.86 2142.0,1560.19 2142.5,1559.37 2143.0,1558.48 2143.5,1557.63 2144.0,1556.89 2144.5,1556.33 2145.0,1556.02 2145.5,1555.97 2146.0,1556.19 2146.5,1556.65 2147.0,1557.30 2147.5,1558.09 2148.0,1558.92 2148.5,1559.73 2149.0,1560.44 2149.5,1560.98 2150.0,1561.30 2150.5,1561.39 2151.0,1561.24 2151.5,1560.86 2152.0,1560.29 2152.5,1559.58 2153.0,1558.81 2153.5,1558.02 2154.0,1557.31 2154.5,1556.71 2155.0,1556.29 2155.5,1556.08 2156.0,1556.08 2156.5,1556.31 2157.0,1556.72 2157.5,1557.30 2158.0,1557.98 2158.5,1558.72 2159.0,1559.45 2159.5,1560.12 2160.0,1560.66 2160.5,1561.06 2161.0,1561.26 2161.5,1561.27 2162.0,1561.08 2162.5,1560.72 2163.0,1560.20 2163.5,1559.58 2164.0,1558.89 2164.5,1558.20 2165.0,1557.55 2165.5,1556.98 2166.0,1556.55 2166.5,1556.27 2167.0,1556.16 2167.5,1556.24 2168.0,1556.48 2168.5,1556.88 2169.0,1557.40 2169.5,1558.01 2170.0,1558.66 2170.5,1559.31 2171.0,1559.91 2171.5,1560.43 2172.0,1560.82 2172.5,1561.08 2173.0,1561.18 2173.5,1561.12 2174.0,1560.90 2174.5,1560.54 2175.0,1560.07 2175.5,1559.52 2176.0,1558.92 2176.5,1558.31 2177.0,1557.72 2177.5,1557.21 2178.0,1556.78 2178.5,1556.48 2179.0,1556.31 2179.5,1556.29 2180.0,1556.41 2180.5,1556.66 2181.0,1557.03 2181.5,1557.50 2182.0,1558.03 2182.5,1558.60 2183.0,1559.17 2183.5,1559.71 2184.0,1560.18 2184.5,1560.57 2185.0,1560.86 2185.5,1561.02 2186.0,1561.06 2186.5,1560.96 2187.0,1560.74 2187.5,1560.42 2188.0,1560.00 2188.5,1559.52 2189.0,1559.00 2189.5,1558.47 2190.0,1557.95 2190.5,1557.47 2191.0,1557.06 2191.5,1556.74 2192.0,1556.52 2192.5,1556.42 2193.0,1556.42 2193.5,1556.55 2194.0,1556.77 2194.5,1557.10 2195.0,1557.49 2195.5,1557.95 2196.0,1558.44 2196.5,1558.93 2197.0,1559.42 2197.5,1559.86 2198.0,1560.25 2198.5,1560.56 2199.0,1560.78 2199.5,1560.90 2200.0,1560.92 2200.5,1560.84 2201.0,1560.66 2201.5,1560.39 2202.0,1560.05 2202.5,1559.65 2203.0,1559.21 2203.5,1558.75 2204.0,1558.29 2204.5,1557.86 2205.0,1557.46 2205.5,1557.12 2206.0,1556.85 2206.5,1556.66 2207.0,1556.56 2207.5,1556.55 2208.0,1556.63 2208.5,1556.80 2209.0,1557.05 2209.5,1557.36 2210.0,1557.73 2210.5,1558.13 2211.0,1558.55 2211.5,1558.98 2212.0,1559.39 2212.5,1559.78 2213.0,1560.11 2213.5,1560.39 2214.0,1560.60 2214.5,1560.73 2215.0,1560.78 2215.5,1560.75 2216.0,1560.65 2216.5,1560.46 2217.0,1560.22 2217.5,1559.91 2218.0,1559.57 2218.5,1559.19 2219.0,1558.80 2219.5,1558.40 2220.0,1558.02 2220.5,1557.67 2221.0,1557.36 2221.5,1557.10 2222.0,1556.90 2222.5,1556.76 2223.0,1556.70 2223.5,1556.71 2224.0,1556.79 2224.5,1556.93 2225.0,1557.14 2225.5,1557.40 2226.0,1557.70 2226.5,1558.03 2227.0,1558.39 2227.5,1558.75 2228.0,1559.11 2228.5,1559.45 2229.0,1559.77 2229.5,1560.04 2230.0,1560.27 2230.5,1560.45 2231.0,1560.57 2231.5,1560.62 2232.0,1560.61 2232.5,1560.54 2233.0,1560.41 2233.5,1560.23 2234.0,1560.00 2234.5,1559.73 2235.0,1559.43 2235.5,1559.10 2236.0,1558.77 2236.5,1558.44 2237.0,1558.12 2237.5,1557.82 2238.0,1557.55 2238.5,1557.31 2239.0,1557.12 2239.5,1556.98 2240.0,1556.89 2240.5,1556.86 2241.0,1556.88 2241.5,1556.96 2242.0,1557.08 2242.5,1557.26 2243.0,1557.47 2243.5,1557.72 2244.0,1557.99 2244.5,1558.29 2245.0,1558.59 2245.5,1558.90 2246.0,1559.19 2246.5,1559.47 2247.0,1559.73 2247.5,1559.95 2248.0,1560.14 2248.5,1560.29 2249.0,1560.39 2249.5,1560.44 2250.0,1560.45 2250.5,1560.41 2251.0,1560.32 2251.5,1560.19 2252.0,1560.02 2252.5,1559.82 2253.0,1559.59 2253.5,1559.33 2254.0,1559.06 2254.5,1558.79 2255.0,1558.51 2255.5,1558.24 2256.0,1557.99 2256.5,1557.75 2257.0,1557.55 2257.5,1557.37 2258.0,1557.23 2258.5,1557.12 2259.0,1557.06 2259.5,1557.04 2260.0,1557.06 2260.5,1557.12 2261.0,1557.22 2261.5,1557.35 2262.0,1557.52 2262.5,1557.72 2263.0,1557.93 2263.5,1558.17 2421,1558.7" fill="none" stroke="#222" stroke-width="2.2"/>
<polyline points="2055.0,1576.09 2055.5,1576.43 2056.0,1573.87 2056.5,1570.68 2057.0,1569.55 2057.5,1571.37 2058.0,1574.59 2058.5,1576.59 2059.0,1575.81 2059.5,1572.94 2060.0,1570.21 2060.5,1569.68 2061.0,1571.68 2061.5,1574.69 2062.0,1576.54 2062.5,1575.95 2063.0,1573.39 2063.5,1570.66 2064.0,1569.59 2064.5,1570.84 2065.0,1573.54 2065.5,1575.94 2066.0,1576.54 2066.5,1575.01 2067.0,1572.34 2067.5,1570.15 2068.0,1569.71 2068.5,1571.24 2069.0,1573.81 2069.5,1575.96 2070.0,1576.51 2070.5,1575.21 2071.0,1572.79 2071.5,1570.56 2072.0,1569.66 2072.5,1570.52 2073.0,1572.67 2073.5,1575.01 2074.0,1576.40 2074.5,1576.19 2075.0,1574.53 2075.5,1572.22 2076.0,1570.33 2076.5,1569.71 2077.0,1570.60 2077.5,1572.58 2078.0,1574.77 2078.5,1576.22 2079.0,1576.35 2079.5,1575.14 2080.0,1573.11 2080.5,1571.09 2081.0,1569.89 2081.5,1569.95 2082.0,1571.22 2082.5,1573.19 2083.0,1575.11 2083.5,1576.27 2084.0,1576.27 2084.5,1575.13 2085.0,1573.29 2085.5,1571.39 2086.0,1570.10 2086.5,1569.84 2087.0,1570.67 2087.5,1572.30 2088.0,1574.18 2088.5,1575.69 2089.0,1576.36 2089.5,1576.01 2090.0,1574.76 2090.5,1573.02 2091.0,1571.31 2091.5,1570.15 2092.0,1569.87 2092.5,1570.53 2093.0,1571.91 2093.5,1573.62 2094.0,1575.17 2094.5,1576.14 2095.0,1576.27 2095.5,1575.54 2096.0,1574.18 2096.5,1572.54 2097.0,1571.06 2097.5,1570.12 2098.0,1569.94 2098.5,1570.55 2099.0,1571.78 2099.5,1573.33 2100.0,1574.80 2100.5,1575.86 2101.0,1576.26 2101.5,1575.92 2102.0,1574.94 2102.5,1573.54 2103.0,1572.06 2103.5,1570.82 2104.0,1570.09 2104.5,1570.02 2105.0,1570.61 2105.5,1571.73 2106.0,1573.12 2106.5,1574.50 2107.0,1575.58 2107.5,1576.14 2108.0,1576.10 2108.5,1575.45 2109.0,1574.35 2109.5,1573.02 2110.0,1571.71 2110.5,1570.68 2111.0,1570.11 2111.5,1570.10 2112.0,1570.64 2112.5,1571.63 2113.0,1572.87 2113.5,1574.15 2114.0,1575.23 2114.5,1575.92 2115.0,1576.13 2115.5,1575.81 2116.0,1575.04 2116.5,1573.95 2117.0,1572.73 2117.5,1571.58 2118.0,1570.68 2118.5,1570.18 2119.0,1570.15 2119.5,1570.58 2120.0,1571.41 2120.5,1572.49 2121.0,1573.65 2121.5,1574.72 2122.0,1575.54 2122.5,1575.99 2123.0,1576.01 2123.5,1575.61 2124.0,1574.85 2124.5,1573.84 2125.0,1572.74 2125.5,1571.69 2126.0,1570.85 2126.5,1570.33 2127.0,1570.19 2127.5,1570.44 2128.0,1571.04 2128.5,1571.92 2129.0,1572.94 2129.5,1573.97 2130.0,1574.89 2130.5,1575.57 2131.0,1575.93 2131.5,1575.93 2132.0,1575.59 2132.5,1574.93 2133.0,1574.06 2133.5,1573.08 2134.0,1572.11 2134.5,1571.27 2135.0,1570.64 2135.5,1570.31 2136.0,1570.30 2136.5,1570.62 2137.0,1571.21 2137.5,1572.02 2138.0,1572.93 2138.5,1573.86 2139.0,1574.70 2139.5,1575.36 2140.0,1575.77 2140.5,1575.89 2141.0,1575.71 2141.5,1575.26 2142.0,1574.59 2142.5,1573.77 2143.0,1572.88 2143.5,1572.03 2144.0,1571.29 2144.5,1570.73 2145.0,1570.42 2145.5,1570.37 2146.0,1570.59 2146.5,1571.05 2147.0,1571.70 2147.5,1572.49 2148.0,1573.32 2148.5,1574.13 2149.0,1574.84 2149.5,1575.38 2150.0,1575.70 2150.5,1575.79 2151.0,1575.64 2151.5,1575.26 2152.0,1574.69 2152.5,1573.98 2153.0,1573.21 2153.5,1572.42 2154.0,1571.71 2154.5,1571.11 2155.0,1570.69 2155.5,1570.48 2156.0,1570.48 2156.5,1570.71 2157.0,1571.12 2157.5,1571.70 2158.0,1572.38 2158.5,1573.12 2159.0,1573.85 2159.5,1574.52 2160.0,1575.06 2160.5,1575.46 2161.0,1575.66 2161.5,1575.67 2162.0,1575.48 2162.5,1575.12 2163.0,1574.60 2163.5,1573.98 2164.0,1573.29 2164.5,1572.60 2165.0,1571.95 2165.5,1571.38 2166.0,1570.95 2166.5,1570.67 2167.0,1570.56 2167.5,1570.64 2168.0,1570.88 2168.5,1571.28 2169.0,1571.80 2169.5,1572.41 2170.0,1573.06 2170.5,1573.71 2171.0,1574.31 2171.5,1574.83 2172.0,1575.22 2172.5,1575.48 2173.0,1575.58 2173.5,1575.52 2174.0,1575.30 2174.5,1574.94 2175.0,1574.47 2175.5,1573.92 2176.0,1573.32 2176.5,1572.71 2177.0,1572.12 2177.5,1571.61 2178.0,1571.18 2178.5,1570.88 2179.0,1570.71 2179.5,1570.69 2180.0,1570.81 2180.5,1571.06 2181.0,1571.43 2181.5,1571.90 2182.0,1572.43 2182.5,1573.00 2183.0,1573.57 2183.5,1574.11 2184.0,1574.58 2184.5,1574.97 2185.0,1575.26 2185.5,1575.42 2186.0,1575.46 2186.5,1575.36 2187.0,1575.14 2187.5,1574.82 2188.0,1574.40 2188.5,1573.92 2189.0,1573.40 2189.5,1572.87 2190.0,1572.35 2190.5,1571.87 2191.0,1571.46 2191.5,1571.14 2192.0,1570.92 2192.5,1570.82 2193.0,1570.82 2193.5,1570.95 2194.0,1571.17 2194.5,1571.50 2195.0,1571.89 2195.5,1572.35 2196.0,1572.84 2196.5,1573.33 2197.0,1573.82 2197.5,1574.26 2198.0,1574.65 2198.5,1574.96 2199.0,1575.18 2199.5,1575.30 2200.0,1575.32 2200.5,1575.24 2201.0,1575.06 2201.5,1574.79 2202.0,1574.45 2202.5,1574.05 2203.0,1573.61 2203.5,1573.15 2204.0,1572.69 2204.5,1572.26 2205.0,1571.86 2205.5,1571.52 2206.0,1571.25 2206.5,1571.06 2207.0,1570.96 2207.5,1570.95 2208.0,1571.03 2208.5,1571.20 2209.0,1571.45 2209.5,1571.76 2210.0,1572.13 2210.5,1572.53 2211.0,1572.95 2211.5,1573.38 2212.0,1573.79 2212.5,1574.18 2213.0,1574.51 2213.5,1574.79 2214.0,1575.00 2214.5,1575.13 2215.0,1575.18 2215.5,1575.15 2216.0,1575.05 2216.5,1574.86 2217.0,1574.62 2217.5,1574.31 2218.0,1573.97 2218.5,1573.59 2219.0,1573.20 2219.5,1572.80 2220.0,1572.42 2220.5,1572.07 2221.0,1571.76 2221.5,1571.50 2222.0,1571.30 2222.5,1571.16 2223.0,1571.10 2223.5,1571.11 2224.0,1571.19 2224.5,1571.33 2225.0,1571.54 2225.5,1571.80 2226.0,1572.10 2226.5,1572.43 2227.0,1572.79 2227.5,1573.15 2228.0,1573.51 2228.5,1573.85 2229.0,1574.17 2229.5,1574.44 2230.0,1574.67 2230.5,1574.85 2231.0,1574.97 2231.5,1575.02 2232.0,1575.01 2232.5,1574.94 2233.0,1574.81 2233.5,1574.63 2234.0,1574.40 2234.5,1574.13 2235.0,1573.83 2235.5,1573.50 2236.0,1573.17 2236.5,1572.84 2237.0,1572.52 2237.5,1572.22 2238.0,1571.95 2238.5,1571.71 2239.0,1571.52 2239.5,1571.38 2240.0,1571.29 2240.5,1571.26 2241.0,1571.28 2241.5,1571.36 2242.0,1571.48 2242.5,1571.66 2243.0,1571.87 2243.5,1572.12 2244.0,1572.39 2244.5,1572.69 2245.0,1572.99 2245.5,1573.30 2246.0,1573.59 2246.5,1573.87 2247.0,1574.13 2247.5,1574.35 2248.0,1574.54 2248.5,1574.69 2249.0,1574.79 2249.5,1574.84 2250.0,1574.85 2250.5,1574.81 2251.0,1574.72 2251.5,1574.59 2252.0,1574.42 2252.5,1574.22 2253.0,1573.99 2253.5,1573.73 2254.0,1573.46 2254.5,1573.19 2255.0,1572.91 2255.5,1572.64 2256.0,1572.39 2256.5,1572.15 2257.0,1571.95 2257.5,1571.77 2258.0,1571.63 2258.5,1571.52 2259.0,1571.46 2259.5,1571.44 2260.0,1571.46 2260.5,1571.52 2261.0,1571.62 2261.5,1571.75 2262.0,1571.92 2262.5,1572.12 2263.0,1572.33 2263.5,1572.57 2421,1573.1" fill="none" stroke="#222" stroke-width="2.2"/>
<ellipse cx="2058" cy="1558.7" rx="3" ry="4" fill="#222"/><ellipse cx="2058" cy="1573.1" rx="3" ry="4" fill="#222"/>
<rect x="2441" y="1546" width="55" height="38.5" rx="4" fill="#474747"/>
<text x="2468.50" y="1573.00" font-size="19" fill="#f2f2f2" font-weight="bold" text-anchor="middle" textLength="35.00" lengthAdjust="spacingAndGlyphs" >HAT</text>
<circle cx="2527" cy="1565" r="17.3" fill="#474747"/><path d="M2536 1556 L2518 1565 L2536 1574 Z" fill="#5c5c5c"/>
<circle cx="2520.4" cy="1366.4" r="12" fill="#f5b53f"/>
<text x="2520.40" y="1371.40" font-size="11" fill="#2a2a2a" font-weight="bold" text-anchor="middle" >I·O</text>
<circle cx="2520.4" cy="1401.8" r="12" fill="#ececec"/>
<text x="2520.40" y="1406.80" font-size="13" fill="#2a2a2a" font-weight="bold" text-anchor="middle" >R</text>
<circle cx="2520.4" cy="1436.4" r="12" fill="#f5b53f"/>
<text x="2520.40" y="1441.40" font-size="13" fill="#2a2a2a" font-weight="bold" text-anchor="middle" >M</text>
<circle cx="2520.4" cy="1471.3" r="12" fill="#a8a8a8"/>
<text x="2520.40" y="1476.30" font-size="13" fill="#2a2a2a" font-weight="bold" text-anchor="middle" >D</text>
<rect x="892.00" y="1348.00" width="250.00" height="20.00" fill="#5c5c5c" />
<text x="894.40" y="1364.60" font-size="19" fill="#efefef" font-weight="bold" text-anchor="start" textLength="245.30" lengthAdjust="spacingAndGlyphs" >Drop Files and Devices Here</text>
<rect x="1978" y="152.6" width="50.5" height="19.4" rx="9.7" fill="#4d4d4d"/>
<text x="2003.20" y="168.00" font-size="17.5" fill="#f0f0f0" font-weight="normal" text-anchor="middle" textLength="29.00" lengthAdjust="spacingAndGlyphs" >Set</text>
<circle cx="1988" cy="189" r="10" fill="#474747"/><path d="M1993 189 H1984 M1988 184.500 L1983.500 189 L1988 193.500" stroke="#6a6a6a" stroke-width="2.400" fill="none"/>
<circle cx="2019" cy="189" r="10" fill="#474747"/><path d="M2014 189 H2023 M2019 184.500 L2023.500 189 L2019 193.500" stroke="#f0f0f0" stroke-width="2.400" fill="none"/>
<rect x="2052.50" y="180.00" width="38.50" height="19.70" fill="#4a4a4a" />
<path d="M2066 194 L2077 185" stroke="#f0f0f0" stroke-width="2"/><circle cx="2065.5" cy="194.5" r="2.6" fill="#f0f0f0"/><circle cx="2077.5" cy="184.5" r="2.6" fill="#f0f0f0"/>
<rect x="2102.00" y="180.00" width="38.50" height="19.70" fill="#4a4a4a" />
<path d="M2116.500 188 v-2.500 a4.500 4.500 0 0 1 9 0 v2.500" fill="none" stroke="#f0f0f0" stroke-width="2"/><rect x="2114" y="188" width="14" height="8" fill="#f0f0f0"/>
<rect x="0.00" y="0.00" width="2560.00" height="38.00" fill="#c4d4eb" />
<rect x="0.00" y="37.80" width="2560.00" height="1.40" fill="#5d6e88" />
<rect x="0.00" y="39.00" width="2560.00" height="39.00" fill="url(#tbg)" />
<path transform="translate(33.6,3.6) scale(1.25,1.15)" fill="#0e1b2f" d="M12.152 6.896c-.948 0-2.415-1.078-3.96-1.04-2.04.027-3.91 1.183-4.961 3.014-2.117 3.675-.546 9.103 1.519 12.09 1.013 1.454 2.208 3.09 3.792 3.039 1.52-.065 2.09-.987 3.935-.987 1.831 0 2.35.987 3.960.948 1.637-.026 2.676-1.48 3.676-2.948 1.156-1.688 1.636-3.325 1.662-3.415-.039-.013-3.182-1.221-3.220-4.857-.026-3.040 2.480-4.494 2.597-4.559-1.429-2.090-3.623-2.324-4.390-2.376-2-.156-3.675 1.090-4.610 1.090zM15.530 3.830c.843-1.012 1.400-2.427 1.245-3.830-1.207.052-2.662.805-3.532 1.818-.780.896-1.454 2.338-1.273 3.714 1.338.104 2.715-.688 3.559-1.701"/>
<text x="98.20" y="28.20" font-size="24" fill="#0e1b2f" font-weight="bold" text-anchor="start" textLength="47.40" lengthAdjust="spacingAndGlyphs" stroke="#0e1b2f" stroke-width="0.25" >Live</text>
<text x="181.50" y="28.20" font-size="24" fill="#0e1b2f" font-weight="normal" text-anchor="start" textLength="37.20" lengthAdjust="spacingAndGlyphs" stroke="#0e1b2f" stroke-width="0.25" >File</text>
<text x="252.90" y="28.20" font-size="24" fill="#0e1b2f" font-weight="normal" text-anchor="start" textLength="43.10" lengthAdjust="spacingAndGlyphs" stroke="#0e1b2f" stroke-width="0.25" >Edit</text>
<text x="330.00" y="28.20" font-size="24" fill="#0e1b2f" font-weight="normal" text-anchor="start" textLength="74.60" lengthAdjust="spacingAndGlyphs" stroke="#0e1b2f" stroke-width="0.25" >Create</text>
<text x="438.90" y="28.20" font-size="24" fill="#0e1b2f" font-weight="normal" text-anchor="start" textLength="53.50" lengthAdjust="spacingAndGlyphs" stroke="#0e1b2f" stroke-width="0.25" >View</text>
<text x="526.60" y="28.20" font-size="24" fill="#0e1b2f" font-weight="normal" text-anchor="start" textLength="88.70" lengthAdjust="spacingAndGlyphs" stroke="#0e1b2f" stroke-width="0.25" >Options</text>
<text x="648.60" y="28.20" font-size="24" fill="#0e1b2f" font-weight="normal" text-anchor="start" textLength="53.00" lengthAdjust="spacingAndGlyphs" stroke="#0e1b2f" stroke-width="0.25" >Help</text>
<text x="2009.20" y="26.80" font-size="22" fill="#0e1b2f" font-weight="normal" text-anchor="start" textLength="53.30" lengthAdjust="spacingAndGlyphs" stroke="#0e1b2f" stroke-width="0.25" >100%</text>
<text x="2142.90" y="28.20" font-size="24" fill="#0e1b2f" font-weight="normal" text-anchor="start" textLength="201.60" lengthAdjust="spacingAndGlyphs" stroke="#0e1b2f" stroke-width="0.25" >Tue 15 Apr  20:38</text>
<g fill="none" stroke="#0e1b2f" stroke-width="2"><path d="M1781 24 h-4.5 v-16.5 h30.5 v16.5 h-4.5"/></g><path d="M1782 31.4 l9.8 -11 l9.8 11 z" fill="#0e1b2f"/>
<g fill="none" stroke="#0e1b2f" stroke-width="2"><path d="M1843.2 17.5 a13.3 13.3 0 1 1 1.8 7.5"/><path d="M1856 11.5 v8.5 l3.8 4.3"/></g><path d="M1838.5 16.3 l9.5 0 l-4.75 6.2 z" fill="#0e1b2f"/>
<g fill="none" stroke="#0e1b2f" stroke-width="2.4"><path d="M1899.5 14 a25 25 0 0 1 35 0"/><path d="M1904.5 19.5 a17 17 0 0 1 25 0"/><path d="M1909.5 24.5 a9.500 9.500 0 0 1 15 0"/></g><path d="M1913.5 29 l3.5 3.2 l3.5 -3.2 a5 5 0 0 0 -7 0z" fill="#0e1b2f"/>
<path d="M1954 14 h4.5 l9 -5.5 v22 l-9 -5.5 h-4.5 z" fill="#0e1b2f"/><g fill="none" stroke="#0e1b2f" stroke-width="1.9"><path d="M1972 14 a7 7 0 0 1 0 11"/><path d="M1977.5 10 a13 13 0 0 1 0 19"/></g>
<rect x="2072.5" y="10" width="34.5" height="19" rx="3.5" fill="none" stroke="#0e1b2f" stroke-width="2"/><path d="M2108.5 15 a3 4.5 0 0 1 0 9 z" fill="#0e1b2f"/><rect x="2075.5" y="13" width="28.5" height="13" fill="#0e1b2f"/><path d="M2094 7 l-9 13 h6 l-3.5 11 l10.5 -14 h-6 l4 -10z" fill="#0e1b2f" stroke="#c4d4eb" stroke-width="1.6"/>
<circle cx="2388" cy="16.5" r="7.5" fill="none" stroke="#0e1b2f" stroke-width="2.3"/><path d="M2393.5 22 l6.5 6.5" stroke="#0e1b2f" stroke-width="2.6" stroke-linecap="round"/>
<circle cx="2451" cy="18.8" r="14" fill="url(#siri)"/>
<g fill="#0e1b2f"><rect x="2488" y="10" width="4" height="3.500"/><rect x="2495" y="10" width="21" height="3.500"/><rect x="2488" y="17" width="4" height="3.500"/><rect x="2495" y="17" width="21" height="3.500"/><rect x="2488" y="24" width="4" height="3.500"/><rect x="2495" y="24" width="21" height="3.500"/></g>
<circle cx="24.8" cy="58.7" r="10.3" fill="#ed6a5e" stroke="#d45349" stroke-width="0.8"/><circle cx="24.8" cy="58.7" r="3.6" fill="#4d0b07"/>
<circle cx="60.3" cy="58.7" r="10.3" fill="#dcdcdc" stroke="#c5c5c5" stroke-width="0.8"/>
<circle cx="95.9" cy="58.7" r="10.3" fill="#5fc454" stroke="#4fa843" stroke-width="0.8"/>
<text x="1033.60" y="67.00" font-size="22" fill="#4c4c4c" font-weight="normal" text-anchor="start" textLength="491.40" lengthAdjust="spacingAndGlyphs" >Foundations 2.5  [Foundations 2.5 [133 BPM]]</text>
</svg></body></html>
